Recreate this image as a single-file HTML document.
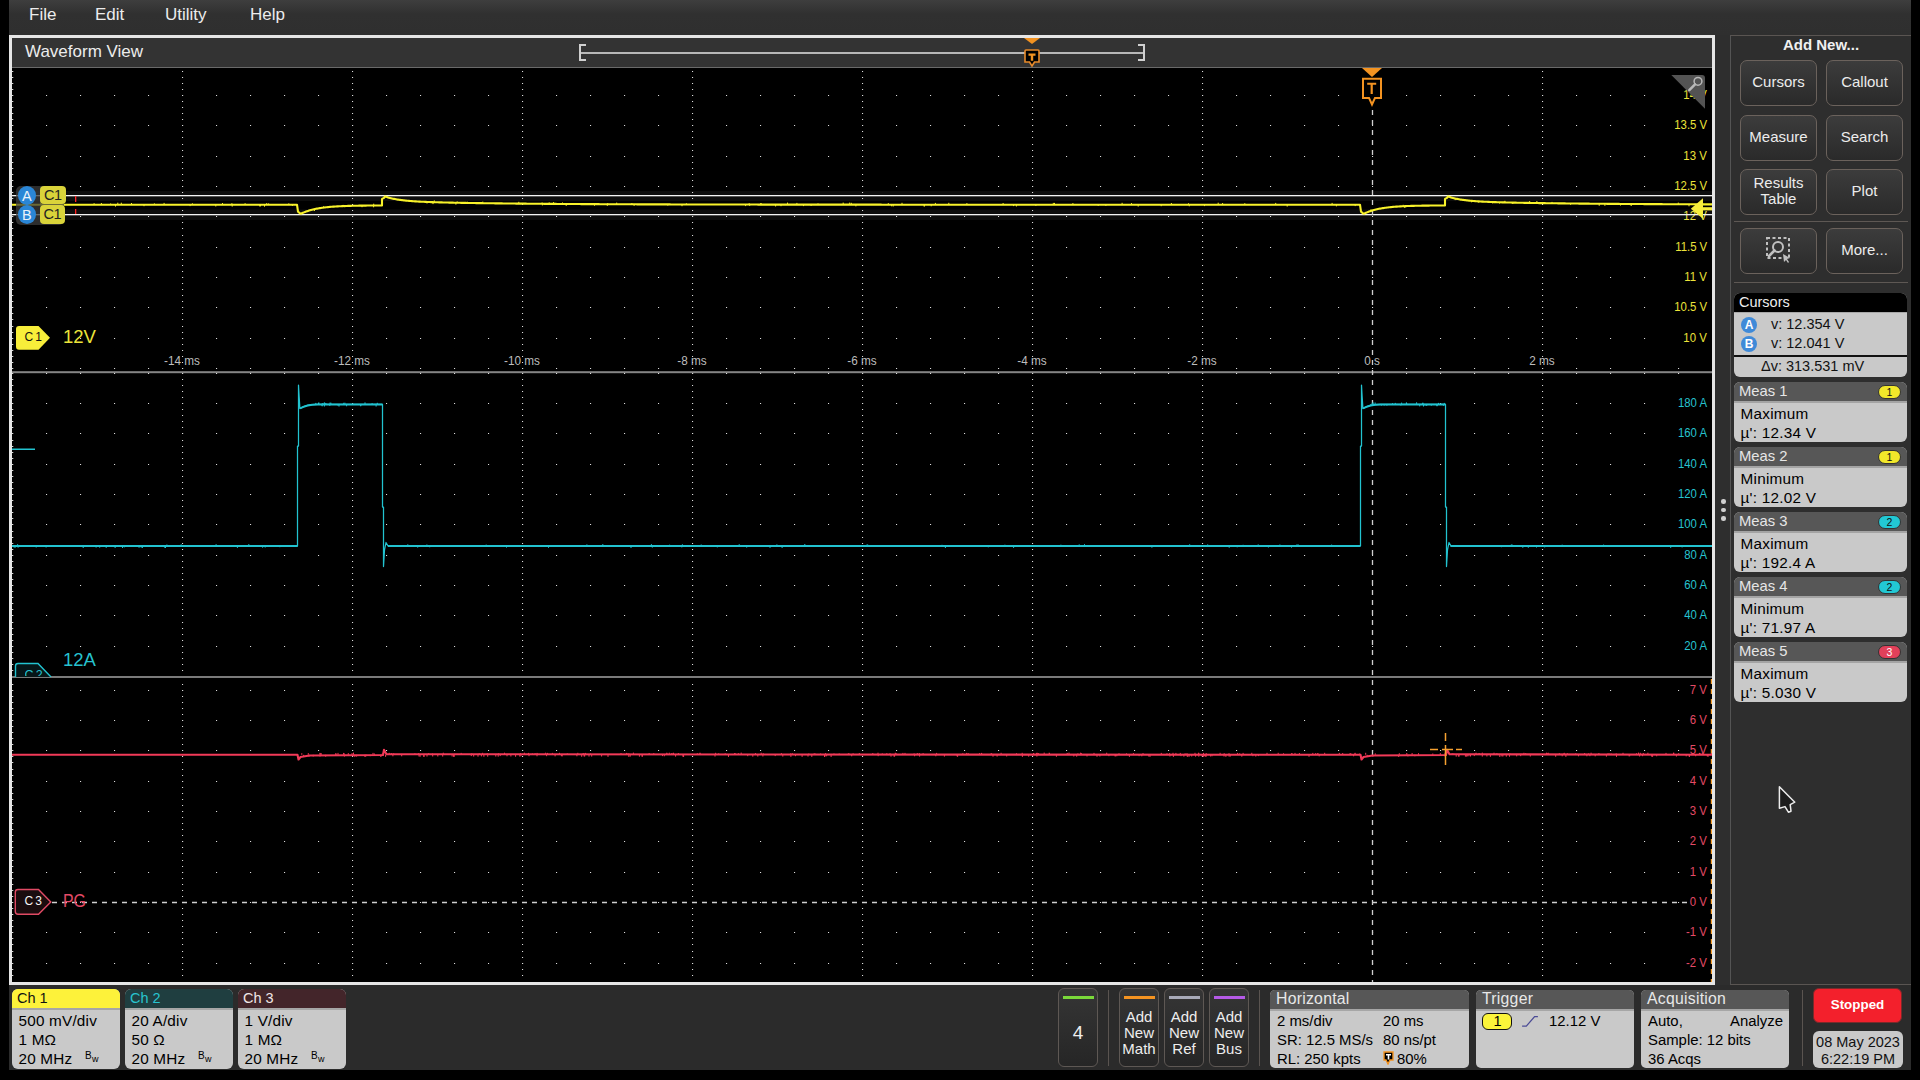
<!DOCTYPE html>
<html><head><meta charset="utf-8"><title>Waveform View</title>
<style>
*{box-sizing:border-box}
html,body{margin:0;padding:0}
body{width:1920px;height:1080px;background:#000;position:relative;overflow:hidden;font-family:"Liberation Sans",sans-serif;color:#e8e8e8}
.a{position:absolute;white-space:nowrap}
.menu{left:9px;top:0;width:1902px;height:35px;background:linear-gradient(#3e3e3e,#303030 14px,#2f2f2f)}
.menu span{position:absolute;top:4.5px;font-size:17px;color:#ececec}
.bg{left:9px;top:35px;width:1902px;height:1035px;background:#2e2e2e}
.frame{left:9px;top:35px;width:1706px;height:950px;border:3px solid #e6e6e6;background:#000}
.hdr{left:12px;top:38px;width:1700px;height:30px;background:#333;border-bottom:1px solid #6a6a6a}
.vl{font-size:12.5px;text-align:right;left:auto;right:213px;background:#000;padding:0 0 0 9px;line-height:15px;transform:scaleX(0.91);transform-origin:100% 50%}
.y{color:#ece43a}.c{color:#26c2cf}.r{color:#e44a66}
.tl{font-size:12.5px;color:#bdbdbd;width:80px;text-align:center;transform:scaleX(0.94)}
.panel{left:1730px;top:35px;width:181px;height:950px;border:1px solid #5a5552;border-left-color:#545454;border-right:none;background:#2e2e2e}
.btn{width:77px;height:46px;border:1px solid #6b625c;border-radius:7px;background:linear-gradient(#3c3c3c,#2a2a2a);color:#ececec;font-size:15px;text-align:center;display:flex;align-items:center;justify-content:center;line-height:16px;white-space:normal;padding-bottom:3px}
.sep{left:1734px;width:174px;height:1px;background:#5e5854}
.box{left:1734px;width:173px;border-radius:6px;overflow:hidden;background:#c9c9c9;color:#111}
.mh{height:21px;background:#575757;color:#e6e6e6;font-size:14.8px;padding-left:5px;line-height:19px;position:relative;border-bottom:2px solid #a4a4a4}
.badge{position:absolute;right:6px;top:3px;width:23px;height:14px;border-radius:7px;font-size:10.5px;line-height:12px;text-align:center;color:#111;border:1px solid #333}
.mb{font-size:15.3px;padding-left:6.5px;line-height:19.2px;padding-top:1px;color:#000;letter-spacing:0.25px}
.chb{top:988.5px;width:108px;height:80.3px;border-radius:6px;overflow:hidden;background:#c9c9c9;color:#111}
.chh{height:21px;font-size:14.5px;padding-left:5px;line-height:19px;border-bottom:2px solid #a6a6a6}
.chl{font-size:15.3px;padding-left:6.5px;line-height:19px;position:relative;top:1.5px;color:#000;letter-spacing:0.2px}
.bw{position:absolute;left:73px;top:0px;font-size:9px}
.bb{top:988px;width:40px;height:79px;border:1px solid #5e5854;border-radius:6px;background:linear-gradient(#353535,#262626);color:#eee;font-size:15px;text-align:center;line-height:16px}
.vsep{top:990px;width:1px;height:76px;background:#5a5450}
.ib{top:989.5px;height:78.5px;border-radius:5px;overflow:hidden;background:#c9c9c9;color:#111}
.ih{height:21px;background:#575757;color:#e8e8e8;font-size:15.8px;letter-spacing:0.25px;padding-left:6px;line-height:18px;border-bottom:2px solid #a6a6a6}
.il{font-size:14.9px;line-height:19px;position:absolute;color:#000}
</style></head><body>
<div class="a bg"></div>
<div class="a menu"><span style="left:20px">File</span><span style="left:86px">Edit</span><span style="left:156px">Utility</span><span style="left:241px">Help</span></div>

<div class="a frame"></div>
<div class="a hdr"></div>
<div class="a" style="left:25px;top:42px;font-size:17px;color:#ececec">Waveform View</div>
<!-- overview bar -->
<div class="a" style="left:580px;top:52px;width:564px;height:2px;background:#b8b8b8"></div>
<div class="a" style="left:579px;top:44px;width:7px;height:17px;border:2px solid #d0d0d0;border-right:none"></div>
<div class="a" style="left:1138px;top:44px;width:7px;height:17px;border:2px solid #d0d0d0;border-left:none"></div>
<svg class="a" style="left:1020px;top:37px" width="26" height="32" viewBox="1020 37 26 32">
<path d="M1024 38 L1040 38 L1032 44 Z" fill="#f39321"/>
<path d="M1026 50 h12 a1 1 0 0 1 1 1 v11 h-4.5 l-2.5 4 l-2.5 -4 h-4.5 v-11 a1 1 0 0 1 1 -1z" fill="#000" stroke="#e88a2a" stroke-width="1.6"/>
<path d="M1028.5 53.5 h7 v2.2 h-2.3 v5 h-2.4 v-5 h-2.3z" fill="#f39321"/>
</svg>

<svg class="a" style="left:12px;top:68px" width="1700" height="914" viewBox="12 68 1700 914">
<rect x="12" y="371.2" width="1700" height="2" fill="#858585"/>
<rect x="12" y="676" width="1700" height="2" fill="#7a7a7a"/>
<path fill="#dcdcdc" d="M46 95h1.1v1.1h-1.1zM80 95h1.1v1.1h-1.1zM114 95h1.1v1.1h-1.1zM148 95h1.1v1.1h-1.1zM182 95h1.1v1.1h-1.1zM216 95h1.1v1.1h-1.1zM250 95h1.1v1.1h-1.1zM284 95h1.1v1.1h-1.1zM318 95h1.1v1.1h-1.1zM352 95h1.1v1.1h-1.1zM386 95h1.1v1.1h-1.1zM420 95h1.1v1.1h-1.1zM454 95h1.1v1.1h-1.1zM488 95h1.1v1.1h-1.1zM522 95h1.1v1.1h-1.1zM556 95h1.1v1.1h-1.1zM590 95h1.1v1.1h-1.1zM624 95h1.1v1.1h-1.1zM658 95h1.1v1.1h-1.1zM692 95h1.1v1.1h-1.1zM726 95h1.1v1.1h-1.1zM760 95h1.1v1.1h-1.1zM794 95h1.1v1.1h-1.1zM828 95h1.1v1.1h-1.1zM862 95h1.1v1.1h-1.1zM896 95h1.1v1.1h-1.1zM930 95h1.1v1.1h-1.1zM964 95h1.1v1.1h-1.1zM998 95h1.1v1.1h-1.1zM1032 95h1.1v1.1h-1.1zM1066 95h1.1v1.1h-1.1zM1100 95h1.1v1.1h-1.1zM1134 95h1.1v1.1h-1.1zM1168 95h1.1v1.1h-1.1zM1202 95h1.1v1.1h-1.1zM1236 95h1.1v1.1h-1.1zM1270 95h1.1v1.1h-1.1zM1304 95h1.1v1.1h-1.1zM1338 95h1.1v1.1h-1.1zM1372 95h1.1v1.1h-1.1zM1406 95h1.1v1.1h-1.1zM1440 95h1.1v1.1h-1.1zM1474 95h1.1v1.1h-1.1zM1508 95h1.1v1.1h-1.1zM1542 95h1.1v1.1h-1.1zM1576 95h1.1v1.1h-1.1zM1610 95h1.1v1.1h-1.1zM1644 95h1.1v1.1h-1.1zM1678 95h1.1v1.1h-1.1zM46 125h1.1v1.1h-1.1zM80 125h1.1v1.1h-1.1zM114 125h1.1v1.1h-1.1zM148 125h1.1v1.1h-1.1zM182 125h1.1v1.1h-1.1zM216 125h1.1v1.1h-1.1zM250 125h1.1v1.1h-1.1zM284 125h1.1v1.1h-1.1zM318 125h1.1v1.1h-1.1zM352 125h1.1v1.1h-1.1zM386 125h1.1v1.1h-1.1zM420 125h1.1v1.1h-1.1zM454 125h1.1v1.1h-1.1zM488 125h1.1v1.1h-1.1zM522 125h1.1v1.1h-1.1zM556 125h1.1v1.1h-1.1zM590 125h1.1v1.1h-1.1zM624 125h1.1v1.1h-1.1zM658 125h1.1v1.1h-1.1zM692 125h1.1v1.1h-1.1zM726 125h1.1v1.1h-1.1zM760 125h1.1v1.1h-1.1zM794 125h1.1v1.1h-1.1zM828 125h1.1v1.1h-1.1zM862 125h1.1v1.1h-1.1zM896 125h1.1v1.1h-1.1zM930 125h1.1v1.1h-1.1zM964 125h1.1v1.1h-1.1zM998 125h1.1v1.1h-1.1zM1032 125h1.1v1.1h-1.1zM1066 125h1.1v1.1h-1.1zM1100 125h1.1v1.1h-1.1zM1134 125h1.1v1.1h-1.1zM1168 125h1.1v1.1h-1.1zM1202 125h1.1v1.1h-1.1zM1236 125h1.1v1.1h-1.1zM1270 125h1.1v1.1h-1.1zM1304 125h1.1v1.1h-1.1zM1338 125h1.1v1.1h-1.1zM1372 125h1.1v1.1h-1.1zM1406 125h1.1v1.1h-1.1zM1440 125h1.1v1.1h-1.1zM1474 125h1.1v1.1h-1.1zM1508 125h1.1v1.1h-1.1zM1542 125h1.1v1.1h-1.1zM1576 125h1.1v1.1h-1.1zM1610 125h1.1v1.1h-1.1zM1644 125h1.1v1.1h-1.1zM1678 125h1.1v1.1h-1.1zM46 156h1.1v1.1h-1.1zM80 156h1.1v1.1h-1.1zM114 156h1.1v1.1h-1.1zM148 156h1.1v1.1h-1.1zM182 156h1.1v1.1h-1.1zM216 156h1.1v1.1h-1.1zM250 156h1.1v1.1h-1.1zM284 156h1.1v1.1h-1.1zM318 156h1.1v1.1h-1.1zM352 156h1.1v1.1h-1.1zM386 156h1.1v1.1h-1.1zM420 156h1.1v1.1h-1.1zM454 156h1.1v1.1h-1.1zM488 156h1.1v1.1h-1.1zM522 156h1.1v1.1h-1.1zM556 156h1.1v1.1h-1.1zM590 156h1.1v1.1h-1.1zM624 156h1.1v1.1h-1.1zM658 156h1.1v1.1h-1.1zM692 156h1.1v1.1h-1.1zM726 156h1.1v1.1h-1.1zM760 156h1.1v1.1h-1.1zM794 156h1.1v1.1h-1.1zM828 156h1.1v1.1h-1.1zM862 156h1.1v1.1h-1.1zM896 156h1.1v1.1h-1.1zM930 156h1.1v1.1h-1.1zM964 156h1.1v1.1h-1.1zM998 156h1.1v1.1h-1.1zM1032 156h1.1v1.1h-1.1zM1066 156h1.1v1.1h-1.1zM1100 156h1.1v1.1h-1.1zM1134 156h1.1v1.1h-1.1zM1168 156h1.1v1.1h-1.1zM1202 156h1.1v1.1h-1.1zM1236 156h1.1v1.1h-1.1zM1270 156h1.1v1.1h-1.1zM1304 156h1.1v1.1h-1.1zM1338 156h1.1v1.1h-1.1zM1372 156h1.1v1.1h-1.1zM1406 156h1.1v1.1h-1.1zM1440 156h1.1v1.1h-1.1zM1474 156h1.1v1.1h-1.1zM1508 156h1.1v1.1h-1.1zM1542 156h1.1v1.1h-1.1zM1576 156h1.1v1.1h-1.1zM1610 156h1.1v1.1h-1.1zM1644 156h1.1v1.1h-1.1zM1678 156h1.1v1.1h-1.1zM46 186h1.1v1.1h-1.1zM80 186h1.1v1.1h-1.1zM114 186h1.1v1.1h-1.1zM148 186h1.1v1.1h-1.1zM182 186h1.1v1.1h-1.1zM216 186h1.1v1.1h-1.1zM250 186h1.1v1.1h-1.1zM284 186h1.1v1.1h-1.1zM318 186h1.1v1.1h-1.1zM352 186h1.1v1.1h-1.1zM386 186h1.1v1.1h-1.1zM420 186h1.1v1.1h-1.1zM454 186h1.1v1.1h-1.1zM488 186h1.1v1.1h-1.1zM522 186h1.1v1.1h-1.1zM556 186h1.1v1.1h-1.1zM590 186h1.1v1.1h-1.1zM624 186h1.1v1.1h-1.1zM658 186h1.1v1.1h-1.1zM692 186h1.1v1.1h-1.1zM726 186h1.1v1.1h-1.1zM760 186h1.1v1.1h-1.1zM794 186h1.1v1.1h-1.1zM828 186h1.1v1.1h-1.1zM862 186h1.1v1.1h-1.1zM896 186h1.1v1.1h-1.1zM930 186h1.1v1.1h-1.1zM964 186h1.1v1.1h-1.1zM998 186h1.1v1.1h-1.1zM1032 186h1.1v1.1h-1.1zM1066 186h1.1v1.1h-1.1zM1100 186h1.1v1.1h-1.1zM1134 186h1.1v1.1h-1.1zM1168 186h1.1v1.1h-1.1zM1202 186h1.1v1.1h-1.1zM1236 186h1.1v1.1h-1.1zM1270 186h1.1v1.1h-1.1zM1304 186h1.1v1.1h-1.1zM1338 186h1.1v1.1h-1.1zM1372 186h1.1v1.1h-1.1zM1406 186h1.1v1.1h-1.1zM1440 186h1.1v1.1h-1.1zM1474 186h1.1v1.1h-1.1zM1508 186h1.1v1.1h-1.1zM1542 186h1.1v1.1h-1.1zM1576 186h1.1v1.1h-1.1zM1610 186h1.1v1.1h-1.1zM1644 186h1.1v1.1h-1.1zM1678 186h1.1v1.1h-1.1zM46 216h1.1v1.1h-1.1zM80 216h1.1v1.1h-1.1zM114 216h1.1v1.1h-1.1zM148 216h1.1v1.1h-1.1zM182 216h1.1v1.1h-1.1zM216 216h1.1v1.1h-1.1zM250 216h1.1v1.1h-1.1zM284 216h1.1v1.1h-1.1zM318 216h1.1v1.1h-1.1zM352 216h1.1v1.1h-1.1zM386 216h1.1v1.1h-1.1zM420 216h1.1v1.1h-1.1zM454 216h1.1v1.1h-1.1zM488 216h1.1v1.1h-1.1zM522 216h1.1v1.1h-1.1zM556 216h1.1v1.1h-1.1zM590 216h1.1v1.1h-1.1zM624 216h1.1v1.1h-1.1zM658 216h1.1v1.1h-1.1zM692 216h1.1v1.1h-1.1zM726 216h1.1v1.1h-1.1zM760 216h1.1v1.1h-1.1zM794 216h1.1v1.1h-1.1zM828 216h1.1v1.1h-1.1zM862 216h1.1v1.1h-1.1zM896 216h1.1v1.1h-1.1zM930 216h1.1v1.1h-1.1zM964 216h1.1v1.1h-1.1zM998 216h1.1v1.1h-1.1zM1032 216h1.1v1.1h-1.1zM1066 216h1.1v1.1h-1.1zM1100 216h1.1v1.1h-1.1zM1134 216h1.1v1.1h-1.1zM1168 216h1.1v1.1h-1.1zM1202 216h1.1v1.1h-1.1zM1236 216h1.1v1.1h-1.1zM1270 216h1.1v1.1h-1.1zM1304 216h1.1v1.1h-1.1zM1338 216h1.1v1.1h-1.1zM1372 216h1.1v1.1h-1.1zM1406 216h1.1v1.1h-1.1zM1440 216h1.1v1.1h-1.1zM1474 216h1.1v1.1h-1.1zM1508 216h1.1v1.1h-1.1zM1542 216h1.1v1.1h-1.1zM1576 216h1.1v1.1h-1.1zM1610 216h1.1v1.1h-1.1zM1644 216h1.1v1.1h-1.1zM1678 216h1.1v1.1h-1.1zM46 247h1.1v1.1h-1.1zM80 247h1.1v1.1h-1.1zM114 247h1.1v1.1h-1.1zM148 247h1.1v1.1h-1.1zM182 247h1.1v1.1h-1.1zM216 247h1.1v1.1h-1.1zM250 247h1.1v1.1h-1.1zM284 247h1.1v1.1h-1.1zM318 247h1.1v1.1h-1.1zM352 247h1.1v1.1h-1.1zM386 247h1.1v1.1h-1.1zM420 247h1.1v1.1h-1.1zM454 247h1.1v1.1h-1.1zM488 247h1.1v1.1h-1.1zM522 247h1.1v1.1h-1.1zM556 247h1.1v1.1h-1.1zM590 247h1.1v1.1h-1.1zM624 247h1.1v1.1h-1.1zM658 247h1.1v1.1h-1.1zM692 247h1.1v1.1h-1.1zM726 247h1.1v1.1h-1.1zM760 247h1.1v1.1h-1.1zM794 247h1.1v1.1h-1.1zM828 247h1.1v1.1h-1.1zM862 247h1.1v1.1h-1.1zM896 247h1.1v1.1h-1.1zM930 247h1.1v1.1h-1.1zM964 247h1.1v1.1h-1.1zM998 247h1.1v1.1h-1.1zM1032 247h1.1v1.1h-1.1zM1066 247h1.1v1.1h-1.1zM1100 247h1.1v1.1h-1.1zM1134 247h1.1v1.1h-1.1zM1168 247h1.1v1.1h-1.1zM1202 247h1.1v1.1h-1.1zM1236 247h1.1v1.1h-1.1zM1270 247h1.1v1.1h-1.1zM1304 247h1.1v1.1h-1.1zM1338 247h1.1v1.1h-1.1zM1372 247h1.1v1.1h-1.1zM1406 247h1.1v1.1h-1.1zM1440 247h1.1v1.1h-1.1zM1474 247h1.1v1.1h-1.1zM1508 247h1.1v1.1h-1.1zM1542 247h1.1v1.1h-1.1zM1576 247h1.1v1.1h-1.1zM1610 247h1.1v1.1h-1.1zM1644 247h1.1v1.1h-1.1zM1678 247h1.1v1.1h-1.1zM46 277h1.1v1.1h-1.1zM80 277h1.1v1.1h-1.1zM114 277h1.1v1.1h-1.1zM148 277h1.1v1.1h-1.1zM182 277h1.1v1.1h-1.1zM216 277h1.1v1.1h-1.1zM250 277h1.1v1.1h-1.1zM284 277h1.1v1.1h-1.1zM318 277h1.1v1.1h-1.1zM352 277h1.1v1.1h-1.1zM386 277h1.1v1.1h-1.1zM420 277h1.1v1.1h-1.1zM454 277h1.1v1.1h-1.1zM488 277h1.1v1.1h-1.1zM522 277h1.1v1.1h-1.1zM556 277h1.1v1.1h-1.1zM590 277h1.1v1.1h-1.1zM624 277h1.1v1.1h-1.1zM658 277h1.1v1.1h-1.1zM692 277h1.1v1.1h-1.1zM726 277h1.1v1.1h-1.1zM760 277h1.1v1.1h-1.1zM794 277h1.1v1.1h-1.1zM828 277h1.1v1.1h-1.1zM862 277h1.1v1.1h-1.1zM896 277h1.1v1.1h-1.1zM930 277h1.1v1.1h-1.1zM964 277h1.1v1.1h-1.1zM998 277h1.1v1.1h-1.1zM1032 277h1.1v1.1h-1.1zM1066 277h1.1v1.1h-1.1zM1100 277h1.1v1.1h-1.1zM1134 277h1.1v1.1h-1.1zM1168 277h1.1v1.1h-1.1zM1202 277h1.1v1.1h-1.1zM1236 277h1.1v1.1h-1.1zM1270 277h1.1v1.1h-1.1zM1304 277h1.1v1.1h-1.1zM1338 277h1.1v1.1h-1.1zM1372 277h1.1v1.1h-1.1zM1406 277h1.1v1.1h-1.1zM1440 277h1.1v1.1h-1.1zM1474 277h1.1v1.1h-1.1zM1508 277h1.1v1.1h-1.1zM1542 277h1.1v1.1h-1.1zM1576 277h1.1v1.1h-1.1zM1610 277h1.1v1.1h-1.1zM1644 277h1.1v1.1h-1.1zM1678 277h1.1v1.1h-1.1zM46 307h1.1v1.1h-1.1zM80 307h1.1v1.1h-1.1zM114 307h1.1v1.1h-1.1zM148 307h1.1v1.1h-1.1zM182 307h1.1v1.1h-1.1zM216 307h1.1v1.1h-1.1zM250 307h1.1v1.1h-1.1zM284 307h1.1v1.1h-1.1zM318 307h1.1v1.1h-1.1zM352 307h1.1v1.1h-1.1zM386 307h1.1v1.1h-1.1zM420 307h1.1v1.1h-1.1zM454 307h1.1v1.1h-1.1zM488 307h1.1v1.1h-1.1zM522 307h1.1v1.1h-1.1zM556 307h1.1v1.1h-1.1zM590 307h1.1v1.1h-1.1zM624 307h1.1v1.1h-1.1zM658 307h1.1v1.1h-1.1zM692 307h1.1v1.1h-1.1zM726 307h1.1v1.1h-1.1zM760 307h1.1v1.1h-1.1zM794 307h1.1v1.1h-1.1zM828 307h1.1v1.1h-1.1zM862 307h1.1v1.1h-1.1zM896 307h1.1v1.1h-1.1zM930 307h1.1v1.1h-1.1zM964 307h1.1v1.1h-1.1zM998 307h1.1v1.1h-1.1zM1032 307h1.1v1.1h-1.1zM1066 307h1.1v1.1h-1.1zM1100 307h1.1v1.1h-1.1zM1134 307h1.1v1.1h-1.1zM1168 307h1.1v1.1h-1.1zM1202 307h1.1v1.1h-1.1zM1236 307h1.1v1.1h-1.1zM1270 307h1.1v1.1h-1.1zM1304 307h1.1v1.1h-1.1zM1338 307h1.1v1.1h-1.1zM1372 307h1.1v1.1h-1.1zM1406 307h1.1v1.1h-1.1zM1440 307h1.1v1.1h-1.1zM1474 307h1.1v1.1h-1.1zM1508 307h1.1v1.1h-1.1zM1542 307h1.1v1.1h-1.1zM1576 307h1.1v1.1h-1.1zM1610 307h1.1v1.1h-1.1zM1644 307h1.1v1.1h-1.1zM1678 307h1.1v1.1h-1.1zM46 338h1.1v1.1h-1.1zM80 338h1.1v1.1h-1.1zM114 338h1.1v1.1h-1.1zM148 338h1.1v1.1h-1.1zM182 338h1.1v1.1h-1.1zM216 338h1.1v1.1h-1.1zM250 338h1.1v1.1h-1.1zM284 338h1.1v1.1h-1.1zM318 338h1.1v1.1h-1.1zM352 338h1.1v1.1h-1.1zM386 338h1.1v1.1h-1.1zM420 338h1.1v1.1h-1.1zM454 338h1.1v1.1h-1.1zM488 338h1.1v1.1h-1.1zM522 338h1.1v1.1h-1.1zM556 338h1.1v1.1h-1.1zM590 338h1.1v1.1h-1.1zM624 338h1.1v1.1h-1.1zM658 338h1.1v1.1h-1.1zM692 338h1.1v1.1h-1.1zM726 338h1.1v1.1h-1.1zM760 338h1.1v1.1h-1.1zM794 338h1.1v1.1h-1.1zM828 338h1.1v1.1h-1.1zM862 338h1.1v1.1h-1.1zM896 338h1.1v1.1h-1.1zM930 338h1.1v1.1h-1.1zM964 338h1.1v1.1h-1.1zM998 338h1.1v1.1h-1.1zM1032 338h1.1v1.1h-1.1zM1066 338h1.1v1.1h-1.1zM1100 338h1.1v1.1h-1.1zM1134 338h1.1v1.1h-1.1zM1168 338h1.1v1.1h-1.1zM1202 338h1.1v1.1h-1.1zM1236 338h1.1v1.1h-1.1zM1270 338h1.1v1.1h-1.1zM1304 338h1.1v1.1h-1.1zM1338 338h1.1v1.1h-1.1zM1372 338h1.1v1.1h-1.1zM1406 338h1.1v1.1h-1.1zM1440 338h1.1v1.1h-1.1zM1474 338h1.1v1.1h-1.1zM1508 338h1.1v1.1h-1.1zM1542 338h1.1v1.1h-1.1zM1576 338h1.1v1.1h-1.1zM1610 338h1.1v1.1h-1.1zM1644 338h1.1v1.1h-1.1zM1678 338h1.1v1.1h-1.1zM46 368h1.1v1.1h-1.1zM80 368h1.1v1.1h-1.1zM114 368h1.1v1.1h-1.1zM148 368h1.1v1.1h-1.1zM182 368h1.1v1.1h-1.1zM216 368h1.1v1.1h-1.1zM250 368h1.1v1.1h-1.1zM284 368h1.1v1.1h-1.1zM318 368h1.1v1.1h-1.1zM352 368h1.1v1.1h-1.1zM386 368h1.1v1.1h-1.1zM420 368h1.1v1.1h-1.1zM454 368h1.1v1.1h-1.1zM488 368h1.1v1.1h-1.1zM522 368h1.1v1.1h-1.1zM556 368h1.1v1.1h-1.1zM590 368h1.1v1.1h-1.1zM624 368h1.1v1.1h-1.1zM658 368h1.1v1.1h-1.1zM692 368h1.1v1.1h-1.1zM726 368h1.1v1.1h-1.1zM760 368h1.1v1.1h-1.1zM794 368h1.1v1.1h-1.1zM828 368h1.1v1.1h-1.1zM862 368h1.1v1.1h-1.1zM896 368h1.1v1.1h-1.1zM930 368h1.1v1.1h-1.1zM964 368h1.1v1.1h-1.1zM998 368h1.1v1.1h-1.1zM1032 368h1.1v1.1h-1.1zM1066 368h1.1v1.1h-1.1zM1100 368h1.1v1.1h-1.1zM1134 368h1.1v1.1h-1.1zM1168 368h1.1v1.1h-1.1zM1202 368h1.1v1.1h-1.1zM1236 368h1.1v1.1h-1.1zM1270 368h1.1v1.1h-1.1zM1304 368h1.1v1.1h-1.1zM1338 368h1.1v1.1h-1.1zM1372 368h1.1v1.1h-1.1zM1406 368h1.1v1.1h-1.1zM1440 368h1.1v1.1h-1.1zM1474 368h1.1v1.1h-1.1zM1508 368h1.1v1.1h-1.1zM1542 368h1.1v1.1h-1.1zM1576 368h1.1v1.1h-1.1zM1610 368h1.1v1.1h-1.1zM1644 368h1.1v1.1h-1.1zM1678 368h1.1v1.1h-1.1zM46 373h1.1v1.1h-1.1zM80 373h1.1v1.1h-1.1zM114 373h1.1v1.1h-1.1zM148 373h1.1v1.1h-1.1zM182 373h1.1v1.1h-1.1zM216 373h1.1v1.1h-1.1zM250 373h1.1v1.1h-1.1zM284 373h1.1v1.1h-1.1zM318 373h1.1v1.1h-1.1zM352 373h1.1v1.1h-1.1zM386 373h1.1v1.1h-1.1zM420 373h1.1v1.1h-1.1zM454 373h1.1v1.1h-1.1zM488 373h1.1v1.1h-1.1zM522 373h1.1v1.1h-1.1zM556 373h1.1v1.1h-1.1zM590 373h1.1v1.1h-1.1zM624 373h1.1v1.1h-1.1zM658 373h1.1v1.1h-1.1zM692 373h1.1v1.1h-1.1zM726 373h1.1v1.1h-1.1zM760 373h1.1v1.1h-1.1zM794 373h1.1v1.1h-1.1zM828 373h1.1v1.1h-1.1zM862 373h1.1v1.1h-1.1zM896 373h1.1v1.1h-1.1zM930 373h1.1v1.1h-1.1zM964 373h1.1v1.1h-1.1zM998 373h1.1v1.1h-1.1zM1032 373h1.1v1.1h-1.1zM1066 373h1.1v1.1h-1.1zM1100 373h1.1v1.1h-1.1zM1134 373h1.1v1.1h-1.1zM1168 373h1.1v1.1h-1.1zM1202 373h1.1v1.1h-1.1zM1236 373h1.1v1.1h-1.1zM1270 373h1.1v1.1h-1.1zM1304 373h1.1v1.1h-1.1zM1338 373h1.1v1.1h-1.1zM1372 373h1.1v1.1h-1.1zM1406 373h1.1v1.1h-1.1zM1440 373h1.1v1.1h-1.1zM1474 373h1.1v1.1h-1.1zM1508 373h1.1v1.1h-1.1zM1542 373h1.1v1.1h-1.1zM1576 373h1.1v1.1h-1.1zM1610 373h1.1v1.1h-1.1zM1644 373h1.1v1.1h-1.1zM1678 373h1.1v1.1h-1.1zM46 403h1.1v1.1h-1.1zM80 403h1.1v1.1h-1.1zM114 403h1.1v1.1h-1.1zM148 403h1.1v1.1h-1.1zM182 403h1.1v1.1h-1.1zM216 403h1.1v1.1h-1.1zM250 403h1.1v1.1h-1.1zM284 403h1.1v1.1h-1.1zM318 403h1.1v1.1h-1.1zM352 403h1.1v1.1h-1.1zM386 403h1.1v1.1h-1.1zM420 403h1.1v1.1h-1.1zM454 403h1.1v1.1h-1.1zM488 403h1.1v1.1h-1.1zM522 403h1.1v1.1h-1.1zM556 403h1.1v1.1h-1.1zM590 403h1.1v1.1h-1.1zM624 403h1.1v1.1h-1.1zM658 403h1.1v1.1h-1.1zM692 403h1.1v1.1h-1.1zM726 403h1.1v1.1h-1.1zM760 403h1.1v1.1h-1.1zM794 403h1.1v1.1h-1.1zM828 403h1.1v1.1h-1.1zM862 403h1.1v1.1h-1.1zM896 403h1.1v1.1h-1.1zM930 403h1.1v1.1h-1.1zM964 403h1.1v1.1h-1.1zM998 403h1.1v1.1h-1.1zM1032 403h1.1v1.1h-1.1zM1066 403h1.1v1.1h-1.1zM1100 403h1.1v1.1h-1.1zM1134 403h1.1v1.1h-1.1zM1168 403h1.1v1.1h-1.1zM1202 403h1.1v1.1h-1.1zM1236 403h1.1v1.1h-1.1zM1270 403h1.1v1.1h-1.1zM1304 403h1.1v1.1h-1.1zM1338 403h1.1v1.1h-1.1zM1372 403h1.1v1.1h-1.1zM1406 403h1.1v1.1h-1.1zM1440 403h1.1v1.1h-1.1zM1474 403h1.1v1.1h-1.1zM1508 403h1.1v1.1h-1.1zM1542 403h1.1v1.1h-1.1zM1576 403h1.1v1.1h-1.1zM1610 403h1.1v1.1h-1.1zM1644 403h1.1v1.1h-1.1zM1678 403h1.1v1.1h-1.1zM46 433h1.1v1.1h-1.1zM80 433h1.1v1.1h-1.1zM114 433h1.1v1.1h-1.1zM148 433h1.1v1.1h-1.1zM182 433h1.1v1.1h-1.1zM216 433h1.1v1.1h-1.1zM250 433h1.1v1.1h-1.1zM284 433h1.1v1.1h-1.1zM318 433h1.1v1.1h-1.1zM352 433h1.1v1.1h-1.1zM386 433h1.1v1.1h-1.1zM420 433h1.1v1.1h-1.1zM454 433h1.1v1.1h-1.1zM488 433h1.1v1.1h-1.1zM522 433h1.1v1.1h-1.1zM556 433h1.1v1.1h-1.1zM590 433h1.1v1.1h-1.1zM624 433h1.1v1.1h-1.1zM658 433h1.1v1.1h-1.1zM692 433h1.1v1.1h-1.1zM726 433h1.1v1.1h-1.1zM760 433h1.1v1.1h-1.1zM794 433h1.1v1.1h-1.1zM828 433h1.1v1.1h-1.1zM862 433h1.1v1.1h-1.1zM896 433h1.1v1.1h-1.1zM930 433h1.1v1.1h-1.1zM964 433h1.1v1.1h-1.1zM998 433h1.1v1.1h-1.1zM1032 433h1.1v1.1h-1.1zM1066 433h1.1v1.1h-1.1zM1100 433h1.1v1.1h-1.1zM1134 433h1.1v1.1h-1.1zM1168 433h1.1v1.1h-1.1zM1202 433h1.1v1.1h-1.1zM1236 433h1.1v1.1h-1.1zM1270 433h1.1v1.1h-1.1zM1304 433h1.1v1.1h-1.1zM1338 433h1.1v1.1h-1.1zM1372 433h1.1v1.1h-1.1zM1406 433h1.1v1.1h-1.1zM1440 433h1.1v1.1h-1.1zM1474 433h1.1v1.1h-1.1zM1508 433h1.1v1.1h-1.1zM1542 433h1.1v1.1h-1.1zM1576 433h1.1v1.1h-1.1zM1610 433h1.1v1.1h-1.1zM1644 433h1.1v1.1h-1.1zM1678 433h1.1v1.1h-1.1zM46 464h1.1v1.1h-1.1zM80 464h1.1v1.1h-1.1zM114 464h1.1v1.1h-1.1zM148 464h1.1v1.1h-1.1zM182 464h1.1v1.1h-1.1zM216 464h1.1v1.1h-1.1zM250 464h1.1v1.1h-1.1zM284 464h1.1v1.1h-1.1zM318 464h1.1v1.1h-1.1zM352 464h1.1v1.1h-1.1zM386 464h1.1v1.1h-1.1zM420 464h1.1v1.1h-1.1zM454 464h1.1v1.1h-1.1zM488 464h1.1v1.1h-1.1zM522 464h1.1v1.1h-1.1zM556 464h1.1v1.1h-1.1zM590 464h1.1v1.1h-1.1zM624 464h1.1v1.1h-1.1zM658 464h1.1v1.1h-1.1zM692 464h1.1v1.1h-1.1zM726 464h1.1v1.1h-1.1zM760 464h1.1v1.1h-1.1zM794 464h1.1v1.1h-1.1zM828 464h1.1v1.1h-1.1zM862 464h1.1v1.1h-1.1zM896 464h1.1v1.1h-1.1zM930 464h1.1v1.1h-1.1zM964 464h1.1v1.1h-1.1zM998 464h1.1v1.1h-1.1zM1032 464h1.1v1.1h-1.1zM1066 464h1.1v1.1h-1.1zM1100 464h1.1v1.1h-1.1zM1134 464h1.1v1.1h-1.1zM1168 464h1.1v1.1h-1.1zM1202 464h1.1v1.1h-1.1zM1236 464h1.1v1.1h-1.1zM1270 464h1.1v1.1h-1.1zM1304 464h1.1v1.1h-1.1zM1338 464h1.1v1.1h-1.1zM1372 464h1.1v1.1h-1.1zM1406 464h1.1v1.1h-1.1zM1440 464h1.1v1.1h-1.1zM1474 464h1.1v1.1h-1.1zM1508 464h1.1v1.1h-1.1zM1542 464h1.1v1.1h-1.1zM1576 464h1.1v1.1h-1.1zM1610 464h1.1v1.1h-1.1zM1644 464h1.1v1.1h-1.1zM1678 464h1.1v1.1h-1.1zM46 494h1.1v1.1h-1.1zM80 494h1.1v1.1h-1.1zM114 494h1.1v1.1h-1.1zM148 494h1.1v1.1h-1.1zM182 494h1.1v1.1h-1.1zM216 494h1.1v1.1h-1.1zM250 494h1.1v1.1h-1.1zM284 494h1.1v1.1h-1.1zM318 494h1.1v1.1h-1.1zM352 494h1.1v1.1h-1.1zM386 494h1.1v1.1h-1.1zM420 494h1.1v1.1h-1.1zM454 494h1.1v1.1h-1.1zM488 494h1.1v1.1h-1.1zM522 494h1.1v1.1h-1.1zM556 494h1.1v1.1h-1.1zM590 494h1.1v1.1h-1.1zM624 494h1.1v1.1h-1.1zM658 494h1.1v1.1h-1.1zM692 494h1.1v1.1h-1.1zM726 494h1.1v1.1h-1.1zM760 494h1.1v1.1h-1.1zM794 494h1.1v1.1h-1.1zM828 494h1.1v1.1h-1.1zM862 494h1.1v1.1h-1.1zM896 494h1.1v1.1h-1.1zM930 494h1.1v1.1h-1.1zM964 494h1.1v1.1h-1.1zM998 494h1.1v1.1h-1.1zM1032 494h1.1v1.1h-1.1zM1066 494h1.1v1.1h-1.1zM1100 494h1.1v1.1h-1.1zM1134 494h1.1v1.1h-1.1zM1168 494h1.1v1.1h-1.1zM1202 494h1.1v1.1h-1.1zM1236 494h1.1v1.1h-1.1zM1270 494h1.1v1.1h-1.1zM1304 494h1.1v1.1h-1.1zM1338 494h1.1v1.1h-1.1zM1372 494h1.1v1.1h-1.1zM1406 494h1.1v1.1h-1.1zM1440 494h1.1v1.1h-1.1zM1474 494h1.1v1.1h-1.1zM1508 494h1.1v1.1h-1.1zM1542 494h1.1v1.1h-1.1zM1576 494h1.1v1.1h-1.1zM1610 494h1.1v1.1h-1.1zM1644 494h1.1v1.1h-1.1zM1678 494h1.1v1.1h-1.1zM46 524h1.1v1.1h-1.1zM80 524h1.1v1.1h-1.1zM114 524h1.1v1.1h-1.1zM148 524h1.1v1.1h-1.1zM182 524h1.1v1.1h-1.1zM216 524h1.1v1.1h-1.1zM250 524h1.1v1.1h-1.1zM284 524h1.1v1.1h-1.1zM318 524h1.1v1.1h-1.1zM352 524h1.1v1.1h-1.1zM386 524h1.1v1.1h-1.1zM420 524h1.1v1.1h-1.1zM454 524h1.1v1.1h-1.1zM488 524h1.1v1.1h-1.1zM522 524h1.1v1.1h-1.1zM556 524h1.1v1.1h-1.1zM590 524h1.1v1.1h-1.1zM624 524h1.1v1.1h-1.1zM658 524h1.1v1.1h-1.1zM692 524h1.1v1.1h-1.1zM726 524h1.1v1.1h-1.1zM760 524h1.1v1.1h-1.1zM794 524h1.1v1.1h-1.1zM828 524h1.1v1.1h-1.1zM862 524h1.1v1.1h-1.1zM896 524h1.1v1.1h-1.1zM930 524h1.1v1.1h-1.1zM964 524h1.1v1.1h-1.1zM998 524h1.1v1.1h-1.1zM1032 524h1.1v1.1h-1.1zM1066 524h1.1v1.1h-1.1zM1100 524h1.1v1.1h-1.1zM1134 524h1.1v1.1h-1.1zM1168 524h1.1v1.1h-1.1zM1202 524h1.1v1.1h-1.1zM1236 524h1.1v1.1h-1.1zM1270 524h1.1v1.1h-1.1zM1304 524h1.1v1.1h-1.1zM1338 524h1.1v1.1h-1.1zM1372 524h1.1v1.1h-1.1zM1406 524h1.1v1.1h-1.1zM1440 524h1.1v1.1h-1.1zM1474 524h1.1v1.1h-1.1zM1508 524h1.1v1.1h-1.1zM1542 524h1.1v1.1h-1.1zM1576 524h1.1v1.1h-1.1zM1610 524h1.1v1.1h-1.1zM1644 524h1.1v1.1h-1.1zM1678 524h1.1v1.1h-1.1zM46 555h1.1v1.1h-1.1zM80 555h1.1v1.1h-1.1zM114 555h1.1v1.1h-1.1zM148 555h1.1v1.1h-1.1zM182 555h1.1v1.1h-1.1zM216 555h1.1v1.1h-1.1zM250 555h1.1v1.1h-1.1zM284 555h1.1v1.1h-1.1zM318 555h1.1v1.1h-1.1zM352 555h1.1v1.1h-1.1zM386 555h1.1v1.1h-1.1zM420 555h1.1v1.1h-1.1zM454 555h1.1v1.1h-1.1zM488 555h1.1v1.1h-1.1zM522 555h1.1v1.1h-1.1zM556 555h1.1v1.1h-1.1zM590 555h1.1v1.1h-1.1zM624 555h1.1v1.1h-1.1zM658 555h1.1v1.1h-1.1zM692 555h1.1v1.1h-1.1zM726 555h1.1v1.1h-1.1zM760 555h1.1v1.1h-1.1zM794 555h1.1v1.1h-1.1zM828 555h1.1v1.1h-1.1zM862 555h1.1v1.1h-1.1zM896 555h1.1v1.1h-1.1zM930 555h1.1v1.1h-1.1zM964 555h1.1v1.1h-1.1zM998 555h1.1v1.1h-1.1zM1032 555h1.1v1.1h-1.1zM1066 555h1.1v1.1h-1.1zM1100 555h1.1v1.1h-1.1zM1134 555h1.1v1.1h-1.1zM1168 555h1.1v1.1h-1.1zM1202 555h1.1v1.1h-1.1zM1236 555h1.1v1.1h-1.1zM1270 555h1.1v1.1h-1.1zM1304 555h1.1v1.1h-1.1zM1338 555h1.1v1.1h-1.1zM1372 555h1.1v1.1h-1.1zM1406 555h1.1v1.1h-1.1zM1440 555h1.1v1.1h-1.1zM1474 555h1.1v1.1h-1.1zM1508 555h1.1v1.1h-1.1zM1542 555h1.1v1.1h-1.1zM1576 555h1.1v1.1h-1.1zM1610 555h1.1v1.1h-1.1zM1644 555h1.1v1.1h-1.1zM1678 555h1.1v1.1h-1.1zM46 585h1.1v1.1h-1.1zM80 585h1.1v1.1h-1.1zM114 585h1.1v1.1h-1.1zM148 585h1.1v1.1h-1.1zM182 585h1.1v1.1h-1.1zM216 585h1.1v1.1h-1.1zM250 585h1.1v1.1h-1.1zM284 585h1.1v1.1h-1.1zM318 585h1.1v1.1h-1.1zM352 585h1.1v1.1h-1.1zM386 585h1.1v1.1h-1.1zM420 585h1.1v1.1h-1.1zM454 585h1.1v1.1h-1.1zM488 585h1.1v1.1h-1.1zM522 585h1.1v1.1h-1.1zM556 585h1.1v1.1h-1.1zM590 585h1.1v1.1h-1.1zM624 585h1.1v1.1h-1.1zM658 585h1.1v1.1h-1.1zM692 585h1.1v1.1h-1.1zM726 585h1.1v1.1h-1.1zM760 585h1.1v1.1h-1.1zM794 585h1.1v1.1h-1.1zM828 585h1.1v1.1h-1.1zM862 585h1.1v1.1h-1.1zM896 585h1.1v1.1h-1.1zM930 585h1.1v1.1h-1.1zM964 585h1.1v1.1h-1.1zM998 585h1.1v1.1h-1.1zM1032 585h1.1v1.1h-1.1zM1066 585h1.1v1.1h-1.1zM1100 585h1.1v1.1h-1.1zM1134 585h1.1v1.1h-1.1zM1168 585h1.1v1.1h-1.1zM1202 585h1.1v1.1h-1.1zM1236 585h1.1v1.1h-1.1zM1270 585h1.1v1.1h-1.1zM1304 585h1.1v1.1h-1.1zM1338 585h1.1v1.1h-1.1zM1372 585h1.1v1.1h-1.1zM1406 585h1.1v1.1h-1.1zM1440 585h1.1v1.1h-1.1zM1474 585h1.1v1.1h-1.1zM1508 585h1.1v1.1h-1.1zM1542 585h1.1v1.1h-1.1zM1576 585h1.1v1.1h-1.1zM1610 585h1.1v1.1h-1.1zM1644 585h1.1v1.1h-1.1zM1678 585h1.1v1.1h-1.1zM46 615h1.1v1.1h-1.1zM80 615h1.1v1.1h-1.1zM114 615h1.1v1.1h-1.1zM148 615h1.1v1.1h-1.1zM182 615h1.1v1.1h-1.1zM216 615h1.1v1.1h-1.1zM250 615h1.1v1.1h-1.1zM284 615h1.1v1.1h-1.1zM318 615h1.1v1.1h-1.1zM352 615h1.1v1.1h-1.1zM386 615h1.1v1.1h-1.1zM420 615h1.1v1.1h-1.1zM454 615h1.1v1.1h-1.1zM488 615h1.1v1.1h-1.1zM522 615h1.1v1.1h-1.1zM556 615h1.1v1.1h-1.1zM590 615h1.1v1.1h-1.1zM624 615h1.1v1.1h-1.1zM658 615h1.1v1.1h-1.1zM692 615h1.1v1.1h-1.1zM726 615h1.1v1.1h-1.1zM760 615h1.1v1.1h-1.1zM794 615h1.1v1.1h-1.1zM828 615h1.1v1.1h-1.1zM862 615h1.1v1.1h-1.1zM896 615h1.1v1.1h-1.1zM930 615h1.1v1.1h-1.1zM964 615h1.1v1.1h-1.1zM998 615h1.1v1.1h-1.1zM1032 615h1.1v1.1h-1.1zM1066 615h1.1v1.1h-1.1zM1100 615h1.1v1.1h-1.1zM1134 615h1.1v1.1h-1.1zM1168 615h1.1v1.1h-1.1zM1202 615h1.1v1.1h-1.1zM1236 615h1.1v1.1h-1.1zM1270 615h1.1v1.1h-1.1zM1304 615h1.1v1.1h-1.1zM1338 615h1.1v1.1h-1.1zM1372 615h1.1v1.1h-1.1zM1406 615h1.1v1.1h-1.1zM1440 615h1.1v1.1h-1.1zM1474 615h1.1v1.1h-1.1zM1508 615h1.1v1.1h-1.1zM1542 615h1.1v1.1h-1.1zM1576 615h1.1v1.1h-1.1zM1610 615h1.1v1.1h-1.1zM1644 615h1.1v1.1h-1.1zM1678 615h1.1v1.1h-1.1zM46 646h1.1v1.1h-1.1zM80 646h1.1v1.1h-1.1zM114 646h1.1v1.1h-1.1zM148 646h1.1v1.1h-1.1zM182 646h1.1v1.1h-1.1zM216 646h1.1v1.1h-1.1zM250 646h1.1v1.1h-1.1zM284 646h1.1v1.1h-1.1zM318 646h1.1v1.1h-1.1zM352 646h1.1v1.1h-1.1zM386 646h1.1v1.1h-1.1zM420 646h1.1v1.1h-1.1zM454 646h1.1v1.1h-1.1zM488 646h1.1v1.1h-1.1zM522 646h1.1v1.1h-1.1zM556 646h1.1v1.1h-1.1zM590 646h1.1v1.1h-1.1zM624 646h1.1v1.1h-1.1zM658 646h1.1v1.1h-1.1zM692 646h1.1v1.1h-1.1zM726 646h1.1v1.1h-1.1zM760 646h1.1v1.1h-1.1zM794 646h1.1v1.1h-1.1zM828 646h1.1v1.1h-1.1zM862 646h1.1v1.1h-1.1zM896 646h1.1v1.1h-1.1zM930 646h1.1v1.1h-1.1zM964 646h1.1v1.1h-1.1zM998 646h1.1v1.1h-1.1zM1032 646h1.1v1.1h-1.1zM1066 646h1.1v1.1h-1.1zM1100 646h1.1v1.1h-1.1zM1134 646h1.1v1.1h-1.1zM1168 646h1.1v1.1h-1.1zM1202 646h1.1v1.1h-1.1zM1236 646h1.1v1.1h-1.1zM1270 646h1.1v1.1h-1.1zM1304 646h1.1v1.1h-1.1zM1338 646h1.1v1.1h-1.1zM1372 646h1.1v1.1h-1.1zM1406 646h1.1v1.1h-1.1zM1440 646h1.1v1.1h-1.1zM1474 646h1.1v1.1h-1.1zM1508 646h1.1v1.1h-1.1zM1542 646h1.1v1.1h-1.1zM1576 646h1.1v1.1h-1.1zM1610 646h1.1v1.1h-1.1zM1644 646h1.1v1.1h-1.1zM1678 646h1.1v1.1h-1.1zM46 690h1.1v1.1h-1.1zM80 690h1.1v1.1h-1.1zM114 690h1.1v1.1h-1.1zM148 690h1.1v1.1h-1.1zM182 690h1.1v1.1h-1.1zM216 690h1.1v1.1h-1.1zM250 690h1.1v1.1h-1.1zM284 690h1.1v1.1h-1.1zM318 690h1.1v1.1h-1.1zM352 690h1.1v1.1h-1.1zM386 690h1.1v1.1h-1.1zM420 690h1.1v1.1h-1.1zM454 690h1.1v1.1h-1.1zM488 690h1.1v1.1h-1.1zM522 690h1.1v1.1h-1.1zM556 690h1.1v1.1h-1.1zM590 690h1.1v1.1h-1.1zM624 690h1.1v1.1h-1.1zM658 690h1.1v1.1h-1.1zM692 690h1.1v1.1h-1.1zM726 690h1.1v1.1h-1.1zM760 690h1.1v1.1h-1.1zM794 690h1.1v1.1h-1.1zM828 690h1.1v1.1h-1.1zM862 690h1.1v1.1h-1.1zM896 690h1.1v1.1h-1.1zM930 690h1.1v1.1h-1.1zM964 690h1.1v1.1h-1.1zM998 690h1.1v1.1h-1.1zM1032 690h1.1v1.1h-1.1zM1066 690h1.1v1.1h-1.1zM1100 690h1.1v1.1h-1.1zM1134 690h1.1v1.1h-1.1zM1168 690h1.1v1.1h-1.1zM1202 690h1.1v1.1h-1.1zM1236 690h1.1v1.1h-1.1zM1270 690h1.1v1.1h-1.1zM1304 690h1.1v1.1h-1.1zM1338 690h1.1v1.1h-1.1zM1372 690h1.1v1.1h-1.1zM1406 690h1.1v1.1h-1.1zM1440 690h1.1v1.1h-1.1zM1474 690h1.1v1.1h-1.1zM1508 690h1.1v1.1h-1.1zM1542 690h1.1v1.1h-1.1zM1576 690h1.1v1.1h-1.1zM1610 690h1.1v1.1h-1.1zM1644 690h1.1v1.1h-1.1zM1678 690h1.1v1.1h-1.1zM46 720h1.1v1.1h-1.1zM80 720h1.1v1.1h-1.1zM114 720h1.1v1.1h-1.1zM148 720h1.1v1.1h-1.1zM182 720h1.1v1.1h-1.1zM216 720h1.1v1.1h-1.1zM250 720h1.1v1.1h-1.1zM284 720h1.1v1.1h-1.1zM318 720h1.1v1.1h-1.1zM352 720h1.1v1.1h-1.1zM386 720h1.1v1.1h-1.1zM420 720h1.1v1.1h-1.1zM454 720h1.1v1.1h-1.1zM488 720h1.1v1.1h-1.1zM522 720h1.1v1.1h-1.1zM556 720h1.1v1.1h-1.1zM590 720h1.1v1.1h-1.1zM624 720h1.1v1.1h-1.1zM658 720h1.1v1.1h-1.1zM692 720h1.1v1.1h-1.1zM726 720h1.1v1.1h-1.1zM760 720h1.1v1.1h-1.1zM794 720h1.1v1.1h-1.1zM828 720h1.1v1.1h-1.1zM862 720h1.1v1.1h-1.1zM896 720h1.1v1.1h-1.1zM930 720h1.1v1.1h-1.1zM964 720h1.1v1.1h-1.1zM998 720h1.1v1.1h-1.1zM1032 720h1.1v1.1h-1.1zM1066 720h1.1v1.1h-1.1zM1100 720h1.1v1.1h-1.1zM1134 720h1.1v1.1h-1.1zM1168 720h1.1v1.1h-1.1zM1202 720h1.1v1.1h-1.1zM1236 720h1.1v1.1h-1.1zM1270 720h1.1v1.1h-1.1zM1304 720h1.1v1.1h-1.1zM1338 720h1.1v1.1h-1.1zM1372 720h1.1v1.1h-1.1zM1406 720h1.1v1.1h-1.1zM1440 720h1.1v1.1h-1.1zM1474 720h1.1v1.1h-1.1zM1508 720h1.1v1.1h-1.1zM1542 720h1.1v1.1h-1.1zM1576 720h1.1v1.1h-1.1zM1610 720h1.1v1.1h-1.1zM1644 720h1.1v1.1h-1.1zM1678 720h1.1v1.1h-1.1zM46 750h1.1v1.1h-1.1zM80 750h1.1v1.1h-1.1zM114 750h1.1v1.1h-1.1zM148 750h1.1v1.1h-1.1zM182 750h1.1v1.1h-1.1zM216 750h1.1v1.1h-1.1zM250 750h1.1v1.1h-1.1zM284 750h1.1v1.1h-1.1zM318 750h1.1v1.1h-1.1zM352 750h1.1v1.1h-1.1zM386 750h1.1v1.1h-1.1zM420 750h1.1v1.1h-1.1zM454 750h1.1v1.1h-1.1zM488 750h1.1v1.1h-1.1zM522 750h1.1v1.1h-1.1zM556 750h1.1v1.1h-1.1zM590 750h1.1v1.1h-1.1zM624 750h1.1v1.1h-1.1zM658 750h1.1v1.1h-1.1zM692 750h1.1v1.1h-1.1zM726 750h1.1v1.1h-1.1zM760 750h1.1v1.1h-1.1zM794 750h1.1v1.1h-1.1zM828 750h1.1v1.1h-1.1zM862 750h1.1v1.1h-1.1zM896 750h1.1v1.1h-1.1zM930 750h1.1v1.1h-1.1zM964 750h1.1v1.1h-1.1zM998 750h1.1v1.1h-1.1zM1032 750h1.1v1.1h-1.1zM1066 750h1.1v1.1h-1.1zM1100 750h1.1v1.1h-1.1zM1134 750h1.1v1.1h-1.1zM1168 750h1.1v1.1h-1.1zM1202 750h1.1v1.1h-1.1zM1236 750h1.1v1.1h-1.1zM1270 750h1.1v1.1h-1.1zM1304 750h1.1v1.1h-1.1zM1338 750h1.1v1.1h-1.1zM1372 750h1.1v1.1h-1.1zM1406 750h1.1v1.1h-1.1zM1440 750h1.1v1.1h-1.1zM1474 750h1.1v1.1h-1.1zM1508 750h1.1v1.1h-1.1zM1542 750h1.1v1.1h-1.1zM1576 750h1.1v1.1h-1.1zM1610 750h1.1v1.1h-1.1zM1644 750h1.1v1.1h-1.1zM1678 750h1.1v1.1h-1.1zM46 781h1.1v1.1h-1.1zM80 781h1.1v1.1h-1.1zM114 781h1.1v1.1h-1.1zM148 781h1.1v1.1h-1.1zM182 781h1.1v1.1h-1.1zM216 781h1.1v1.1h-1.1zM250 781h1.1v1.1h-1.1zM284 781h1.1v1.1h-1.1zM318 781h1.1v1.1h-1.1zM352 781h1.1v1.1h-1.1zM386 781h1.1v1.1h-1.1zM420 781h1.1v1.1h-1.1zM454 781h1.1v1.1h-1.1zM488 781h1.1v1.1h-1.1zM522 781h1.1v1.1h-1.1zM556 781h1.1v1.1h-1.1zM590 781h1.1v1.1h-1.1zM624 781h1.1v1.1h-1.1zM658 781h1.1v1.1h-1.1zM692 781h1.1v1.1h-1.1zM726 781h1.1v1.1h-1.1zM760 781h1.1v1.1h-1.1zM794 781h1.1v1.1h-1.1zM828 781h1.1v1.1h-1.1zM862 781h1.1v1.1h-1.1zM896 781h1.1v1.1h-1.1zM930 781h1.1v1.1h-1.1zM964 781h1.1v1.1h-1.1zM998 781h1.1v1.1h-1.1zM1032 781h1.1v1.1h-1.1zM1066 781h1.1v1.1h-1.1zM1100 781h1.1v1.1h-1.1zM1134 781h1.1v1.1h-1.1zM1168 781h1.1v1.1h-1.1zM1202 781h1.1v1.1h-1.1zM1236 781h1.1v1.1h-1.1zM1270 781h1.1v1.1h-1.1zM1304 781h1.1v1.1h-1.1zM1338 781h1.1v1.1h-1.1zM1372 781h1.1v1.1h-1.1zM1406 781h1.1v1.1h-1.1zM1440 781h1.1v1.1h-1.1zM1474 781h1.1v1.1h-1.1zM1508 781h1.1v1.1h-1.1zM1542 781h1.1v1.1h-1.1zM1576 781h1.1v1.1h-1.1zM1610 781h1.1v1.1h-1.1zM1644 781h1.1v1.1h-1.1zM1678 781h1.1v1.1h-1.1zM46 811h1.1v1.1h-1.1zM80 811h1.1v1.1h-1.1zM114 811h1.1v1.1h-1.1zM148 811h1.1v1.1h-1.1zM182 811h1.1v1.1h-1.1zM216 811h1.1v1.1h-1.1zM250 811h1.1v1.1h-1.1zM284 811h1.1v1.1h-1.1zM318 811h1.1v1.1h-1.1zM352 811h1.1v1.1h-1.1zM386 811h1.1v1.1h-1.1zM420 811h1.1v1.1h-1.1zM454 811h1.1v1.1h-1.1zM488 811h1.1v1.1h-1.1zM522 811h1.1v1.1h-1.1zM556 811h1.1v1.1h-1.1zM590 811h1.1v1.1h-1.1zM624 811h1.1v1.1h-1.1zM658 811h1.1v1.1h-1.1zM692 811h1.1v1.1h-1.1zM726 811h1.1v1.1h-1.1zM760 811h1.1v1.1h-1.1zM794 811h1.1v1.1h-1.1zM828 811h1.1v1.1h-1.1zM862 811h1.1v1.1h-1.1zM896 811h1.1v1.1h-1.1zM930 811h1.1v1.1h-1.1zM964 811h1.1v1.1h-1.1zM998 811h1.1v1.1h-1.1zM1032 811h1.1v1.1h-1.1zM1066 811h1.1v1.1h-1.1zM1100 811h1.1v1.1h-1.1zM1134 811h1.1v1.1h-1.1zM1168 811h1.1v1.1h-1.1zM1202 811h1.1v1.1h-1.1zM1236 811h1.1v1.1h-1.1zM1270 811h1.1v1.1h-1.1zM1304 811h1.1v1.1h-1.1zM1338 811h1.1v1.1h-1.1zM1372 811h1.1v1.1h-1.1zM1406 811h1.1v1.1h-1.1zM1440 811h1.1v1.1h-1.1zM1474 811h1.1v1.1h-1.1zM1508 811h1.1v1.1h-1.1zM1542 811h1.1v1.1h-1.1zM1576 811h1.1v1.1h-1.1zM1610 811h1.1v1.1h-1.1zM1644 811h1.1v1.1h-1.1zM1678 811h1.1v1.1h-1.1zM46 841h1.1v1.1h-1.1zM80 841h1.1v1.1h-1.1zM114 841h1.1v1.1h-1.1zM148 841h1.1v1.1h-1.1zM182 841h1.1v1.1h-1.1zM216 841h1.1v1.1h-1.1zM250 841h1.1v1.1h-1.1zM284 841h1.1v1.1h-1.1zM318 841h1.1v1.1h-1.1zM352 841h1.1v1.1h-1.1zM386 841h1.1v1.1h-1.1zM420 841h1.1v1.1h-1.1zM454 841h1.1v1.1h-1.1zM488 841h1.1v1.1h-1.1zM522 841h1.1v1.1h-1.1zM556 841h1.1v1.1h-1.1zM590 841h1.1v1.1h-1.1zM624 841h1.1v1.1h-1.1zM658 841h1.1v1.1h-1.1zM692 841h1.1v1.1h-1.1zM726 841h1.1v1.1h-1.1zM760 841h1.1v1.1h-1.1zM794 841h1.1v1.1h-1.1zM828 841h1.1v1.1h-1.1zM862 841h1.1v1.1h-1.1zM896 841h1.1v1.1h-1.1zM930 841h1.1v1.1h-1.1zM964 841h1.1v1.1h-1.1zM998 841h1.1v1.1h-1.1zM1032 841h1.1v1.1h-1.1zM1066 841h1.1v1.1h-1.1zM1100 841h1.1v1.1h-1.1zM1134 841h1.1v1.1h-1.1zM1168 841h1.1v1.1h-1.1zM1202 841h1.1v1.1h-1.1zM1236 841h1.1v1.1h-1.1zM1270 841h1.1v1.1h-1.1zM1304 841h1.1v1.1h-1.1zM1338 841h1.1v1.1h-1.1zM1372 841h1.1v1.1h-1.1zM1406 841h1.1v1.1h-1.1zM1440 841h1.1v1.1h-1.1zM1474 841h1.1v1.1h-1.1zM1508 841h1.1v1.1h-1.1zM1542 841h1.1v1.1h-1.1zM1576 841h1.1v1.1h-1.1zM1610 841h1.1v1.1h-1.1zM1644 841h1.1v1.1h-1.1zM1678 841h1.1v1.1h-1.1zM46 872h1.1v1.1h-1.1zM80 872h1.1v1.1h-1.1zM114 872h1.1v1.1h-1.1zM148 872h1.1v1.1h-1.1zM182 872h1.1v1.1h-1.1zM216 872h1.1v1.1h-1.1zM250 872h1.1v1.1h-1.1zM284 872h1.1v1.1h-1.1zM318 872h1.1v1.1h-1.1zM352 872h1.1v1.1h-1.1zM386 872h1.1v1.1h-1.1zM420 872h1.1v1.1h-1.1zM454 872h1.1v1.1h-1.1zM488 872h1.1v1.1h-1.1zM522 872h1.1v1.1h-1.1zM556 872h1.1v1.1h-1.1zM590 872h1.1v1.1h-1.1zM624 872h1.1v1.1h-1.1zM658 872h1.1v1.1h-1.1zM692 872h1.1v1.1h-1.1zM726 872h1.1v1.1h-1.1zM760 872h1.1v1.1h-1.1zM794 872h1.1v1.1h-1.1zM828 872h1.1v1.1h-1.1zM862 872h1.1v1.1h-1.1zM896 872h1.1v1.1h-1.1zM930 872h1.1v1.1h-1.1zM964 872h1.1v1.1h-1.1zM998 872h1.1v1.1h-1.1zM1032 872h1.1v1.1h-1.1zM1066 872h1.1v1.1h-1.1zM1100 872h1.1v1.1h-1.1zM1134 872h1.1v1.1h-1.1zM1168 872h1.1v1.1h-1.1zM1202 872h1.1v1.1h-1.1zM1236 872h1.1v1.1h-1.1zM1270 872h1.1v1.1h-1.1zM1304 872h1.1v1.1h-1.1zM1338 872h1.1v1.1h-1.1zM1372 872h1.1v1.1h-1.1zM1406 872h1.1v1.1h-1.1zM1440 872h1.1v1.1h-1.1zM1474 872h1.1v1.1h-1.1zM1508 872h1.1v1.1h-1.1zM1542 872h1.1v1.1h-1.1zM1576 872h1.1v1.1h-1.1zM1610 872h1.1v1.1h-1.1zM1644 872h1.1v1.1h-1.1zM1678 872h1.1v1.1h-1.1zM46 902h1.1v1.1h-1.1zM80 902h1.1v1.1h-1.1zM114 902h1.1v1.1h-1.1zM148 902h1.1v1.1h-1.1zM182 902h1.1v1.1h-1.1zM216 902h1.1v1.1h-1.1zM250 902h1.1v1.1h-1.1zM284 902h1.1v1.1h-1.1zM318 902h1.1v1.1h-1.1zM352 902h1.1v1.1h-1.1zM386 902h1.1v1.1h-1.1zM420 902h1.1v1.1h-1.1zM454 902h1.1v1.1h-1.1zM488 902h1.1v1.1h-1.1zM522 902h1.1v1.1h-1.1zM556 902h1.1v1.1h-1.1zM590 902h1.1v1.1h-1.1zM624 902h1.1v1.1h-1.1zM658 902h1.1v1.1h-1.1zM692 902h1.1v1.1h-1.1zM726 902h1.1v1.1h-1.1zM760 902h1.1v1.1h-1.1zM794 902h1.1v1.1h-1.1zM828 902h1.1v1.1h-1.1zM862 902h1.1v1.1h-1.1zM896 902h1.1v1.1h-1.1zM930 902h1.1v1.1h-1.1zM964 902h1.1v1.1h-1.1zM998 902h1.1v1.1h-1.1zM1032 902h1.1v1.1h-1.1zM1066 902h1.1v1.1h-1.1zM1100 902h1.1v1.1h-1.1zM1134 902h1.1v1.1h-1.1zM1168 902h1.1v1.1h-1.1zM1202 902h1.1v1.1h-1.1zM1236 902h1.1v1.1h-1.1zM1270 902h1.1v1.1h-1.1zM1304 902h1.1v1.1h-1.1zM1338 902h1.1v1.1h-1.1zM1372 902h1.1v1.1h-1.1zM1406 902h1.1v1.1h-1.1zM1440 902h1.1v1.1h-1.1zM1474 902h1.1v1.1h-1.1zM1508 902h1.1v1.1h-1.1zM1542 902h1.1v1.1h-1.1zM1576 902h1.1v1.1h-1.1zM1610 902h1.1v1.1h-1.1zM1644 902h1.1v1.1h-1.1zM1678 902h1.1v1.1h-1.1zM46 932h1.1v1.1h-1.1zM80 932h1.1v1.1h-1.1zM114 932h1.1v1.1h-1.1zM148 932h1.1v1.1h-1.1zM182 932h1.1v1.1h-1.1zM216 932h1.1v1.1h-1.1zM250 932h1.1v1.1h-1.1zM284 932h1.1v1.1h-1.1zM318 932h1.1v1.1h-1.1zM352 932h1.1v1.1h-1.1zM386 932h1.1v1.1h-1.1zM420 932h1.1v1.1h-1.1zM454 932h1.1v1.1h-1.1zM488 932h1.1v1.1h-1.1zM522 932h1.1v1.1h-1.1zM556 932h1.1v1.1h-1.1zM590 932h1.1v1.1h-1.1zM624 932h1.1v1.1h-1.1zM658 932h1.1v1.1h-1.1zM692 932h1.1v1.1h-1.1zM726 932h1.1v1.1h-1.1zM760 932h1.1v1.1h-1.1zM794 932h1.1v1.1h-1.1zM828 932h1.1v1.1h-1.1zM862 932h1.1v1.1h-1.1zM896 932h1.1v1.1h-1.1zM930 932h1.1v1.1h-1.1zM964 932h1.1v1.1h-1.1zM998 932h1.1v1.1h-1.1zM1032 932h1.1v1.1h-1.1zM1066 932h1.1v1.1h-1.1zM1100 932h1.1v1.1h-1.1zM1134 932h1.1v1.1h-1.1zM1168 932h1.1v1.1h-1.1zM1202 932h1.1v1.1h-1.1zM1236 932h1.1v1.1h-1.1zM1270 932h1.1v1.1h-1.1zM1304 932h1.1v1.1h-1.1zM1338 932h1.1v1.1h-1.1zM1372 932h1.1v1.1h-1.1zM1406 932h1.1v1.1h-1.1zM1440 932h1.1v1.1h-1.1zM1474 932h1.1v1.1h-1.1zM1508 932h1.1v1.1h-1.1zM1542 932h1.1v1.1h-1.1zM1576 932h1.1v1.1h-1.1zM1610 932h1.1v1.1h-1.1zM1644 932h1.1v1.1h-1.1zM1678 932h1.1v1.1h-1.1zM46 963h1.1v1.1h-1.1zM80 963h1.1v1.1h-1.1zM114 963h1.1v1.1h-1.1zM148 963h1.1v1.1h-1.1zM182 963h1.1v1.1h-1.1zM216 963h1.1v1.1h-1.1zM250 963h1.1v1.1h-1.1zM284 963h1.1v1.1h-1.1zM318 963h1.1v1.1h-1.1zM352 963h1.1v1.1h-1.1zM386 963h1.1v1.1h-1.1zM420 963h1.1v1.1h-1.1zM454 963h1.1v1.1h-1.1zM488 963h1.1v1.1h-1.1zM522 963h1.1v1.1h-1.1zM556 963h1.1v1.1h-1.1zM590 963h1.1v1.1h-1.1zM624 963h1.1v1.1h-1.1zM658 963h1.1v1.1h-1.1zM692 963h1.1v1.1h-1.1zM726 963h1.1v1.1h-1.1zM760 963h1.1v1.1h-1.1zM794 963h1.1v1.1h-1.1zM828 963h1.1v1.1h-1.1zM862 963h1.1v1.1h-1.1zM896 963h1.1v1.1h-1.1zM930 963h1.1v1.1h-1.1zM964 963h1.1v1.1h-1.1zM998 963h1.1v1.1h-1.1zM1032 963h1.1v1.1h-1.1zM1066 963h1.1v1.1h-1.1zM1100 963h1.1v1.1h-1.1zM1134 963h1.1v1.1h-1.1zM1168 963h1.1v1.1h-1.1zM1202 963h1.1v1.1h-1.1zM1236 963h1.1v1.1h-1.1zM1270 963h1.1v1.1h-1.1zM1304 963h1.1v1.1h-1.1zM1338 963h1.1v1.1h-1.1zM1372 963h1.1v1.1h-1.1zM1406 963h1.1v1.1h-1.1zM1440 963h1.1v1.1h-1.1zM1474 963h1.1v1.1h-1.1zM1508 963h1.1v1.1h-1.1zM1542 963h1.1v1.1h-1.1zM1576 963h1.1v1.1h-1.1zM1610 963h1.1v1.1h-1.1zM1644 963h1.1v1.1h-1.1zM1678 963h1.1v1.1h-1.1z"/>
<path fill="#dcdcdc" d="M182 71h1.1v1.1h-1.1zM182 77h1.1v1.1h-1.1zM182 83h1.1v1.1h-1.1zM182 89h1.1v1.1h-1.1zM182 95h1.1v1.1h-1.1zM182 101h1.1v1.1h-1.1zM182 107h1.1v1.1h-1.1zM182 113h1.1v1.1h-1.1zM182 119h1.1v1.1h-1.1zM182 125h1.1v1.1h-1.1zM182 131h1.1v1.1h-1.1zM182 137h1.1v1.1h-1.1zM182 144h1.1v1.1h-1.1zM182 150h1.1v1.1h-1.1zM182 156h1.1v1.1h-1.1zM182 162h1.1v1.1h-1.1zM182 168h1.1v1.1h-1.1zM182 174h1.1v1.1h-1.1zM182 180h1.1v1.1h-1.1zM182 186h1.1v1.1h-1.1zM182 192h1.1v1.1h-1.1zM182 198h1.1v1.1h-1.1zM182 204h1.1v1.1h-1.1zM182 210h1.1v1.1h-1.1zM182 216h1.1v1.1h-1.1zM182 222h1.1v1.1h-1.1zM182 228h1.1v1.1h-1.1zM182 235h1.1v1.1h-1.1zM182 241h1.1v1.1h-1.1zM182 247h1.1v1.1h-1.1zM182 253h1.1v1.1h-1.1zM182 259h1.1v1.1h-1.1zM182 265h1.1v1.1h-1.1zM182 271h1.1v1.1h-1.1zM182 277h1.1v1.1h-1.1zM182 283h1.1v1.1h-1.1zM182 289h1.1v1.1h-1.1zM182 295h1.1v1.1h-1.1zM182 301h1.1v1.1h-1.1zM182 307h1.1v1.1h-1.1zM182 313h1.1v1.1h-1.1zM182 319h1.1v1.1h-1.1zM182 326h1.1v1.1h-1.1zM182 332h1.1v1.1h-1.1zM182 338h1.1v1.1h-1.1zM182 344h1.1v1.1h-1.1zM182 350h1.1v1.1h-1.1zM182 356h1.1v1.1h-1.1zM182 362h1.1v1.1h-1.1zM182 368h1.1v1.1h-1.1zM182 373h1.1v1.1h-1.1zM182 379h1.1v1.1h-1.1zM182 385h1.1v1.1h-1.1zM182 391h1.1v1.1h-1.1zM182 397h1.1v1.1h-1.1zM182 403h1.1v1.1h-1.1zM182 409h1.1v1.1h-1.1zM182 415h1.1v1.1h-1.1zM182 421h1.1v1.1h-1.1zM182 427h1.1v1.1h-1.1zM182 433h1.1v1.1h-1.1zM182 440h1.1v1.1h-1.1zM182 446h1.1v1.1h-1.1zM182 452h1.1v1.1h-1.1zM182 458h1.1v1.1h-1.1zM182 464h1.1v1.1h-1.1zM182 470h1.1v1.1h-1.1zM182 476h1.1v1.1h-1.1zM182 482h1.1v1.1h-1.1zM182 488h1.1v1.1h-1.1zM182 494h1.1v1.1h-1.1zM182 500h1.1v1.1h-1.1zM182 506h1.1v1.1h-1.1zM182 512h1.1v1.1h-1.1zM182 518h1.1v1.1h-1.1zM182 524h1.1v1.1h-1.1zM182 531h1.1v1.1h-1.1zM182 537h1.1v1.1h-1.1zM182 543h1.1v1.1h-1.1zM182 549h1.1v1.1h-1.1zM182 555h1.1v1.1h-1.1zM182 561h1.1v1.1h-1.1zM182 567h1.1v1.1h-1.1zM182 573h1.1v1.1h-1.1zM182 579h1.1v1.1h-1.1zM182 585h1.1v1.1h-1.1zM182 591h1.1v1.1h-1.1zM182 597h1.1v1.1h-1.1zM182 603h1.1v1.1h-1.1zM182 609h1.1v1.1h-1.1zM182 615h1.1v1.1h-1.1zM182 622h1.1v1.1h-1.1zM182 628h1.1v1.1h-1.1zM182 634h1.1v1.1h-1.1zM182 640h1.1v1.1h-1.1zM182 646h1.1v1.1h-1.1zM182 652h1.1v1.1h-1.1zM182 658h1.1v1.1h-1.1zM182 664h1.1v1.1h-1.1zM182 670h1.1v1.1h-1.1zM182 684h1.1v1.1h-1.1zM182 690h1.1v1.1h-1.1zM182 696h1.1v1.1h-1.1zM182 702h1.1v1.1h-1.1zM182 708h1.1v1.1h-1.1zM182 714h1.1v1.1h-1.1zM182 720h1.1v1.1h-1.1zM182 726h1.1v1.1h-1.1zM182 732h1.1v1.1h-1.1zM182 738h1.1v1.1h-1.1zM182 744h1.1v1.1h-1.1zM182 750h1.1v1.1h-1.1zM182 756h1.1v1.1h-1.1zM182 762h1.1v1.1h-1.1zM182 769h1.1v1.1h-1.1zM182 775h1.1v1.1h-1.1zM182 781h1.1v1.1h-1.1zM182 787h1.1v1.1h-1.1zM182 793h1.1v1.1h-1.1zM182 799h1.1v1.1h-1.1zM182 805h1.1v1.1h-1.1zM182 811h1.1v1.1h-1.1zM182 817h1.1v1.1h-1.1zM182 823h1.1v1.1h-1.1zM182 829h1.1v1.1h-1.1zM182 835h1.1v1.1h-1.1zM182 841h1.1v1.1h-1.1zM182 847h1.1v1.1h-1.1zM182 853h1.1v1.1h-1.1zM182 860h1.1v1.1h-1.1zM182 866h1.1v1.1h-1.1zM182 872h1.1v1.1h-1.1zM182 878h1.1v1.1h-1.1zM182 884h1.1v1.1h-1.1zM182 890h1.1v1.1h-1.1zM182 896h1.1v1.1h-1.1zM182 902h1.1v1.1h-1.1zM182 908h1.1v1.1h-1.1zM182 914h1.1v1.1h-1.1zM182 920h1.1v1.1h-1.1zM182 926h1.1v1.1h-1.1zM182 932h1.1v1.1h-1.1zM182 938h1.1v1.1h-1.1zM182 944h1.1v1.1h-1.1zM182 951h1.1v1.1h-1.1zM182 957h1.1v1.1h-1.1zM182 963h1.1v1.1h-1.1zM182 969h1.1v1.1h-1.1zM182 975h1.1v1.1h-1.1zM352 71h1.1v1.1h-1.1zM352 77h1.1v1.1h-1.1zM352 83h1.1v1.1h-1.1zM352 89h1.1v1.1h-1.1zM352 95h1.1v1.1h-1.1zM352 101h1.1v1.1h-1.1zM352 107h1.1v1.1h-1.1zM352 113h1.1v1.1h-1.1zM352 119h1.1v1.1h-1.1zM352 125h1.1v1.1h-1.1zM352 131h1.1v1.1h-1.1zM352 137h1.1v1.1h-1.1zM352 144h1.1v1.1h-1.1zM352 150h1.1v1.1h-1.1zM352 156h1.1v1.1h-1.1zM352 162h1.1v1.1h-1.1zM352 168h1.1v1.1h-1.1zM352 174h1.1v1.1h-1.1zM352 180h1.1v1.1h-1.1zM352 186h1.1v1.1h-1.1zM352 192h1.1v1.1h-1.1zM352 198h1.1v1.1h-1.1zM352 204h1.1v1.1h-1.1zM352 210h1.1v1.1h-1.1zM352 216h1.1v1.1h-1.1zM352 222h1.1v1.1h-1.1zM352 228h1.1v1.1h-1.1zM352 235h1.1v1.1h-1.1zM352 241h1.1v1.1h-1.1zM352 247h1.1v1.1h-1.1zM352 253h1.1v1.1h-1.1zM352 259h1.1v1.1h-1.1zM352 265h1.1v1.1h-1.1zM352 271h1.1v1.1h-1.1zM352 277h1.1v1.1h-1.1zM352 283h1.1v1.1h-1.1zM352 289h1.1v1.1h-1.1zM352 295h1.1v1.1h-1.1zM352 301h1.1v1.1h-1.1zM352 307h1.1v1.1h-1.1zM352 313h1.1v1.1h-1.1zM352 319h1.1v1.1h-1.1zM352 326h1.1v1.1h-1.1zM352 332h1.1v1.1h-1.1zM352 338h1.1v1.1h-1.1zM352 344h1.1v1.1h-1.1zM352 350h1.1v1.1h-1.1zM352 356h1.1v1.1h-1.1zM352 362h1.1v1.1h-1.1zM352 368h1.1v1.1h-1.1zM352 373h1.1v1.1h-1.1zM352 379h1.1v1.1h-1.1zM352 385h1.1v1.1h-1.1zM352 391h1.1v1.1h-1.1zM352 397h1.1v1.1h-1.1zM352 403h1.1v1.1h-1.1zM352 409h1.1v1.1h-1.1zM352 415h1.1v1.1h-1.1zM352 421h1.1v1.1h-1.1zM352 427h1.1v1.1h-1.1zM352 433h1.1v1.1h-1.1zM352 440h1.1v1.1h-1.1zM352 446h1.1v1.1h-1.1zM352 452h1.1v1.1h-1.1zM352 458h1.1v1.1h-1.1zM352 464h1.1v1.1h-1.1zM352 470h1.1v1.1h-1.1zM352 476h1.1v1.1h-1.1zM352 482h1.1v1.1h-1.1zM352 488h1.1v1.1h-1.1zM352 494h1.1v1.1h-1.1zM352 500h1.1v1.1h-1.1zM352 506h1.1v1.1h-1.1zM352 512h1.1v1.1h-1.1zM352 518h1.1v1.1h-1.1zM352 524h1.1v1.1h-1.1zM352 531h1.1v1.1h-1.1zM352 537h1.1v1.1h-1.1zM352 543h1.1v1.1h-1.1zM352 549h1.1v1.1h-1.1zM352 555h1.1v1.1h-1.1zM352 561h1.1v1.1h-1.1zM352 567h1.1v1.1h-1.1zM352 573h1.1v1.1h-1.1zM352 579h1.1v1.1h-1.1zM352 585h1.1v1.1h-1.1zM352 591h1.1v1.1h-1.1zM352 597h1.1v1.1h-1.1zM352 603h1.1v1.1h-1.1zM352 609h1.1v1.1h-1.1zM352 615h1.1v1.1h-1.1zM352 622h1.1v1.1h-1.1zM352 628h1.1v1.1h-1.1zM352 634h1.1v1.1h-1.1zM352 640h1.1v1.1h-1.1zM352 646h1.1v1.1h-1.1zM352 652h1.1v1.1h-1.1zM352 658h1.1v1.1h-1.1zM352 664h1.1v1.1h-1.1zM352 670h1.1v1.1h-1.1zM352 684h1.1v1.1h-1.1zM352 690h1.1v1.1h-1.1zM352 696h1.1v1.1h-1.1zM352 702h1.1v1.1h-1.1zM352 708h1.1v1.1h-1.1zM352 714h1.1v1.1h-1.1zM352 720h1.1v1.1h-1.1zM352 726h1.1v1.1h-1.1zM352 732h1.1v1.1h-1.1zM352 738h1.1v1.1h-1.1zM352 744h1.1v1.1h-1.1zM352 750h1.1v1.1h-1.1zM352 756h1.1v1.1h-1.1zM352 762h1.1v1.1h-1.1zM352 769h1.1v1.1h-1.1zM352 775h1.1v1.1h-1.1zM352 781h1.1v1.1h-1.1zM352 787h1.1v1.1h-1.1zM352 793h1.1v1.1h-1.1zM352 799h1.1v1.1h-1.1zM352 805h1.1v1.1h-1.1zM352 811h1.1v1.1h-1.1zM352 817h1.1v1.1h-1.1zM352 823h1.1v1.1h-1.1zM352 829h1.1v1.1h-1.1zM352 835h1.1v1.1h-1.1zM352 841h1.1v1.1h-1.1zM352 847h1.1v1.1h-1.1zM352 853h1.1v1.1h-1.1zM352 860h1.1v1.1h-1.1zM352 866h1.1v1.1h-1.1zM352 872h1.1v1.1h-1.1zM352 878h1.1v1.1h-1.1zM352 884h1.1v1.1h-1.1zM352 890h1.1v1.1h-1.1zM352 896h1.1v1.1h-1.1zM352 902h1.1v1.1h-1.1zM352 908h1.1v1.1h-1.1zM352 914h1.1v1.1h-1.1zM352 920h1.1v1.1h-1.1zM352 926h1.1v1.1h-1.1zM352 932h1.1v1.1h-1.1zM352 938h1.1v1.1h-1.1zM352 944h1.1v1.1h-1.1zM352 951h1.1v1.1h-1.1zM352 957h1.1v1.1h-1.1zM352 963h1.1v1.1h-1.1zM352 969h1.1v1.1h-1.1zM352 975h1.1v1.1h-1.1zM522 71h1.1v1.1h-1.1zM522 77h1.1v1.1h-1.1zM522 83h1.1v1.1h-1.1zM522 89h1.1v1.1h-1.1zM522 95h1.1v1.1h-1.1zM522 101h1.1v1.1h-1.1zM522 107h1.1v1.1h-1.1zM522 113h1.1v1.1h-1.1zM522 119h1.1v1.1h-1.1zM522 125h1.1v1.1h-1.1zM522 131h1.1v1.1h-1.1zM522 137h1.1v1.1h-1.1zM522 144h1.1v1.1h-1.1zM522 150h1.1v1.1h-1.1zM522 156h1.1v1.1h-1.1zM522 162h1.1v1.1h-1.1zM522 168h1.1v1.1h-1.1zM522 174h1.1v1.1h-1.1zM522 180h1.1v1.1h-1.1zM522 186h1.1v1.1h-1.1zM522 192h1.1v1.1h-1.1zM522 198h1.1v1.1h-1.1zM522 204h1.1v1.1h-1.1zM522 210h1.1v1.1h-1.1zM522 216h1.1v1.1h-1.1zM522 222h1.1v1.1h-1.1zM522 228h1.1v1.1h-1.1zM522 235h1.1v1.1h-1.1zM522 241h1.1v1.1h-1.1zM522 247h1.1v1.1h-1.1zM522 253h1.1v1.1h-1.1zM522 259h1.1v1.1h-1.1zM522 265h1.1v1.1h-1.1zM522 271h1.1v1.1h-1.1zM522 277h1.1v1.1h-1.1zM522 283h1.1v1.1h-1.1zM522 289h1.1v1.1h-1.1zM522 295h1.1v1.1h-1.1zM522 301h1.1v1.1h-1.1zM522 307h1.1v1.1h-1.1zM522 313h1.1v1.1h-1.1zM522 319h1.1v1.1h-1.1zM522 326h1.1v1.1h-1.1zM522 332h1.1v1.1h-1.1zM522 338h1.1v1.1h-1.1zM522 344h1.1v1.1h-1.1zM522 350h1.1v1.1h-1.1zM522 356h1.1v1.1h-1.1zM522 362h1.1v1.1h-1.1zM522 368h1.1v1.1h-1.1zM522 373h1.1v1.1h-1.1zM522 379h1.1v1.1h-1.1zM522 385h1.1v1.1h-1.1zM522 391h1.1v1.1h-1.1zM522 397h1.1v1.1h-1.1zM522 403h1.1v1.1h-1.1zM522 409h1.1v1.1h-1.1zM522 415h1.1v1.1h-1.1zM522 421h1.1v1.1h-1.1zM522 427h1.1v1.1h-1.1zM522 433h1.1v1.1h-1.1zM522 440h1.1v1.1h-1.1zM522 446h1.1v1.1h-1.1zM522 452h1.1v1.1h-1.1zM522 458h1.1v1.1h-1.1zM522 464h1.1v1.1h-1.1zM522 470h1.1v1.1h-1.1zM522 476h1.1v1.1h-1.1zM522 482h1.1v1.1h-1.1zM522 488h1.1v1.1h-1.1zM522 494h1.1v1.1h-1.1zM522 500h1.1v1.1h-1.1zM522 506h1.1v1.1h-1.1zM522 512h1.1v1.1h-1.1zM522 518h1.1v1.1h-1.1zM522 524h1.1v1.1h-1.1zM522 531h1.1v1.1h-1.1zM522 537h1.1v1.1h-1.1zM522 543h1.1v1.1h-1.1zM522 549h1.1v1.1h-1.1zM522 555h1.1v1.1h-1.1zM522 561h1.1v1.1h-1.1zM522 567h1.1v1.1h-1.1zM522 573h1.1v1.1h-1.1zM522 579h1.1v1.1h-1.1zM522 585h1.1v1.1h-1.1zM522 591h1.1v1.1h-1.1zM522 597h1.1v1.1h-1.1zM522 603h1.1v1.1h-1.1zM522 609h1.1v1.1h-1.1zM522 615h1.1v1.1h-1.1zM522 622h1.1v1.1h-1.1zM522 628h1.1v1.1h-1.1zM522 634h1.1v1.1h-1.1zM522 640h1.1v1.1h-1.1zM522 646h1.1v1.1h-1.1zM522 652h1.1v1.1h-1.1zM522 658h1.1v1.1h-1.1zM522 664h1.1v1.1h-1.1zM522 670h1.1v1.1h-1.1zM522 684h1.1v1.1h-1.1zM522 690h1.1v1.1h-1.1zM522 696h1.1v1.1h-1.1zM522 702h1.1v1.1h-1.1zM522 708h1.1v1.1h-1.1zM522 714h1.1v1.1h-1.1zM522 720h1.1v1.1h-1.1zM522 726h1.1v1.1h-1.1zM522 732h1.1v1.1h-1.1zM522 738h1.1v1.1h-1.1zM522 744h1.1v1.1h-1.1zM522 750h1.1v1.1h-1.1zM522 756h1.1v1.1h-1.1zM522 762h1.1v1.1h-1.1zM522 769h1.1v1.1h-1.1zM522 775h1.1v1.1h-1.1zM522 781h1.1v1.1h-1.1zM522 787h1.1v1.1h-1.1zM522 793h1.1v1.1h-1.1zM522 799h1.1v1.1h-1.1zM522 805h1.1v1.1h-1.1zM522 811h1.1v1.1h-1.1zM522 817h1.1v1.1h-1.1zM522 823h1.1v1.1h-1.1zM522 829h1.1v1.1h-1.1zM522 835h1.1v1.1h-1.1zM522 841h1.1v1.1h-1.1zM522 847h1.1v1.1h-1.1zM522 853h1.1v1.1h-1.1zM522 860h1.1v1.1h-1.1zM522 866h1.1v1.1h-1.1zM522 872h1.1v1.1h-1.1zM522 878h1.1v1.1h-1.1zM522 884h1.1v1.1h-1.1zM522 890h1.1v1.1h-1.1zM522 896h1.1v1.1h-1.1zM522 902h1.1v1.1h-1.1zM522 908h1.1v1.1h-1.1zM522 914h1.1v1.1h-1.1zM522 920h1.1v1.1h-1.1zM522 926h1.1v1.1h-1.1zM522 932h1.1v1.1h-1.1zM522 938h1.1v1.1h-1.1zM522 944h1.1v1.1h-1.1zM522 951h1.1v1.1h-1.1zM522 957h1.1v1.1h-1.1zM522 963h1.1v1.1h-1.1zM522 969h1.1v1.1h-1.1zM522 975h1.1v1.1h-1.1zM692 71h1.1v1.1h-1.1zM692 77h1.1v1.1h-1.1zM692 83h1.1v1.1h-1.1zM692 89h1.1v1.1h-1.1zM692 95h1.1v1.1h-1.1zM692 101h1.1v1.1h-1.1zM692 107h1.1v1.1h-1.1zM692 113h1.1v1.1h-1.1zM692 119h1.1v1.1h-1.1zM692 125h1.1v1.1h-1.1zM692 131h1.1v1.1h-1.1zM692 137h1.1v1.1h-1.1zM692 144h1.1v1.1h-1.1zM692 150h1.1v1.1h-1.1zM692 156h1.1v1.1h-1.1zM692 162h1.1v1.1h-1.1zM692 168h1.1v1.1h-1.1zM692 174h1.1v1.1h-1.1zM692 180h1.1v1.1h-1.1zM692 186h1.1v1.1h-1.1zM692 192h1.1v1.1h-1.1zM692 198h1.1v1.1h-1.1zM692 204h1.1v1.1h-1.1zM692 210h1.1v1.1h-1.1zM692 216h1.1v1.1h-1.1zM692 222h1.1v1.1h-1.1zM692 228h1.1v1.1h-1.1zM692 235h1.1v1.1h-1.1zM692 241h1.1v1.1h-1.1zM692 247h1.1v1.1h-1.1zM692 253h1.1v1.1h-1.1zM692 259h1.1v1.1h-1.1zM692 265h1.1v1.1h-1.1zM692 271h1.1v1.1h-1.1zM692 277h1.1v1.1h-1.1zM692 283h1.1v1.1h-1.1zM692 289h1.1v1.1h-1.1zM692 295h1.1v1.1h-1.1zM692 301h1.1v1.1h-1.1zM692 307h1.1v1.1h-1.1zM692 313h1.1v1.1h-1.1zM692 319h1.1v1.1h-1.1zM692 326h1.1v1.1h-1.1zM692 332h1.1v1.1h-1.1zM692 338h1.1v1.1h-1.1zM692 344h1.1v1.1h-1.1zM692 350h1.1v1.1h-1.1zM692 356h1.1v1.1h-1.1zM692 362h1.1v1.1h-1.1zM692 368h1.1v1.1h-1.1zM692 373h1.1v1.1h-1.1zM692 379h1.1v1.1h-1.1zM692 385h1.1v1.1h-1.1zM692 391h1.1v1.1h-1.1zM692 397h1.1v1.1h-1.1zM692 403h1.1v1.1h-1.1zM692 409h1.1v1.1h-1.1zM692 415h1.1v1.1h-1.1zM692 421h1.1v1.1h-1.1zM692 427h1.1v1.1h-1.1zM692 433h1.1v1.1h-1.1zM692 440h1.1v1.1h-1.1zM692 446h1.1v1.1h-1.1zM692 452h1.1v1.1h-1.1zM692 458h1.1v1.1h-1.1zM692 464h1.1v1.1h-1.1zM692 470h1.1v1.1h-1.1zM692 476h1.1v1.1h-1.1zM692 482h1.1v1.1h-1.1zM692 488h1.1v1.1h-1.1zM692 494h1.1v1.1h-1.1zM692 500h1.1v1.1h-1.1zM692 506h1.1v1.1h-1.1zM692 512h1.1v1.1h-1.1zM692 518h1.1v1.1h-1.1zM692 524h1.1v1.1h-1.1zM692 531h1.1v1.1h-1.1zM692 537h1.1v1.1h-1.1zM692 543h1.1v1.1h-1.1zM692 549h1.1v1.1h-1.1zM692 555h1.1v1.1h-1.1zM692 561h1.1v1.1h-1.1zM692 567h1.1v1.1h-1.1zM692 573h1.1v1.1h-1.1zM692 579h1.1v1.1h-1.1zM692 585h1.1v1.1h-1.1zM692 591h1.1v1.1h-1.1zM692 597h1.1v1.1h-1.1zM692 603h1.1v1.1h-1.1zM692 609h1.1v1.1h-1.1zM692 615h1.1v1.1h-1.1zM692 622h1.1v1.1h-1.1zM692 628h1.1v1.1h-1.1zM692 634h1.1v1.1h-1.1zM692 640h1.1v1.1h-1.1zM692 646h1.1v1.1h-1.1zM692 652h1.1v1.1h-1.1zM692 658h1.1v1.1h-1.1zM692 664h1.1v1.1h-1.1zM692 670h1.1v1.1h-1.1zM692 684h1.1v1.1h-1.1zM692 690h1.1v1.1h-1.1zM692 696h1.1v1.1h-1.1zM692 702h1.1v1.1h-1.1zM692 708h1.1v1.1h-1.1zM692 714h1.1v1.1h-1.1zM692 720h1.1v1.1h-1.1zM692 726h1.1v1.1h-1.1zM692 732h1.1v1.1h-1.1zM692 738h1.1v1.1h-1.1zM692 744h1.1v1.1h-1.1zM692 750h1.1v1.1h-1.1zM692 756h1.1v1.1h-1.1zM692 762h1.1v1.1h-1.1zM692 769h1.1v1.1h-1.1zM692 775h1.1v1.1h-1.1zM692 781h1.1v1.1h-1.1zM692 787h1.1v1.1h-1.1zM692 793h1.1v1.1h-1.1zM692 799h1.1v1.1h-1.1zM692 805h1.1v1.1h-1.1zM692 811h1.1v1.1h-1.1zM692 817h1.1v1.1h-1.1zM692 823h1.1v1.1h-1.1zM692 829h1.1v1.1h-1.1zM692 835h1.1v1.1h-1.1zM692 841h1.1v1.1h-1.1zM692 847h1.1v1.1h-1.1zM692 853h1.1v1.1h-1.1zM692 860h1.1v1.1h-1.1zM692 866h1.1v1.1h-1.1zM692 872h1.1v1.1h-1.1zM692 878h1.1v1.1h-1.1zM692 884h1.1v1.1h-1.1zM692 890h1.1v1.1h-1.1zM692 896h1.1v1.1h-1.1zM692 902h1.1v1.1h-1.1zM692 908h1.1v1.1h-1.1zM692 914h1.1v1.1h-1.1zM692 920h1.1v1.1h-1.1zM692 926h1.1v1.1h-1.1zM692 932h1.1v1.1h-1.1zM692 938h1.1v1.1h-1.1zM692 944h1.1v1.1h-1.1zM692 951h1.1v1.1h-1.1zM692 957h1.1v1.1h-1.1zM692 963h1.1v1.1h-1.1zM692 969h1.1v1.1h-1.1zM692 975h1.1v1.1h-1.1zM862 71h1.1v1.1h-1.1zM862 77h1.1v1.1h-1.1zM862 83h1.1v1.1h-1.1zM862 89h1.1v1.1h-1.1zM862 95h1.1v1.1h-1.1zM862 101h1.1v1.1h-1.1zM862 107h1.1v1.1h-1.1zM862 113h1.1v1.1h-1.1zM862 119h1.1v1.1h-1.1zM862 125h1.1v1.1h-1.1zM862 131h1.1v1.1h-1.1zM862 137h1.1v1.1h-1.1zM862 144h1.1v1.1h-1.1zM862 150h1.1v1.1h-1.1zM862 156h1.1v1.1h-1.1zM862 162h1.1v1.1h-1.1zM862 168h1.1v1.1h-1.1zM862 174h1.1v1.1h-1.1zM862 180h1.1v1.1h-1.1zM862 186h1.1v1.1h-1.1zM862 192h1.1v1.1h-1.1zM862 198h1.1v1.1h-1.1zM862 204h1.1v1.1h-1.1zM862 210h1.1v1.1h-1.1zM862 216h1.1v1.1h-1.1zM862 222h1.1v1.1h-1.1zM862 228h1.1v1.1h-1.1zM862 235h1.1v1.1h-1.1zM862 241h1.1v1.1h-1.1zM862 247h1.1v1.1h-1.1zM862 253h1.1v1.1h-1.1zM862 259h1.1v1.1h-1.1zM862 265h1.1v1.1h-1.1zM862 271h1.1v1.1h-1.1zM862 277h1.1v1.1h-1.1zM862 283h1.1v1.1h-1.1zM862 289h1.1v1.1h-1.1zM862 295h1.1v1.1h-1.1zM862 301h1.1v1.1h-1.1zM862 307h1.1v1.1h-1.1zM862 313h1.1v1.1h-1.1zM862 319h1.1v1.1h-1.1zM862 326h1.1v1.1h-1.1zM862 332h1.1v1.1h-1.1zM862 338h1.1v1.1h-1.1zM862 344h1.1v1.1h-1.1zM862 350h1.1v1.1h-1.1zM862 356h1.1v1.1h-1.1zM862 362h1.1v1.1h-1.1zM862 368h1.1v1.1h-1.1zM862 373h1.1v1.1h-1.1zM862 379h1.1v1.1h-1.1zM862 385h1.1v1.1h-1.1zM862 391h1.1v1.1h-1.1zM862 397h1.1v1.1h-1.1zM862 403h1.1v1.1h-1.1zM862 409h1.1v1.1h-1.1zM862 415h1.1v1.1h-1.1zM862 421h1.1v1.1h-1.1zM862 427h1.1v1.1h-1.1zM862 433h1.1v1.1h-1.1zM862 440h1.1v1.1h-1.1zM862 446h1.1v1.1h-1.1zM862 452h1.1v1.1h-1.1zM862 458h1.1v1.1h-1.1zM862 464h1.1v1.1h-1.1zM862 470h1.1v1.1h-1.1zM862 476h1.1v1.1h-1.1zM862 482h1.1v1.1h-1.1zM862 488h1.1v1.1h-1.1zM862 494h1.1v1.1h-1.1zM862 500h1.1v1.1h-1.1zM862 506h1.1v1.1h-1.1zM862 512h1.1v1.1h-1.1zM862 518h1.1v1.1h-1.1zM862 524h1.1v1.1h-1.1zM862 531h1.1v1.1h-1.1zM862 537h1.1v1.1h-1.1zM862 543h1.1v1.1h-1.1zM862 549h1.1v1.1h-1.1zM862 555h1.1v1.1h-1.1zM862 561h1.1v1.1h-1.1zM862 567h1.1v1.1h-1.1zM862 573h1.1v1.1h-1.1zM862 579h1.1v1.1h-1.1zM862 585h1.1v1.1h-1.1zM862 591h1.1v1.1h-1.1zM862 597h1.1v1.1h-1.1zM862 603h1.1v1.1h-1.1zM862 609h1.1v1.1h-1.1zM862 615h1.1v1.1h-1.1zM862 622h1.1v1.1h-1.1zM862 628h1.1v1.1h-1.1zM862 634h1.1v1.1h-1.1zM862 640h1.1v1.1h-1.1zM862 646h1.1v1.1h-1.1zM862 652h1.1v1.1h-1.1zM862 658h1.1v1.1h-1.1zM862 664h1.1v1.1h-1.1zM862 670h1.1v1.1h-1.1zM862 684h1.1v1.1h-1.1zM862 690h1.1v1.1h-1.1zM862 696h1.1v1.1h-1.1zM862 702h1.1v1.1h-1.1zM862 708h1.1v1.1h-1.1zM862 714h1.1v1.1h-1.1zM862 720h1.1v1.1h-1.1zM862 726h1.1v1.1h-1.1zM862 732h1.1v1.1h-1.1zM862 738h1.1v1.1h-1.1zM862 744h1.1v1.1h-1.1zM862 750h1.1v1.1h-1.1zM862 756h1.1v1.1h-1.1zM862 762h1.1v1.1h-1.1zM862 769h1.1v1.1h-1.1zM862 775h1.1v1.1h-1.1zM862 781h1.1v1.1h-1.1zM862 787h1.1v1.1h-1.1zM862 793h1.1v1.1h-1.1zM862 799h1.1v1.1h-1.1zM862 805h1.1v1.1h-1.1zM862 811h1.1v1.1h-1.1zM862 817h1.1v1.1h-1.1zM862 823h1.1v1.1h-1.1zM862 829h1.1v1.1h-1.1zM862 835h1.1v1.1h-1.1zM862 841h1.1v1.1h-1.1zM862 847h1.1v1.1h-1.1zM862 853h1.1v1.1h-1.1zM862 860h1.1v1.1h-1.1zM862 866h1.1v1.1h-1.1zM862 872h1.1v1.1h-1.1zM862 878h1.1v1.1h-1.1zM862 884h1.1v1.1h-1.1zM862 890h1.1v1.1h-1.1zM862 896h1.1v1.1h-1.1zM862 902h1.1v1.1h-1.1zM862 908h1.1v1.1h-1.1zM862 914h1.1v1.1h-1.1zM862 920h1.1v1.1h-1.1zM862 926h1.1v1.1h-1.1zM862 932h1.1v1.1h-1.1zM862 938h1.1v1.1h-1.1zM862 944h1.1v1.1h-1.1zM862 951h1.1v1.1h-1.1zM862 957h1.1v1.1h-1.1zM862 963h1.1v1.1h-1.1zM862 969h1.1v1.1h-1.1zM862 975h1.1v1.1h-1.1zM1032 71h1.1v1.1h-1.1zM1032 77h1.1v1.1h-1.1zM1032 83h1.1v1.1h-1.1zM1032 89h1.1v1.1h-1.1zM1032 95h1.1v1.1h-1.1zM1032 101h1.1v1.1h-1.1zM1032 107h1.1v1.1h-1.1zM1032 113h1.1v1.1h-1.1zM1032 119h1.1v1.1h-1.1zM1032 125h1.1v1.1h-1.1zM1032 131h1.1v1.1h-1.1zM1032 137h1.1v1.1h-1.1zM1032 144h1.1v1.1h-1.1zM1032 150h1.1v1.1h-1.1zM1032 156h1.1v1.1h-1.1zM1032 162h1.1v1.1h-1.1zM1032 168h1.1v1.1h-1.1zM1032 174h1.1v1.1h-1.1zM1032 180h1.1v1.1h-1.1zM1032 186h1.1v1.1h-1.1zM1032 192h1.1v1.1h-1.1zM1032 198h1.1v1.1h-1.1zM1032 204h1.1v1.1h-1.1zM1032 210h1.1v1.1h-1.1zM1032 216h1.1v1.1h-1.1zM1032 222h1.1v1.1h-1.1zM1032 228h1.1v1.1h-1.1zM1032 235h1.1v1.1h-1.1zM1032 241h1.1v1.1h-1.1zM1032 247h1.1v1.1h-1.1zM1032 253h1.1v1.1h-1.1zM1032 259h1.1v1.1h-1.1zM1032 265h1.1v1.1h-1.1zM1032 271h1.1v1.1h-1.1zM1032 277h1.1v1.1h-1.1zM1032 283h1.1v1.1h-1.1zM1032 289h1.1v1.1h-1.1zM1032 295h1.1v1.1h-1.1zM1032 301h1.1v1.1h-1.1zM1032 307h1.1v1.1h-1.1zM1032 313h1.1v1.1h-1.1zM1032 319h1.1v1.1h-1.1zM1032 326h1.1v1.1h-1.1zM1032 332h1.1v1.1h-1.1zM1032 338h1.1v1.1h-1.1zM1032 344h1.1v1.1h-1.1zM1032 350h1.1v1.1h-1.1zM1032 356h1.1v1.1h-1.1zM1032 362h1.1v1.1h-1.1zM1032 368h1.1v1.1h-1.1zM1032 373h1.1v1.1h-1.1zM1032 379h1.1v1.1h-1.1zM1032 385h1.1v1.1h-1.1zM1032 391h1.1v1.1h-1.1zM1032 397h1.1v1.1h-1.1zM1032 403h1.1v1.1h-1.1zM1032 409h1.1v1.1h-1.1zM1032 415h1.1v1.1h-1.1zM1032 421h1.1v1.1h-1.1zM1032 427h1.1v1.1h-1.1zM1032 433h1.1v1.1h-1.1zM1032 440h1.1v1.1h-1.1zM1032 446h1.1v1.1h-1.1zM1032 452h1.1v1.1h-1.1zM1032 458h1.1v1.1h-1.1zM1032 464h1.1v1.1h-1.1zM1032 470h1.1v1.1h-1.1zM1032 476h1.1v1.1h-1.1zM1032 482h1.1v1.1h-1.1zM1032 488h1.1v1.1h-1.1zM1032 494h1.1v1.1h-1.1zM1032 500h1.1v1.1h-1.1zM1032 506h1.1v1.1h-1.1zM1032 512h1.1v1.1h-1.1zM1032 518h1.1v1.1h-1.1zM1032 524h1.1v1.1h-1.1zM1032 531h1.1v1.1h-1.1zM1032 537h1.1v1.1h-1.1zM1032 543h1.1v1.1h-1.1zM1032 549h1.1v1.1h-1.1zM1032 555h1.1v1.1h-1.1zM1032 561h1.1v1.1h-1.1zM1032 567h1.1v1.1h-1.1zM1032 573h1.1v1.1h-1.1zM1032 579h1.1v1.1h-1.1zM1032 585h1.1v1.1h-1.1zM1032 591h1.1v1.1h-1.1zM1032 597h1.1v1.1h-1.1zM1032 603h1.1v1.1h-1.1zM1032 609h1.1v1.1h-1.1zM1032 615h1.1v1.1h-1.1zM1032 622h1.1v1.1h-1.1zM1032 628h1.1v1.1h-1.1zM1032 634h1.1v1.1h-1.1zM1032 640h1.1v1.1h-1.1zM1032 646h1.1v1.1h-1.1zM1032 652h1.1v1.1h-1.1zM1032 658h1.1v1.1h-1.1zM1032 664h1.1v1.1h-1.1zM1032 670h1.1v1.1h-1.1zM1032 684h1.1v1.1h-1.1zM1032 690h1.1v1.1h-1.1zM1032 696h1.1v1.1h-1.1zM1032 702h1.1v1.1h-1.1zM1032 708h1.1v1.1h-1.1zM1032 714h1.1v1.1h-1.1zM1032 720h1.1v1.1h-1.1zM1032 726h1.1v1.1h-1.1zM1032 732h1.1v1.1h-1.1zM1032 738h1.1v1.1h-1.1zM1032 744h1.1v1.1h-1.1zM1032 750h1.1v1.1h-1.1zM1032 756h1.1v1.1h-1.1zM1032 762h1.1v1.1h-1.1zM1032 769h1.1v1.1h-1.1zM1032 775h1.1v1.1h-1.1zM1032 781h1.1v1.1h-1.1zM1032 787h1.1v1.1h-1.1zM1032 793h1.1v1.1h-1.1zM1032 799h1.1v1.1h-1.1zM1032 805h1.1v1.1h-1.1zM1032 811h1.1v1.1h-1.1zM1032 817h1.1v1.1h-1.1zM1032 823h1.1v1.1h-1.1zM1032 829h1.1v1.1h-1.1zM1032 835h1.1v1.1h-1.1zM1032 841h1.1v1.1h-1.1zM1032 847h1.1v1.1h-1.1zM1032 853h1.1v1.1h-1.1zM1032 860h1.1v1.1h-1.1zM1032 866h1.1v1.1h-1.1zM1032 872h1.1v1.1h-1.1zM1032 878h1.1v1.1h-1.1zM1032 884h1.1v1.1h-1.1zM1032 890h1.1v1.1h-1.1zM1032 896h1.1v1.1h-1.1zM1032 902h1.1v1.1h-1.1zM1032 908h1.1v1.1h-1.1zM1032 914h1.1v1.1h-1.1zM1032 920h1.1v1.1h-1.1zM1032 926h1.1v1.1h-1.1zM1032 932h1.1v1.1h-1.1zM1032 938h1.1v1.1h-1.1zM1032 944h1.1v1.1h-1.1zM1032 951h1.1v1.1h-1.1zM1032 957h1.1v1.1h-1.1zM1032 963h1.1v1.1h-1.1zM1032 969h1.1v1.1h-1.1zM1032 975h1.1v1.1h-1.1zM1202 71h1.1v1.1h-1.1zM1202 77h1.1v1.1h-1.1zM1202 83h1.1v1.1h-1.1zM1202 89h1.1v1.1h-1.1zM1202 95h1.1v1.1h-1.1zM1202 101h1.1v1.1h-1.1zM1202 107h1.1v1.1h-1.1zM1202 113h1.1v1.1h-1.1zM1202 119h1.1v1.1h-1.1zM1202 125h1.1v1.1h-1.1zM1202 131h1.1v1.1h-1.1zM1202 137h1.1v1.1h-1.1zM1202 144h1.1v1.1h-1.1zM1202 150h1.1v1.1h-1.1zM1202 156h1.1v1.1h-1.1zM1202 162h1.1v1.1h-1.1zM1202 168h1.1v1.1h-1.1zM1202 174h1.1v1.1h-1.1zM1202 180h1.1v1.1h-1.1zM1202 186h1.1v1.1h-1.1zM1202 192h1.1v1.1h-1.1zM1202 198h1.1v1.1h-1.1zM1202 204h1.1v1.1h-1.1zM1202 210h1.1v1.1h-1.1zM1202 216h1.1v1.1h-1.1zM1202 222h1.1v1.1h-1.1zM1202 228h1.1v1.1h-1.1zM1202 235h1.1v1.1h-1.1zM1202 241h1.1v1.1h-1.1zM1202 247h1.1v1.1h-1.1zM1202 253h1.1v1.1h-1.1zM1202 259h1.1v1.1h-1.1zM1202 265h1.1v1.1h-1.1zM1202 271h1.1v1.1h-1.1zM1202 277h1.1v1.1h-1.1zM1202 283h1.1v1.1h-1.1zM1202 289h1.1v1.1h-1.1zM1202 295h1.1v1.1h-1.1zM1202 301h1.1v1.1h-1.1zM1202 307h1.1v1.1h-1.1zM1202 313h1.1v1.1h-1.1zM1202 319h1.1v1.1h-1.1zM1202 326h1.1v1.1h-1.1zM1202 332h1.1v1.1h-1.1zM1202 338h1.1v1.1h-1.1zM1202 344h1.1v1.1h-1.1zM1202 350h1.1v1.1h-1.1zM1202 356h1.1v1.1h-1.1zM1202 362h1.1v1.1h-1.1zM1202 368h1.1v1.1h-1.1zM1202 373h1.1v1.1h-1.1zM1202 379h1.1v1.1h-1.1zM1202 385h1.1v1.1h-1.1zM1202 391h1.1v1.1h-1.1zM1202 397h1.1v1.1h-1.1zM1202 403h1.1v1.1h-1.1zM1202 409h1.1v1.1h-1.1zM1202 415h1.1v1.1h-1.1zM1202 421h1.1v1.1h-1.1zM1202 427h1.1v1.1h-1.1zM1202 433h1.1v1.1h-1.1zM1202 440h1.1v1.1h-1.1zM1202 446h1.1v1.1h-1.1zM1202 452h1.1v1.1h-1.1zM1202 458h1.1v1.1h-1.1zM1202 464h1.1v1.1h-1.1zM1202 470h1.1v1.1h-1.1zM1202 476h1.1v1.1h-1.1zM1202 482h1.1v1.1h-1.1zM1202 488h1.1v1.1h-1.1zM1202 494h1.1v1.1h-1.1zM1202 500h1.1v1.1h-1.1zM1202 506h1.1v1.1h-1.1zM1202 512h1.1v1.1h-1.1zM1202 518h1.1v1.1h-1.1zM1202 524h1.1v1.1h-1.1zM1202 531h1.1v1.1h-1.1zM1202 537h1.1v1.1h-1.1zM1202 543h1.1v1.1h-1.1zM1202 549h1.1v1.1h-1.1zM1202 555h1.1v1.1h-1.1zM1202 561h1.1v1.1h-1.1zM1202 567h1.1v1.1h-1.1zM1202 573h1.1v1.1h-1.1zM1202 579h1.1v1.1h-1.1zM1202 585h1.1v1.1h-1.1zM1202 591h1.1v1.1h-1.1zM1202 597h1.1v1.1h-1.1zM1202 603h1.1v1.1h-1.1zM1202 609h1.1v1.1h-1.1zM1202 615h1.1v1.1h-1.1zM1202 622h1.1v1.1h-1.1zM1202 628h1.1v1.1h-1.1zM1202 634h1.1v1.1h-1.1zM1202 640h1.1v1.1h-1.1zM1202 646h1.1v1.1h-1.1zM1202 652h1.1v1.1h-1.1zM1202 658h1.1v1.1h-1.1zM1202 664h1.1v1.1h-1.1zM1202 670h1.1v1.1h-1.1zM1202 684h1.1v1.1h-1.1zM1202 690h1.1v1.1h-1.1zM1202 696h1.1v1.1h-1.1zM1202 702h1.1v1.1h-1.1zM1202 708h1.1v1.1h-1.1zM1202 714h1.1v1.1h-1.1zM1202 720h1.1v1.1h-1.1zM1202 726h1.1v1.1h-1.1zM1202 732h1.1v1.1h-1.1zM1202 738h1.1v1.1h-1.1zM1202 744h1.1v1.1h-1.1zM1202 750h1.1v1.1h-1.1zM1202 756h1.1v1.1h-1.1zM1202 762h1.1v1.1h-1.1zM1202 769h1.1v1.1h-1.1zM1202 775h1.1v1.1h-1.1zM1202 781h1.1v1.1h-1.1zM1202 787h1.1v1.1h-1.1zM1202 793h1.1v1.1h-1.1zM1202 799h1.1v1.1h-1.1zM1202 805h1.1v1.1h-1.1zM1202 811h1.1v1.1h-1.1zM1202 817h1.1v1.1h-1.1zM1202 823h1.1v1.1h-1.1zM1202 829h1.1v1.1h-1.1zM1202 835h1.1v1.1h-1.1zM1202 841h1.1v1.1h-1.1zM1202 847h1.1v1.1h-1.1zM1202 853h1.1v1.1h-1.1zM1202 860h1.1v1.1h-1.1zM1202 866h1.1v1.1h-1.1zM1202 872h1.1v1.1h-1.1zM1202 878h1.1v1.1h-1.1zM1202 884h1.1v1.1h-1.1zM1202 890h1.1v1.1h-1.1zM1202 896h1.1v1.1h-1.1zM1202 902h1.1v1.1h-1.1zM1202 908h1.1v1.1h-1.1zM1202 914h1.1v1.1h-1.1zM1202 920h1.1v1.1h-1.1zM1202 926h1.1v1.1h-1.1zM1202 932h1.1v1.1h-1.1zM1202 938h1.1v1.1h-1.1zM1202 944h1.1v1.1h-1.1zM1202 951h1.1v1.1h-1.1zM1202 957h1.1v1.1h-1.1zM1202 963h1.1v1.1h-1.1zM1202 969h1.1v1.1h-1.1zM1202 975h1.1v1.1h-1.1zM1542 71h1.1v1.1h-1.1zM1542 77h1.1v1.1h-1.1zM1542 83h1.1v1.1h-1.1zM1542 89h1.1v1.1h-1.1zM1542 95h1.1v1.1h-1.1zM1542 101h1.1v1.1h-1.1zM1542 107h1.1v1.1h-1.1zM1542 113h1.1v1.1h-1.1zM1542 119h1.1v1.1h-1.1zM1542 125h1.1v1.1h-1.1zM1542 131h1.1v1.1h-1.1zM1542 137h1.1v1.1h-1.1zM1542 144h1.1v1.1h-1.1zM1542 150h1.1v1.1h-1.1zM1542 156h1.1v1.1h-1.1zM1542 162h1.1v1.1h-1.1zM1542 168h1.1v1.1h-1.1zM1542 174h1.1v1.1h-1.1zM1542 180h1.1v1.1h-1.1zM1542 186h1.1v1.1h-1.1zM1542 192h1.1v1.1h-1.1zM1542 198h1.1v1.1h-1.1zM1542 204h1.1v1.1h-1.1zM1542 210h1.1v1.1h-1.1zM1542 216h1.1v1.1h-1.1zM1542 222h1.1v1.1h-1.1zM1542 228h1.1v1.1h-1.1zM1542 235h1.1v1.1h-1.1zM1542 241h1.1v1.1h-1.1zM1542 247h1.1v1.1h-1.1zM1542 253h1.1v1.1h-1.1zM1542 259h1.1v1.1h-1.1zM1542 265h1.1v1.1h-1.1zM1542 271h1.1v1.1h-1.1zM1542 277h1.1v1.1h-1.1zM1542 283h1.1v1.1h-1.1zM1542 289h1.1v1.1h-1.1zM1542 295h1.1v1.1h-1.1zM1542 301h1.1v1.1h-1.1zM1542 307h1.1v1.1h-1.1zM1542 313h1.1v1.1h-1.1zM1542 319h1.1v1.1h-1.1zM1542 326h1.1v1.1h-1.1zM1542 332h1.1v1.1h-1.1zM1542 338h1.1v1.1h-1.1zM1542 344h1.1v1.1h-1.1zM1542 350h1.1v1.1h-1.1zM1542 356h1.1v1.1h-1.1zM1542 362h1.1v1.1h-1.1zM1542 368h1.1v1.1h-1.1zM1542 373h1.1v1.1h-1.1zM1542 379h1.1v1.1h-1.1zM1542 385h1.1v1.1h-1.1zM1542 391h1.1v1.1h-1.1zM1542 397h1.1v1.1h-1.1zM1542 403h1.1v1.1h-1.1zM1542 409h1.1v1.1h-1.1zM1542 415h1.1v1.1h-1.1zM1542 421h1.1v1.1h-1.1zM1542 427h1.1v1.1h-1.1zM1542 433h1.1v1.1h-1.1zM1542 440h1.1v1.1h-1.1zM1542 446h1.1v1.1h-1.1zM1542 452h1.1v1.1h-1.1zM1542 458h1.1v1.1h-1.1zM1542 464h1.1v1.1h-1.1zM1542 470h1.1v1.1h-1.1zM1542 476h1.1v1.1h-1.1zM1542 482h1.1v1.1h-1.1zM1542 488h1.1v1.1h-1.1zM1542 494h1.1v1.1h-1.1zM1542 500h1.1v1.1h-1.1zM1542 506h1.1v1.1h-1.1zM1542 512h1.1v1.1h-1.1zM1542 518h1.1v1.1h-1.1zM1542 524h1.1v1.1h-1.1zM1542 531h1.1v1.1h-1.1zM1542 537h1.1v1.1h-1.1zM1542 543h1.1v1.1h-1.1zM1542 549h1.1v1.1h-1.1zM1542 555h1.1v1.1h-1.1zM1542 561h1.1v1.1h-1.1zM1542 567h1.1v1.1h-1.1zM1542 573h1.1v1.1h-1.1zM1542 579h1.1v1.1h-1.1zM1542 585h1.1v1.1h-1.1zM1542 591h1.1v1.1h-1.1zM1542 597h1.1v1.1h-1.1zM1542 603h1.1v1.1h-1.1zM1542 609h1.1v1.1h-1.1zM1542 615h1.1v1.1h-1.1zM1542 622h1.1v1.1h-1.1zM1542 628h1.1v1.1h-1.1zM1542 634h1.1v1.1h-1.1zM1542 640h1.1v1.1h-1.1zM1542 646h1.1v1.1h-1.1zM1542 652h1.1v1.1h-1.1zM1542 658h1.1v1.1h-1.1zM1542 664h1.1v1.1h-1.1zM1542 670h1.1v1.1h-1.1zM1542 684h1.1v1.1h-1.1zM1542 690h1.1v1.1h-1.1zM1542 696h1.1v1.1h-1.1zM1542 702h1.1v1.1h-1.1zM1542 708h1.1v1.1h-1.1zM1542 714h1.1v1.1h-1.1zM1542 720h1.1v1.1h-1.1zM1542 726h1.1v1.1h-1.1zM1542 732h1.1v1.1h-1.1zM1542 738h1.1v1.1h-1.1zM1542 744h1.1v1.1h-1.1zM1542 750h1.1v1.1h-1.1zM1542 756h1.1v1.1h-1.1zM1542 762h1.1v1.1h-1.1zM1542 769h1.1v1.1h-1.1zM1542 775h1.1v1.1h-1.1zM1542 781h1.1v1.1h-1.1zM1542 787h1.1v1.1h-1.1zM1542 793h1.1v1.1h-1.1zM1542 799h1.1v1.1h-1.1zM1542 805h1.1v1.1h-1.1zM1542 811h1.1v1.1h-1.1zM1542 817h1.1v1.1h-1.1zM1542 823h1.1v1.1h-1.1zM1542 829h1.1v1.1h-1.1zM1542 835h1.1v1.1h-1.1zM1542 841h1.1v1.1h-1.1zM1542 847h1.1v1.1h-1.1zM1542 853h1.1v1.1h-1.1zM1542 860h1.1v1.1h-1.1zM1542 866h1.1v1.1h-1.1zM1542 872h1.1v1.1h-1.1zM1542 878h1.1v1.1h-1.1zM1542 884h1.1v1.1h-1.1zM1542 890h1.1v1.1h-1.1zM1542 896h1.1v1.1h-1.1zM1542 902h1.1v1.1h-1.1zM1542 908h1.1v1.1h-1.1zM1542 914h1.1v1.1h-1.1zM1542 920h1.1v1.1h-1.1zM1542 926h1.1v1.1h-1.1zM1542 932h1.1v1.1h-1.1zM1542 938h1.1v1.1h-1.1zM1542 944h1.1v1.1h-1.1zM1542 951h1.1v1.1h-1.1zM1542 957h1.1v1.1h-1.1zM1542 963h1.1v1.1h-1.1zM1542 969h1.1v1.1h-1.1zM1542 975h1.1v1.1h-1.1zM12 71h1.3v1h-1.3zM12 77h1.3v1h-1.3zM12 83h1.3v1h-1.3zM12 89h1.3v1h-1.3zM12 95h1.3v1h-1.3zM12 101h1.3v1h-1.3zM12 107h1.3v1h-1.3zM12 113h1.3v1h-1.3zM12 119h1.3v1h-1.3zM12 125h1.3v1h-1.3zM12 131h1.3v1h-1.3zM12 137h1.3v1h-1.3zM12 144h1.3v1h-1.3zM12 150h1.3v1h-1.3zM12 156h1.3v1h-1.3zM12 162h1.3v1h-1.3zM12 168h1.3v1h-1.3zM12 174h1.3v1h-1.3zM12 180h1.3v1h-1.3zM12 186h1.3v1h-1.3zM12 192h1.3v1h-1.3zM12 198h1.3v1h-1.3zM12 204h1.3v1h-1.3zM12 210h1.3v1h-1.3zM12 216h1.3v1h-1.3zM12 222h1.3v1h-1.3zM12 228h1.3v1h-1.3zM12 235h1.3v1h-1.3zM12 241h1.3v1h-1.3zM12 247h1.3v1h-1.3zM12 253h1.3v1h-1.3zM12 259h1.3v1h-1.3zM12 265h1.3v1h-1.3zM12 271h1.3v1h-1.3zM12 277h1.3v1h-1.3zM12 283h1.3v1h-1.3zM12 289h1.3v1h-1.3zM12 295h1.3v1h-1.3zM12 301h1.3v1h-1.3zM12 307h1.3v1h-1.3zM12 313h1.3v1h-1.3zM12 319h1.3v1h-1.3zM12 326h1.3v1h-1.3zM12 332h1.3v1h-1.3zM12 338h1.3v1h-1.3zM12 344h1.3v1h-1.3zM12 350h1.3v1h-1.3zM12 356h1.3v1h-1.3zM12 362h1.3v1h-1.3zM12 368h1.3v1h-1.3zM12 373h1.3v1h-1.3zM12 379h1.3v1h-1.3zM12 385h1.3v1h-1.3zM12 391h1.3v1h-1.3zM12 397h1.3v1h-1.3zM12 403h1.3v1h-1.3zM12 409h1.3v1h-1.3zM12 415h1.3v1h-1.3zM12 421h1.3v1h-1.3zM12 427h1.3v1h-1.3zM12 433h1.3v1h-1.3zM12 440h1.3v1h-1.3zM12 446h1.3v1h-1.3zM12 452h1.3v1h-1.3zM12 458h1.3v1h-1.3zM12 464h1.3v1h-1.3zM12 470h1.3v1h-1.3zM12 476h1.3v1h-1.3zM12 482h1.3v1h-1.3zM12 488h1.3v1h-1.3zM12 494h1.3v1h-1.3zM12 500h1.3v1h-1.3zM12 506h1.3v1h-1.3zM12 512h1.3v1h-1.3zM12 518h1.3v1h-1.3zM12 524h1.3v1h-1.3zM12 531h1.3v1h-1.3zM12 537h1.3v1h-1.3zM12 543h1.3v1h-1.3zM12 549h1.3v1h-1.3zM12 555h1.3v1h-1.3zM12 561h1.3v1h-1.3zM12 567h1.3v1h-1.3zM12 573h1.3v1h-1.3zM12 579h1.3v1h-1.3zM12 585h1.3v1h-1.3zM12 591h1.3v1h-1.3zM12 597h1.3v1h-1.3zM12 603h1.3v1h-1.3zM12 609h1.3v1h-1.3zM12 615h1.3v1h-1.3zM12 622h1.3v1h-1.3zM12 628h1.3v1h-1.3zM12 634h1.3v1h-1.3zM12 640h1.3v1h-1.3zM12 646h1.3v1h-1.3zM12 652h1.3v1h-1.3zM12 658h1.3v1h-1.3zM12 664h1.3v1h-1.3zM12 670h1.3v1h-1.3zM12 684h1.3v1h-1.3zM12 690h1.3v1h-1.3zM12 696h1.3v1h-1.3zM12 702h1.3v1h-1.3zM12 708h1.3v1h-1.3zM12 714h1.3v1h-1.3zM12 720h1.3v1h-1.3zM12 726h1.3v1h-1.3zM12 732h1.3v1h-1.3zM12 738h1.3v1h-1.3zM12 744h1.3v1h-1.3zM12 750h1.3v1h-1.3zM12 756h1.3v1h-1.3zM12 762h1.3v1h-1.3zM12 769h1.3v1h-1.3zM12 775h1.3v1h-1.3zM12 781h1.3v1h-1.3zM12 787h1.3v1h-1.3zM12 793h1.3v1h-1.3zM12 799h1.3v1h-1.3zM12 805h1.3v1h-1.3zM12 811h1.3v1h-1.3zM12 817h1.3v1h-1.3zM12 823h1.3v1h-1.3zM12 829h1.3v1h-1.3zM12 835h1.3v1h-1.3zM12 841h1.3v1h-1.3zM12 847h1.3v1h-1.3zM12 853h1.3v1h-1.3zM12 860h1.3v1h-1.3zM12 866h1.3v1h-1.3zM12 872h1.3v1h-1.3zM12 878h1.3v1h-1.3zM12 884h1.3v1h-1.3zM12 890h1.3v1h-1.3zM12 896h1.3v1h-1.3zM12 902h1.3v1h-1.3zM12 908h1.3v1h-1.3zM12 914h1.3v1h-1.3zM12 920h1.3v1h-1.3zM12 926h1.3v1h-1.3zM12 932h1.3v1h-1.3zM12 938h1.3v1h-1.3zM12 944h1.3v1h-1.3zM12 951h1.3v1h-1.3zM12 957h1.3v1h-1.3zM12 963h1.3v1h-1.3zM12 969h1.3v1h-1.3zM12 975h1.3v1h-1.3z"/>

</svg>
<div class="a vl y" style="top:88px">14 V</div>
<div class="a vl y" style="top:118px">13.5 V</div>
<div class="a vl y" style="top:149px">13 V</div>
<div class="a vl y" style="top:179px">12.5 V</div>
<div class="a vl y" style="top:209px">12 V</div>
<div class="a vl y" style="top:240px">11.5 V</div>
<div class="a vl y" style="top:270px">11 V</div>
<div class="a vl y" style="top:300px">10.5 V</div>
<div class="a vl y" style="top:331px">10 V</div>
<div class="a vl c" style="top:396px">180 A</div>
<div class="a vl c" style="top:426px">160 A</div>
<div class="a vl c" style="top:457px">140 A</div>
<div class="a vl c" style="top:487px">120 A</div>
<div class="a vl c" style="top:517px">100 A</div>
<div class="a vl c" style="top:548px">80 A</div>
<div class="a vl c" style="top:578px">60 A</div>
<div class="a vl c" style="top:608px">40 A</div>
<div class="a vl c" style="top:639px">20 A</div>
<div class="a vl r" style="top:683px">7 V</div>
<div class="a vl r" style="top:713px">6 V</div>
<div class="a vl r" style="top:743px">5 V</div>
<div class="a vl r" style="top:774px">4 V</div>
<div class="a vl r" style="top:804px">3 V</div>
<div class="a vl r" style="top:834px">2 V</div>
<div class="a vl r" style="top:865px">1 V</div>
<div class="a vl r" style="top:895px">0 V</div>
<div class="a vl r" style="top:925px">-1 V</div>
<div class="a vl r" style="top:956px">-2 V</div>
<div class="a tl" style="left:142px;top:354px">-14 ms</div>
<div class="a tl" style="left:312px;top:354px">-12 ms</div>
<div class="a tl" style="left:482px;top:354px">-10 ms</div>
<div class="a tl" style="left:652px;top:354px">-8 ms</div>
<div class="a tl" style="left:822px;top:354px">-6 ms</div>
<div class="a tl" style="left:992px;top:354px">-4 ms</div>
<div class="a tl" style="left:1162px;top:354px">-2 ms</div>
<div class="a tl" style="left:1332px;top:354px">0 s</div>
<div class="a tl" style="left:1502px;top:354px">2 ms</div>
<svg class="a" style="left:12px;top:68px" width="1700" height="914" viewBox="12 68 1700 914">

<rect x="12" y="191" width="1700" height="10" fill="#fff" fill-opacity="0.05"/>
<rect x="12" y="209.5" width="1700" height="10.5" fill="#fff" fill-opacity="0.05"/>
<rect x="12" y="195" width="1700" height="1.3" fill="#f4f4f4"/>
<rect x="12" y="214" width="1700" height="1.3" fill="#f4f4f4"/>
<rect x="75" y="196" width="1.3" height="6" fill="#ff2020"/>
<rect x="75" y="209" width="1.3" height="5" fill="#ff2020"/>
<line x1="1372.5" y1="106" x2="1372.5" y2="982" stroke="#d0d0d0" stroke-width="1.3" stroke-dasharray="5 5" stroke-dashoffset="6"/>
<line x1="52" y1="902.5" x2="1690" y2="902.5" stroke="#d0d0d0" stroke-width="1.4" stroke-dasharray="5 5"/>
<line x1="1711.4" y1="679" x2="1711.4" y2="982" stroke="#f8a030" stroke-width="1.2" stroke-dasharray="5 5"/>
<path d="M12.0 204.70 13.0 204.70 14.0 204.70 15.0 204.70 16.0 204.70 17.0 204.70 18.0 204.70 19.0 204.70 20.0 204.70 21.0 204.70 22.0 204.70 23.0 204.70 24.0 204.70 25.0 204.70 26.0 204.70 27.0 204.70 28.0 204.70 29.0 204.70 30.0 204.70 31.0 204.70 32.0 204.70 33.0 204.70 34.0 204.70 35.0 204.70 36.0 204.70 37.0 204.70 38.0 204.70 39.0 204.70 40.0 204.70 41.0 204.70 42.0 204.70 43.0 204.70 44.0 204.70 45.0 204.70 46.0 204.70 47.0 204.70 48.0 204.70 49.0 204.70 50.0 204.70 51.0 204.70 52.0 204.70 53.0 204.70 54.0 204.70 55.0 204.70 56.0 204.70 57.0 204.70 58.0 204.70 59.0 204.70 60.0 204.70 61.0 204.70 62.0 204.70 63.0 204.70 64.0 204.70 65.0 204.70 66.0 204.70 67.0 204.70 68.0 204.70 69.0 204.70 70.0 204.70 71.0 204.70 72.0 204.70 73.0 204.70 74.0 204.70 75.0 204.70 76.0 204.70 77.0 204.70 78.0 204.70 79.0 204.70 80.0 204.70 81.0 204.70 82.0 204.70 83.0 204.70 84.0 204.70 85.0 204.70 86.0 204.70 87.0 204.70 88.0 204.70 89.0 204.70 90.0 204.70 91.0 204.70 92.0 204.70 93.0 204.70 94.0 204.70 95.0 204.70 96.0 204.70 97.0 204.70 98.0 204.70 99.0 204.70 100.0 204.70 101.0 204.70 102.0 204.70 103.0 204.70 104.0 204.70 105.0 204.70 106.0 204.70 107.0 204.70 108.0 204.70 109.0 204.70 110.0 204.70 111.0 204.70 112.0 204.70 113.0 204.70 114.0 204.70 115.0 204.70 116.0 204.70 117.0 204.70 118.0 204.70 119.0 204.70 120.0 204.70 121.0 204.70 122.0 204.70 123.0 204.70 124.0 204.70 125.0 204.70 126.0 204.70 127.0 204.70 128.0 204.70 129.0 204.70 130.0 204.70 131.0 204.70 132.0 204.70 133.0 204.70 134.0 204.70 135.0 204.70 136.0 204.70 137.0 204.70 138.0 204.70 139.0 204.70 140.0 204.70 141.0 204.70 142.0 204.70 143.0 204.70 144.0 204.70 145.0 204.70 146.0 204.70 147.0 204.70 148.0 204.70 149.0 204.70 150.0 204.70 151.0 204.70 152.0 204.70 153.0 204.70 154.0 204.70 155.0 204.70 156.0 204.70 157.0 204.70 158.0 204.70 159.0 204.70 160.0 204.70 161.0 204.70 162.0 204.70 163.0 204.70 164.0 204.70 165.0 204.70 166.0 204.70 167.0 204.70 168.0 204.70 169.0 204.70 170.0 204.70 171.0 204.70 172.0 204.70 173.0 204.70 174.0 204.70 175.0 204.70 176.0 204.70 177.0 204.70 178.0 204.70 179.0 204.70 180.0 204.70 181.0 204.70 182.0 204.70 183.0 204.70 184.0 204.70 185.0 204.70 186.0 204.70 187.0 204.70 188.0 204.70 189.0 204.70 190.0 204.70 191.0 204.70 192.0 204.70 193.0 204.70 194.0 204.70 195.0 204.70 196.0 204.70 197.0 204.70 198.0 204.70 199.0 204.70 200.0 204.70 201.0 204.70 202.0 204.70 203.0 204.70 204.0 204.70 205.0 204.70 206.0 204.70 207.0 204.70 208.0 204.70 209.0 204.70 210.0 204.70 211.0 204.70 212.0 204.70 213.0 204.70 214.0 204.70 215.0 204.70 216.0 204.70 217.0 204.70 218.0 204.70 219.0 204.70 220.0 204.70 221.0 204.70 222.0 204.70 223.0 204.70 224.0 204.70 225.0 204.70 226.0 204.70 227.0 204.70 228.0 204.70 229.0 204.70 230.0 204.70 231.0 204.70 232.0 204.70 233.0 204.70 234.0 204.70 235.0 204.70 236.0 204.70 237.0 204.70 238.0 204.70 239.0 204.70 240.0 204.70 241.0 204.70 242.0 204.70 243.0 204.70 244.0 204.70 245.0 204.70 246.0 204.70 247.0 204.70 248.0 204.70 249.0 204.70 250.0 204.70 251.0 204.70 252.0 204.70 253.0 204.70 254.0 204.70 255.0 204.70 256.0 204.70 257.0 204.70 258.0 204.70 259.0 204.70 260.0 204.70 261.0 204.70 262.0 204.70 263.0 204.70 264.0 204.70 265.0 204.70 266.0 204.70 267.0 204.70 268.0 204.70 269.0 204.70 270.0 204.70 271.0 204.70 272.0 204.70 273.0 204.70 274.0 204.70 275.0 204.70 276.0 204.70 277.0 204.70 278.0 204.70 279.0 204.70 280.0 204.70 281.0 204.70 282.0 204.70 283.0 204.70 284.0 204.70 285.0 204.70 286.0 204.70 287.0 204.70 288.0 204.70 289.0 204.70 290.0 204.70 291.0 204.70 292.0 204.70 293.0 204.70 294.0 204.70 295.0 204.70 296.0 204.70 297.0 204.70 298.0 211.64 299.0 212.52 300.0 213.40 301.0 213.70 302.0 213.23 303.0 212.78 304.0 212.36 305.0 211.96 306.0 211.59 307.0 211.23 308.0 210.90 309.0 210.59 310.0 210.29 311.0 210.01 312.0 209.75 313.0 209.50 314.0 209.26 315.0 209.04 316.0 208.84 317.0 208.64 318.0 208.45 319.0 208.28 320.0 208.12 321.0 207.96 322.0 207.81 323.0 207.68 324.0 207.55 325.0 207.42 326.0 207.31 327.0 207.20 328.0 207.10 329.0 207.00 330.0 206.91 331.0 206.82 332.0 206.74 333.0 206.66 334.0 206.59 335.0 206.52 336.0 206.46 337.0 206.40 338.0 206.34 339.0 206.29 340.0 206.24 341.0 206.19 342.0 206.14 343.0 206.10 344.0 206.06 345.0 206.02 346.0 205.99 347.0 205.95 348.0 205.92 349.0 205.89 350.0 205.86 351.0 205.84 352.0 205.81 353.0 205.79 354.0 205.77 355.0 205.75 356.0 205.73 357.0 205.71 358.0 205.69 359.0 205.67 360.0 205.66 361.0 205.64 362.0 205.63 363.0 205.62 364.0 205.60 365.0 205.59 366.0 205.58 367.0 205.57 368.0 205.56 369.0 205.55 370.0 205.54 371.0 205.54 372.0 205.53 373.0 205.52 374.0 205.51 375.0 205.51 376.0 205.50 377.0 205.49 378.0 205.49 379.0 205.48 380.0 205.48 381.0 205.48 382.0 205.47 382.0 198.90 383.0 198.40 384.0 197.90 385.0 196.40 386.0 196.75 387.0 197.08 388.0 197.39 389.0 197.68 390.0 197.95 391.0 198.20 392.0 198.44 393.0 198.66 394.0 198.87 395.0 199.07 396.0 199.26 397.0 199.43 398.0 199.59 399.0 199.75 400.0 199.90 401.0 200.03 402.0 200.16 403.0 200.29 404.0 200.40 405.0 200.51 406.0 200.62 407.0 200.72 408.0 200.81 409.0 200.90 410.0 200.98 411.0 201.06 412.0 201.14 413.0 201.21 414.0 201.28 415.0 201.34 416.0 201.41 417.0 201.47 418.0 201.52 419.0 201.58 420.0 201.63 421.0 201.68 422.0 201.73 423.0 201.78 424.0 201.82 425.0 201.86 426.0 201.91 427.0 201.95 428.0 201.98 429.0 202.02 430.0 202.06 431.0 202.09 432.0 202.13 433.0 202.16 434.0 202.19 435.0 202.22 436.0 202.25 437.0 202.28 438.0 202.31 439.0 202.34 440.0 202.37 441.0 202.39 442.0 202.42 443.0 202.44 444.0 202.47 445.0 202.49 446.0 202.52 447.0 202.54 448.0 202.56 449.0 202.58 450.0 202.61 451.0 202.63 452.0 202.65 453.0 202.67 454.0 202.69 455.0 202.71 456.0 202.73 457.0 202.75 458.0 202.77 459.0 202.79 460.0 202.81 461.0 202.83 462.0 202.84 463.0 202.86 464.0 202.88 465.0 202.90 466.0 202.91 467.0 202.93 468.0 202.95 469.0 202.96 470.0 202.98 471.0 203.00 472.0 203.01 473.0 203.03 474.0 203.04 475.0 203.06 476.0 203.08 477.0 203.09 478.0 203.11 479.0 203.12 480.0 203.13 481.0 203.15 482.0 203.16 483.0 203.18 484.0 203.19 485.0 203.21 486.0 203.22 487.0 203.23 488.0 203.25 489.0 203.26 490.0 203.27 491.0 203.29 492.0 203.30 493.0 203.31 494.0 203.32 495.0 203.34 496.0 203.35 497.0 203.36 498.0 203.37 499.0 203.39 500.0 203.40 501.0 203.41 502.0 203.42 503.0 203.43 504.0 203.44 505.0 203.46 506.0 203.47 507.0 203.48 508.0 203.49 509.0 203.50 510.0 203.51 511.0 203.52 512.0 203.53 513.0 203.54 514.0 203.55 515.0 203.56 516.0 203.58 517.0 203.59 518.0 203.60 519.0 203.61 520.0 203.62 521.0 203.63 522.0 203.63 523.0 203.64 524.0 203.65 525.0 203.66 526.0 203.67 527.0 203.68 528.0 203.69 529.0 203.70 530.0 203.71 531.0 203.72 532.0 203.73 533.0 203.74 534.0 203.75 535.0 203.75 536.0 203.76 537.0 203.77 538.0 203.78 539.0 203.79 540.0 203.80 541.0 203.80 542.0 203.81 543.0 203.82 544.0 203.83 545.0 203.84 546.0 203.84 547.0 203.85 548.0 203.86 549.0 203.87 550.0 203.87 551.0 203.88 552.0 203.89 553.0 203.90 554.0 203.90 555.0 203.91 556.0 203.92 557.0 203.93 558.0 203.93 559.0 203.94 560.0 203.95 561.0 203.95 562.0 203.96 563.0 203.97 564.0 203.97 565.0 203.98 566.0 203.99 567.0 203.99 568.0 204.00 569.0 204.01 570.0 204.01 571.0 204.02 572.0 204.02 573.0 204.03 574.0 204.04 575.0 204.04 576.0 204.05 577.0 204.05 578.0 204.06 579.0 204.07 580.0 204.07 581.0 204.08 582.0 204.08 583.0 204.09 584.0 204.09 585.0 204.10 586.0 204.10 587.0 204.11 588.0 204.12 589.0 204.12 590.0 204.13 591.0 204.13 592.0 204.14 593.0 204.14 594.0 204.15 595.0 204.15 596.0 204.16 597.0 204.16 598.0 204.17 599.0 204.17 600.0 204.18 601.0 204.18 602.0 204.19 603.0 204.19 604.0 204.19 605.0 204.20 606.0 204.20 607.0 204.21 608.0 204.21 609.0 204.22 610.0 204.22 611.0 204.23 612.0 204.23 613.0 204.23 614.0 204.24 615.0 204.24 616.0 204.25 617.0 204.25 618.0 204.26 619.0 204.26 620.0 204.26 621.0 204.27 622.0 204.27 623.0 204.27 624.0 204.28 625.0 204.28 626.0 204.29 627.0 204.29 628.0 204.29 629.0 204.30 630.0 204.30 631.0 204.30 632.0 204.31 633.0 204.31 634.0 204.32 635.0 204.32 636.0 204.32 637.0 204.33 638.0 204.33 639.0 204.33 640.0 204.34 641.0 204.34 642.0 204.34 643.0 204.35 644.0 204.35 645.0 204.35 646.0 204.36 647.0 204.36 648.0 204.36 649.0 204.36 650.0 204.37 651.0 204.37 652.0 204.37 653.0 204.38 654.0 204.38 655.0 204.38 656.0 204.39 657.0 204.39 658.0 204.39 659.0 204.39 660.0 204.40 661.0 204.40 662.0 204.40 663.0 204.40 664.0 204.41 665.0 204.41 666.0 204.41 667.0 204.42 668.0 204.42 669.0 204.42 670.0 204.42 671.0 204.43 672.0 204.43 673.0 204.43 674.0 204.43 675.0 204.44 676.0 204.44 677.0 204.44 678.0 204.44 679.0 204.44 680.0 204.45 681.0 204.45 682.0 204.45 683.0 204.45 684.0 204.46 685.0 204.46 686.0 204.46 687.0 204.46 688.0 204.46 689.0 204.47 690.0 204.47 691.0 204.47 692.0 204.47 693.0 204.48 694.0 204.48 695.0 204.48 696.0 204.48 697.0 204.48 698.0 204.49 699.0 204.49 700.0 204.49 701.0 204.49 702.0 204.49 703.0 204.49 704.0 204.50 705.0 204.50 706.0 204.50 707.0 204.50 708.0 204.50 709.0 204.51 710.0 204.51 711.0 204.51 712.0 204.51 713.0 204.51 714.0 204.51 715.0 204.52 716.0 204.52 717.0 204.52 718.0 204.52 719.0 204.52 720.0 204.52 721.0 204.53 722.0 204.53 723.0 204.53 724.0 204.53 725.0 204.53 726.0 204.53 727.0 204.53 728.0 204.54 729.0 204.54 730.0 204.54 731.0 204.54 732.0 204.54 733.0 204.54 734.0 204.55 735.0 204.55 736.0 204.55 737.0 204.55 738.0 204.55 739.0 204.55 740.0 204.55 741.0 204.55 742.0 204.56 743.0 204.56 744.0 204.56 745.0 204.56 746.0 204.56 747.0 204.56 748.0 204.56 749.0 204.56 750.0 204.57 751.0 204.57 752.0 204.57 753.0 204.57 754.0 204.57 755.0 204.57 756.0 204.57 757.0 204.57 758.0 204.58 759.0 204.58 760.0 204.58 761.0 204.58 762.0 204.58 763.0 204.58 764.0 204.58 765.0 204.58 766.0 204.58 767.0 204.59 768.0 204.59 769.0 204.59 770.0 204.59 771.0 204.59 772.0 204.59 773.0 204.59 774.0 204.59 775.0 204.59 776.0 204.59 777.0 204.60 778.0 204.60 779.0 204.60 780.0 204.60 781.0 204.60 782.0 204.60 783.0 204.60 784.0 204.60 785.0 204.60 786.0 204.60 787.0 204.60 788.0 204.61 789.0 204.61 790.0 204.61 791.0 204.61 792.0 204.61 793.0 204.61 794.0 204.61 795.0 204.61 796.0 204.61 797.0 204.61 798.0 204.61 799.0 204.61 800.0 204.61 801.0 204.62 802.0 204.62 803.0 204.62 804.0 204.62 805.0 204.62 806.0 204.62 807.0 204.62 808.0 204.62 809.0 204.62 810.0 204.62 811.0 204.62 812.0 204.62 813.0 204.62 814.0 204.63 815.0 204.63 816.0 204.63 817.0 204.63 818.0 204.63 819.0 204.63 820.0 204.63 821.0 204.63 822.0 204.63 823.0 204.63 824.0 204.63 825.0 204.63 826.0 204.63 827.0 204.63 828.0 204.63 829.0 204.63 830.0 204.64 831.0 204.64 832.0 204.64 833.0 204.64 834.0 204.64 835.0 204.64 836.0 204.64 837.0 204.64 838.0 204.64 839.0 204.64 840.0 204.64 841.0 204.64 842.0 204.64 843.0 204.64 844.0 204.64 845.0 204.64 846.0 204.64 847.0 204.64 848.0 204.65 849.0 204.65 850.0 204.65 851.0 204.65 852.0 204.65 853.0 204.65 854.0 204.65 855.0 204.65 856.0 204.65 857.0 204.65 858.0 204.65 859.0 204.65 860.0 204.65 861.0 204.65 862.0 204.65 863.0 204.65 864.0 204.65 865.0 204.65 866.0 204.65 867.0 204.65 868.0 204.65 869.0 204.65 870.0 204.65 871.0 204.66 872.0 204.66 873.0 204.66 874.0 204.66 875.0 204.66 876.0 204.66 877.0 204.66 878.0 204.66 879.0 204.66 880.0 204.66 881.0 204.66 882.0 204.70 883.0 204.70 884.0 204.70 885.0 204.70 886.0 204.70 887.0 204.70 888.0 204.70 889.0 204.70 890.0 204.70 891.0 204.70 892.0 204.70 893.0 204.70 894.0 204.70 895.0 204.70 896.0 204.70 897.0 204.70 898.0 204.70 899.0 204.70 900.0 204.70 901.0 204.70 902.0 204.70 903.0 204.70 904.0 204.70 905.0 204.70 906.0 204.70 907.0 204.70 908.0 204.70 909.0 204.70 910.0 204.70 911.0 204.70 912.0 204.70 913.0 204.70 914.0 204.70 915.0 204.70 916.0 204.70 917.0 204.70 918.0 204.70 919.0 204.70 920.0 204.70 921.0 204.70 922.0 204.70 923.0 204.70 924.0 204.70 925.0 204.70 926.0 204.70 927.0 204.70 928.0 204.70 929.0 204.70 930.0 204.70 931.0 204.70 932.0 204.70 933.0 204.70 934.0 204.70 935.0 204.70 936.0 204.70 937.0 204.70 938.0 204.70 939.0 204.70 940.0 204.70 941.0 204.70 942.0 204.70 943.0 204.70 944.0 204.70 945.0 204.70 946.0 204.70 947.0 204.70 948.0 204.70 949.0 204.70 950.0 204.70 951.0 204.70 952.0 204.70 953.0 204.70 954.0 204.70 955.0 204.70 956.0 204.70 957.0 204.70 958.0 204.70 959.0 204.70 960.0 204.70 961.0 204.70 962.0 204.70 963.0 204.70 964.0 204.70 965.0 204.70 966.0 204.70 967.0 204.70 968.0 204.70 969.0 204.70 970.0 204.70 971.0 204.70 972.0 204.70 973.0 204.70 974.0 204.70 975.0 204.70 976.0 204.70 977.0 204.70 978.0 204.70 979.0 204.70 980.0 204.70 981.0 204.70 982.0 204.70 983.0 204.70 984.0 204.70 985.0 204.70 986.0 204.70 987.0 204.70 988.0 204.70 989.0 204.70 990.0 204.70 991.0 204.70 992.0 204.70 993.0 204.70 994.0 204.70 995.0 204.70 996.0 204.70 997.0 204.70 998.0 204.70 999.0 204.70 1000.0 204.70 1001.0 204.70 1002.0 204.70 1003.0 204.70 1004.0 204.70 1005.0 204.70 1006.0 204.70 1007.0 204.70 1008.0 204.70 1009.0 204.70 1010.0 204.70 1011.0 204.70 1012.0 204.70 1013.0 204.70 1014.0 204.70 1015.0 204.70 1016.0 204.70 1017.0 204.70 1018.0 204.70 1019.0 204.70 1020.0 204.70 1021.0 204.70 1022.0 204.70 1023.0 204.70 1024.0 204.70 1025.0 204.70 1026.0 204.70 1027.0 204.70 1028.0 204.70 1029.0 204.70 1030.0 204.70 1031.0 204.70 1032.0 204.70 1033.0 204.70 1034.0 204.70 1035.0 204.70 1036.0 204.70 1037.0 204.70 1038.0 204.70 1039.0 204.70 1040.0 204.70 1041.0 204.70 1042.0 204.70 1043.0 204.70 1044.0 204.70 1045.0 204.70 1046.0 204.70 1047.0 204.70 1048.0 204.70 1049.0 204.70 1050.0 204.70 1051.0 204.70 1052.0 204.70 1053.0 204.70 1054.0 204.70 1055.0 204.70 1056.0 204.70 1057.0 204.70 1058.0 204.70 1059.0 204.70 1060.0 204.70 1061.0 204.70 1062.0 204.70 1063.0 204.70 1064.0 204.70 1065.0 204.70 1066.0 204.70 1067.0 204.70 1068.0 204.70 1069.0 204.70 1070.0 204.70 1071.0 204.70 1072.0 204.70 1073.0 204.70 1074.0 204.70 1075.0 204.70 1076.0 204.70 1077.0 204.70 1078.0 204.70 1079.0 204.70 1080.0 204.70 1081.0 204.70 1082.0 204.70 1083.0 204.70 1084.0 204.70 1085.0 204.70 1086.0 204.70 1087.0 204.70 1088.0 204.70 1089.0 204.70 1090.0 204.70 1091.0 204.70 1092.0 204.70 1093.0 204.70 1094.0 204.70 1095.0 204.70 1096.0 204.70 1097.0 204.70 1098.0 204.70 1099.0 204.70 1100.0 204.70 1101.0 204.70 1102.0 204.70 1103.0 204.70 1104.0 204.70 1105.0 204.70 1106.0 204.70 1107.0 204.70 1108.0 204.70 1109.0 204.70 1110.0 204.70 1111.0 204.70 1112.0 204.70 1113.0 204.70 1114.0 204.70 1115.0 204.70 1116.0 204.70 1117.0 204.70 1118.0 204.70 1119.0 204.70 1120.0 204.70 1121.0 204.70 1122.0 204.70 1123.0 204.70 1124.0 204.70 1125.0 204.70 1126.0 204.70 1127.0 204.70 1128.0 204.70 1129.0 204.70 1130.0 204.70 1131.0 204.70 1132.0 204.70 1133.0 204.70 1134.0 204.70 1135.0 204.70 1136.0 204.70 1137.0 204.70 1138.0 204.70 1139.0 204.70 1140.0 204.70 1141.0 204.70 1142.0 204.70 1143.0 204.70 1144.0 204.70 1145.0 204.70 1146.0 204.70 1147.0 204.70 1148.0 204.70 1149.0 204.70 1150.0 204.70 1151.0 204.70 1152.0 204.70 1153.0 204.70 1154.0 204.70 1155.0 204.70 1156.0 204.70 1157.0 204.70 1158.0 204.70 1159.0 204.70 1160.0 204.70 1161.0 204.70 1162.0 204.70 1163.0 204.70 1164.0 204.70 1165.0 204.70 1166.0 204.70 1167.0 204.70 1168.0 204.70 1169.0 204.70 1170.0 204.70 1171.0 204.70 1172.0 204.70 1173.0 204.70 1174.0 204.70 1175.0 204.70 1176.0 204.70 1177.0 204.70 1178.0 204.70 1179.0 204.70 1180.0 204.70 1181.0 204.70 1182.0 204.70 1183.0 204.70 1184.0 204.70 1185.0 204.70 1186.0 204.70 1187.0 204.70 1188.0 204.70 1189.0 204.70 1190.0 204.70 1191.0 204.70 1192.0 204.70 1193.0 204.70 1194.0 204.70 1195.0 204.70 1196.0 204.70 1197.0 204.70 1198.0 204.70 1199.0 204.70 1200.0 204.70 1201.0 204.70 1202.0 204.70 1203.0 204.70 1204.0 204.70 1205.0 204.70 1206.0 204.70 1207.0 204.70 1208.0 204.70 1209.0 204.70 1210.0 204.70 1211.0 204.70 1212.0 204.70 1213.0 204.70 1214.0 204.70 1215.0 204.70 1216.0 204.70 1217.0 204.70 1218.0 204.70 1219.0 204.70 1220.0 204.70 1221.0 204.70 1222.0 204.70 1223.0 204.70 1224.0 204.70 1225.0 204.70 1226.0 204.70 1227.0 204.70 1228.0 204.70 1229.0 204.70 1230.0 204.70 1231.0 204.70 1232.0 204.70 1233.0 204.70 1234.0 204.70 1235.0 204.70 1236.0 204.70 1237.0 204.70 1238.0 204.70 1239.0 204.70 1240.0 204.70 1241.0 204.70 1242.0 204.70 1243.0 204.70 1244.0 204.70 1245.0 204.70 1246.0 204.70 1247.0 204.70 1248.0 204.70 1249.0 204.70 1250.0 204.70 1251.0 204.70 1252.0 204.70 1253.0 204.70 1254.0 204.70 1255.0 204.70 1256.0 204.70 1257.0 204.70 1258.0 204.70 1259.0 204.70 1260.0 204.70 1261.0 204.70 1262.0 204.70 1263.0 204.70 1264.0 204.70 1265.0 204.70 1266.0 204.70 1267.0 204.70 1268.0 204.70 1269.0 204.70 1270.0 204.70 1271.0 204.70 1272.0 204.70 1273.0 204.70 1274.0 204.70 1275.0 204.70 1276.0 204.70 1277.0 204.70 1278.0 204.70 1279.0 204.70 1280.0 204.70 1281.0 204.70 1282.0 204.70 1283.0 204.70 1284.0 204.70 1285.0 204.70 1286.0 204.70 1287.0 204.70 1288.0 204.70 1289.0 204.70 1290.0 204.70 1291.0 204.70 1292.0 204.70 1293.0 204.70 1294.0 204.70 1295.0 204.70 1296.0 204.70 1297.0 204.70 1298.0 204.70 1299.0 204.70 1300.0 204.70 1301.0 204.70 1302.0 204.70 1303.0 204.70 1304.0 204.70 1305.0 204.70 1306.0 204.70 1307.0 204.70 1308.0 204.70 1309.0 204.70 1310.0 204.70 1311.0 204.70 1312.0 204.70 1313.0 204.70 1314.0 204.70 1315.0 204.70 1316.0 204.70 1317.0 204.70 1318.0 204.70 1319.0 204.70 1320.0 204.70 1321.0 204.70 1322.0 204.70 1323.0 204.70 1324.0 204.70 1325.0 204.70 1326.0 204.70 1327.0 204.70 1328.0 204.70 1329.0 204.70 1330.0 204.70 1331.0 204.70 1332.0 204.70 1333.0 204.70 1334.0 204.70 1335.0 204.70 1336.0 204.70 1337.0 204.70 1338.0 204.70 1339.0 204.70 1340.0 204.70 1341.0 204.70 1342.0 204.70 1343.0 204.70 1344.0 204.70 1345.0 204.70 1346.0 204.70 1347.0 204.70 1348.0 204.70 1349.0 204.70 1350.0 204.70 1351.0 204.70 1352.0 204.70 1353.0 204.70 1354.0 204.70 1355.0 204.70 1356.0 204.70 1357.0 204.70 1358.0 204.70 1359.0 204.70 1360.0 204.70 1361.0 211.64 1362.0 212.52 1363.0 213.40 1364.0 213.70 1365.0 213.23 1366.0 212.78 1367.0 212.36 1368.0 211.96 1369.0 211.59 1370.0 211.23 1371.0 210.90 1372.0 210.59 1373.0 210.29 1374.0 210.01 1375.0 209.75 1376.0 209.50 1377.0 209.26 1378.0 209.04 1379.0 208.84 1380.0 208.64 1381.0 208.45 1382.0 208.28 1383.0 208.12 1384.0 207.96 1385.0 207.81 1386.0 207.68 1387.0 207.55 1388.0 207.42 1389.0 207.31 1390.0 207.20 1391.0 207.10 1392.0 207.00 1393.0 206.91 1394.0 206.82 1395.0 206.74 1396.0 206.66 1397.0 206.59 1398.0 206.52 1399.0 206.46 1400.0 206.40 1401.0 206.34 1402.0 206.29 1403.0 206.24 1404.0 206.19 1405.0 206.14 1406.0 206.10 1407.0 206.06 1408.0 206.02 1409.0 205.99 1410.0 205.95 1411.0 205.92 1412.0 205.89 1413.0 205.86 1414.0 205.84 1415.0 205.81 1416.0 205.79 1417.0 205.77 1418.0 205.75 1419.0 205.73 1420.0 205.71 1421.0 205.69 1422.0 205.67 1423.0 205.66 1424.0 205.64 1425.0 205.63 1426.0 205.62 1427.0 205.60 1428.0 205.59 1429.0 205.58 1430.0 205.57 1431.0 205.56 1432.0 205.55 1433.0 205.54 1434.0 205.54 1435.0 205.53 1436.0 205.52 1437.0 205.51 1438.0 205.51 1439.0 205.50 1440.0 205.49 1441.0 205.49 1442.0 205.48 1443.0 205.48 1444.0 205.48 1445.0 205.47 1445.0 198.90 1446.0 198.40 1447.0 197.90 1448.0 196.40 1449.0 196.75 1450.0 197.08 1451.0 197.39 1452.0 197.68 1453.0 197.95 1454.0 198.20 1455.0 198.44 1456.0 198.66 1457.0 198.87 1458.0 199.07 1459.0 199.26 1460.0 199.43 1461.0 199.59 1462.0 199.75 1463.0 199.90 1464.0 200.03 1465.0 200.16 1466.0 200.29 1467.0 200.40 1468.0 200.51 1469.0 200.62 1470.0 200.72 1471.0 200.81 1472.0 200.90 1473.0 200.98 1474.0 201.06 1475.0 201.14 1476.0 201.21 1477.0 201.28 1478.0 201.34 1479.0 201.41 1480.0 201.47 1481.0 201.52 1482.0 201.58 1483.0 201.63 1484.0 201.68 1485.0 201.73 1486.0 201.78 1487.0 201.82 1488.0 201.86 1489.0 201.91 1490.0 201.95 1491.0 201.98 1492.0 202.02 1493.0 202.06 1494.0 202.09 1495.0 202.13 1496.0 202.16 1497.0 202.19 1498.0 202.22 1499.0 202.25 1500.0 202.28 1501.0 202.31 1502.0 202.34 1503.0 202.37 1504.0 202.39 1505.0 202.42 1506.0 202.44 1507.0 202.47 1508.0 202.49 1509.0 202.52 1510.0 202.54 1511.0 202.56 1512.0 202.58 1513.0 202.61 1514.0 202.63 1515.0 202.65 1516.0 202.67 1517.0 202.69 1518.0 202.71 1519.0 202.73 1520.0 202.75 1521.0 202.77 1522.0 202.79 1523.0 202.81 1524.0 202.83 1525.0 202.84 1526.0 202.86 1527.0 202.88 1528.0 202.90 1529.0 202.91 1530.0 202.93 1531.0 202.95 1532.0 202.96 1533.0 202.98 1534.0 203.00 1535.0 203.01 1536.0 203.03 1537.0 203.04 1538.0 203.06 1539.0 203.08 1540.0 203.09 1541.0 203.11 1542.0 203.12 1543.0 203.13 1544.0 203.15 1545.0 203.16 1546.0 203.18 1547.0 203.19 1548.0 203.21 1549.0 203.22 1550.0 203.23 1551.0 203.25 1552.0 203.26 1553.0 203.27 1554.0 203.29 1555.0 203.30 1556.0 203.31 1557.0 203.32 1558.0 203.34 1559.0 203.35 1560.0 203.36 1561.0 203.37 1562.0 203.39 1563.0 203.40 1564.0 203.41 1565.0 203.42 1566.0 203.43 1567.0 203.44 1568.0 203.46 1569.0 203.47 1570.0 203.48 1571.0 203.49 1572.0 203.50 1573.0 203.51 1574.0 203.52 1575.0 203.53 1576.0 203.54 1577.0 203.55 1578.0 203.56 1579.0 203.58 1580.0 203.59 1581.0 203.60 1582.0 203.61 1583.0 203.62 1584.0 203.63 1585.0 203.63 1586.0 203.64 1587.0 203.65 1588.0 203.66 1589.0 203.67 1590.0 203.68 1591.0 203.69 1592.0 203.70 1593.0 203.71 1594.0 203.72 1595.0 203.73 1596.0 203.74 1597.0 203.75 1598.0 203.75 1599.0 203.76 1600.0 203.77 1601.0 203.78 1602.0 203.79 1603.0 203.80 1604.0 203.80 1605.0 203.81 1606.0 203.82 1607.0 203.83 1608.0 203.84 1609.0 203.84 1610.0 203.85 1611.0 203.86 1612.0 203.87 1613.0 203.87 1614.0 203.88 1615.0 203.89 1616.0 203.90 1617.0 203.90 1618.0 203.91 1619.0 203.92 1620.0 203.93 1621.0 203.93 1622.0 203.94 1623.0 203.95 1624.0 203.95 1625.0 203.96 1626.0 203.97 1627.0 203.97 1628.0 203.98 1629.0 203.99 1630.0 203.99 1631.0 204.00 1632.0 204.01 1633.0 204.01 1634.0 204.02 1635.0 204.02 1636.0 204.03 1637.0 204.04 1638.0 204.04 1639.0 204.05 1640.0 204.05 1641.0 204.06 1642.0 204.07 1643.0 204.07 1644.0 204.08 1645.0 204.08 1646.0 204.09 1647.0 204.09 1648.0 204.10 1649.0 204.10 1650.0 204.11 1651.0 204.12 1652.0 204.12 1653.0 204.13 1654.0 204.13 1655.0 204.14 1656.0 204.14 1657.0 204.15 1658.0 204.15 1659.0 204.16 1660.0 204.16 1661.0 204.17 1662.0 204.17 1663.0 204.18 1664.0 204.18 1665.0 204.19 1666.0 204.19 1667.0 204.19 1668.0 204.20 1669.0 204.20 1670.0 204.21 1671.0 204.21 1672.0 204.22 1673.0 204.22 1674.0 204.23 1675.0 204.23 1676.0 204.23 1677.0 204.24 1678.0 204.24 1679.0 204.25 1680.0 204.25 1681.0 204.26 1682.0 204.26 1683.0 204.26 1684.0 204.27 1685.0 204.27 1686.0 204.27 1687.0 204.28 1688.0 204.28 1689.0 204.29 1690.0 204.29 1691.0 204.29 1692.0 204.30 1693.0 204.30 1694.0 204.30 1695.0 204.31 1696.0 204.31 1697.0 204.32 1698.0 204.32 1699.0 204.32 1700.0 204.33 1701.0 204.33 1702.0 204.33 1703.0 204.34 1704.0 204.34 1705.0 204.34 1706.0 204.35 1707.0 204.35 1708.0 204.35 1709.0 204.36 1710.0 204.36 1711.0 204.36 1712.0 204.36" fill="none" stroke="#f8f22a" stroke-width="2.1" stroke-linejoin="round"/>
<path d="M562.5 204.0v-1.5M94.1 204.7v-1.5M110.6 204.7v-1.2M749.2 204.6v-1.4M948.8 204.7v-1.9M222.5 204.7v-1.7M1003.1 204.7v-1.7M686.4 204.5v-1.2M1471.4 200.8v1.5M931.2 204.7v1.6M1171.4 204.7v-1.7M1098.2 204.7v1.3M1222.6 204.7v-1.7M855.9 204.6v1.8M803.5 204.6v1.5M434.3 202.2v-1.8M427.0 201.9v1.6M1499.7 202.3v1.4M1678.3 204.2v-1.6M292.4 204.7v1.3M843.2 204.6v-2.0M144.0 204.7v1.5M607.3 204.2v1.7M787.5 204.6v-2.0M818.0 204.6v-1.2M1204.5 204.7v1.4M667.8 204.4v1.2M796.9 204.6v-1.7M851.3 204.6v-1.8M231.9 204.7v-1.5M1570.6 203.5v1.3M775.6 204.6v1.9M1404.8 206.2v1.8M1689.0 204.3v2.0M268.6 204.7v-1.3M1131.5 204.7v-1.6M1013.5 204.7v1.4M259.6 204.7v1.7M553.6 203.9v-1.8M888.3 204.7v-1.6M1492.7 202.0v1.5M682.0 204.5v1.7M117.8 204.7v-2.0M761.1 204.6v-1.5M101.4 204.7v-1.7M924.3 204.7v1.7M131.5 204.7v-1.7M264.5 204.7v2.0M1035.9 204.7v1.3M1455.2 198.5v1.6M542.1 203.8v-1.3M594.5 204.1v1.6M1188.5 204.7v-1.4M1630.4 204.0v1.3M935.4 204.7v-1.8M518.8 203.6v-1.8M455.9 202.7v1.9M616.7 204.2v-1.6M1336.4 204.7v1.7M1054.5 204.7v-1.8M1403.2 206.2v-1.4M849.7 204.6v-2.0M1355.2 204.7v1.4M1189.3 204.7v1.6M1604.9 203.8v2.0M631.9 204.3v-1.3M811.1 204.6v1.4M1072.9 204.7v-1.6M1122.1 204.7v-1.9M215.8 204.7v1.8M1287.2 204.7v1.9M749.7 204.6v1.3M1620.5 203.9v1.6M1275.7 204.7v-1.8M301.0 213.7v-1.2M1016.4 204.7v1.8M260.5 204.7v1.7M607.7 204.2v-1.2M1370.9 210.9v-1.6M1599.2 203.8v2.0M343.2 206.1v-1.2M373.7 205.5v-1.8M566.2 204.0v1.9M115.5 204.7v1.9M1138.2 204.7v1.9M1504.9 202.4v-1.6M902.0 204.7v-1.9M1332.1 204.7v-1.8M266.7 204.7v-1.6M1244.8 204.7v-1.5M893.2 204.7v1.8M192.4 204.7v-1.4M482.8 203.2v-1.6M966.9 204.7v-1.6M1053.3 204.7v-1.8M781.0 204.6v1.6M433.0 202.2v1.9M1529.7 202.9v-1.9M245.1 204.7v-1.5M549.2 203.9v-1.5M373.6 205.5v1.8M1536.9 203.0v-2.0M1105.9 204.7v1.3M1512.8 202.6v1.4M1631.3 204.0v1.9M288.8 204.7v-1.3M745.6 204.6v1.5M344.8 206.0v1.3M634.1 204.3v1.6M760.8 204.6v-1.5M891.6 204.7v1.6M121.3 204.7v-2.0M190.1 204.7v1.4M1552.0 203.3v-1.4M232.2 204.7v1.9M1161.2 204.7v1.5M924.2 204.7v1.8M164.1 204.7v-1.8M323.7 207.6v-1.4M40.6 204.7v-1.8M154.4 204.7v-1.3M1478.7 201.4v1.2M1702.3 204.3v1.9M467.4 202.9v-1.2M1218.2 204.7v-2.0M457.2 202.8v-1.4M542.4 203.8v1.6M362.0 205.6v1.6M314.4 209.2v1.8M1702.6 204.3v-1.2" stroke="#f8f22a" stroke-width="1" fill="none"/>
<path d="M12 546 L297.5 546 L297.5 446 L298.5 446 L298.5 385 L299.1 396 L299.9 408.5 C305.5 405 309.5 404.4 317.5 404.4 L382.5 404.4 L382.5 507 L383.5 507 L383.5 566.5 L384.5 550 L386.0 542.5 L388.0 546 L1360.5 546 L1360.5 446 L1361.5 446 L1361.5 385 L1362.1 396 L1362.9 408.5 C1368.5 405 1372.5 404.4 1380.5 404.4 L1445.5 404.4 L1445.5 507 L1446.5 507 L1446.5 566.5 L1447.5 550 L1449.0 542.5 L1451.0 546 L1712 546" fill="none" stroke="#22c3d0" stroke-width="1.25" stroke-linejoin="round"/>
<path d="M317.5 404.4 L382.5 404.4 M299.9 408.5 C305.5 405 309.5 404.4 317.5 404.4 M1380.5 404.4 L1445.5 404.4 M1362.9 408.5 C1368.5 405 1372.5 404.4 1380.5 404.4 M12 546 L297.5 546 M388 546 L1360 546 M1450.5 546 L1712 546" fill="none" stroke="#22c3d0" stroke-width="2"/>
<rect x="12" y="448.5" width="23" height="1.5" fill="#22c3d0"/>
<path d="M1258.2 546v-1.6M429.7 546v1.3M746.7 546v1.6M1522.8 546v1.8M1682.1 546v1.4M1511.3 546v-1.5M602.8 546v-1.9M36.2 546v1.5M106.2 546v1.9M1151.9 546v1.7M1189.6 546v-1.6M279.8 546v1.2M631.0 546v2.0M942.0 546v-1.2M1512.1 546v-1.5M13.8 546v1.3M486.2 546v-1.4M1331.6 546v-1.4M164.6 546v1.7M681.8 546v1.4M407.8 546v-1.7M1229.2 546v1.8M1237.2 546v1.3M1243.1 546v-1.2M1528.3 546v1.8M248.8 546v-1.9M1004.9 546v-1.3M83.2 546v2.0M652.3 546v1.6M1079.2 546v-1.6M17.6 546v-1.8M867.1 546v-1.7M124.3 546v1.4M138.6 546v1.4M1298.0 546v-1.8M1670.7 546v1.9M142.5 546v1.8M1060.9 546v-1.3M262.6 546v1.7M1189.9 546v-1.2M115.1 546v2.0M181.2 546v-1.7M506.5 546v1.6M804.8 546v-2.0M945.4 546v2.0M1603.6 546v-1.4M142.0 546v2.0M669.6 546v-1.3M165.5 546v2.0M237.4 546v1.9M1207.7 546v-1.6M1501.4 546v1.2M18.1 546v1.7M701.2 546v-1.5M651.4 546v-1.9M15.0 546v1.9M216.1 546v-1.8M1544.7 546v1.4M122.5 546v2.0M1013.6 546v1.9M1296.6 546v-1.4M99.7 546v1.7M265.2 546v1.5M548.5 546v1.8M739.2 546v-1.8M1084.5 546v-1.8M96.1 546v1.6M1291.5 546v1.6M1562.2 546v-1.3M717.3 546v1.4M1268.4 546v1.5M417.7 546v1.6M682.4 546v-1.7M139.8 546v1.6M782.1 546v2.0M776.9 546v-1.6M426.9 546v-1.5M166.9 546v-1.5M46.1 546v1.5M1279.9 546v-1.5M586.9 546v-1.6M988.3 546v1.3M867.8 546v-1.3M1536.5 546v1.5M770.0 546v1.9M372.1 404.4v-1.3M339.0 404.4v2.2M343.7 404.4v-1.6M376.1 404.4v2.2M325.9 404.4v-1.4M318.8 404.4v-2.1M360.9 404.4v1.3M365.0 404.4v-2.0M324.7 404.4v-1.8M330.0 404.4v-1.8M346.6 404.4v1.9M315.8 404.4v-1.5M377.3 404.4v-1.6M324.0 404.4v-1.2M329.8 404.4v1.5M330.9 404.4v-1.7M324.9 404.4v-1.2M338.0 404.4v1.3M321.9 404.4v1.3M324.4 404.4v2.1M324.3 404.4v-1.9M360.7 404.4v1.9M322.2 404.4v1.9M344.9 404.4v-1.7M322.3 404.4v-1.4M1386.9 404.4v1.3M1416.6 404.4v-2.1M1406.4 404.4v-2.1M1381.3 404.4v1.3M1372.2 404.4v-1.6M1423.0 404.4v-1.6M1437.0 404.4v1.9M1444.3 404.4v-1.5M1384.2 404.4v1.2M1419.7 404.4v2.0M1443.4 404.4v1.4M1370.7 404.4v1.3M1401.6 404.4v-1.8M1426.7 404.4v1.6M1431.3 404.4v1.3M1422.7 404.4v-1.6M1438.5 404.4v-1.5M1425.1 404.4v1.2M1400.9 404.4v1.2M1373.1 404.4v-2.0M1375.1 404.4v-1.9M1437.0 404.4v1.6M1395.3 404.4v-1.5M1423.5 404.4v2.1M1392.5 404.4v-1.2" stroke="#22c3d0" stroke-width="1" fill="none"/>
<path d="M12 754.8 L297.5 754.8 L298.5 759.5 L300.5 757 L309.5 755.5 L383.0 755 L384.0 749.8 L386.5 754.2 L1360.5 754.8 L1361.5 759.5 L1363.5 757 L1372.5 755.5 L1446.0 755 L1447.0 749.8 L1449.5 754.2 L1712 754.8" fill="none" stroke="#f23a58" stroke-width="2.1" stroke-linejoin="round"/>
<path d="M630.2 754.8v1.9M957.6 754.8v2.0M1589.9 754.8v1.4M1001.1 754.8v-2.0M1342.7 754.8v-1.8M762.9 754.8v1.7M1406.8 754.8v-1.8M853.1 754.8v-1.5M391.4 754.8v-1.7M1069.0 754.8v-2.2M1547.5 754.8v-1.5M418.7 754.8v-1.7M1695.7 754.8v1.5M487.7 754.8v1.9M1251.8 754.8v-2.0M715.0 754.8v1.8M826.6 754.8v1.5M649.4 754.8v-1.5M697.3 754.8v-1.6M859.3 754.8v-1.8M626.7 754.8v-1.9M1699.2 754.8v-1.3M1546.5 754.8v-2.1M1591.1 754.8v-2.1M628.8 754.8v-1.5M1673.8 754.8v-2.1M825.6 754.8v-1.7M667.0 754.8v-1.4M1141.8 754.8v1.5M820.6 754.8v-1.3M1711.8 754.8v-1.8M1220.1 754.8v-2.0M1456.2 754.8v1.9M561.4 754.8v1.4M344.4 754.8v1.8M389.3 754.8v-2.0M1237.6 754.8v-1.9M428.7 754.8v-1.7M682.9 754.8v1.9M890.0 754.8v-1.6M1099.9 754.8v1.7M325.7 754.8v1.9M851.7 754.8v1.5M308.3 754.8v-1.7M1458.4 754.8v1.8M815.0 754.8v-1.4M373.0 754.8v-1.9M1584.6 754.8v-1.8M1609.2 754.8v-1.4M700.0 754.8v-2.1M453.6 754.8v2.0M1418.5 754.8v-1.6M1482.3 754.8v-2.2M981.6 754.8v-1.8M1198.6 754.8v-2.1M1175.9 754.8v-1.9M1509.5 754.8v1.9M576.9 754.8v1.5M608.0 754.8v2.1M520.9 754.8v1.4M648.8 754.8v-1.3M1094.0 754.8v-1.9M757.8 754.8v1.8M1076.7 754.8v1.9M735.2 754.8v-1.7M1230.3 754.8v1.8M552.4 754.8v-1.9M991.2 754.8v-1.7M1173.4 754.8v2.1M1444.5 754.8v1.4M481.4 754.8v1.6M1432.8 754.8v-1.3M483.9 754.8v2.0M1022.2 754.8v-2.0M1563.6 754.8v-1.3M393.7 754.8v-1.5M1686.2 754.8v1.6M1445.1 754.8v-1.9M1318.2 754.8v-1.4M795.5 754.8v1.4M1565.9 754.8v2.1M944.4 754.8v1.8M1598.9 754.8v-1.8M1169.6 754.8v-1.6M352.0 754.8v-1.7M1198.8 754.8v1.9M1564.3 754.8v-2.0M673.2 754.8v-1.9M808.0 754.8v1.8M1119.0 754.8v-1.5M1056.4 754.8v2.0M824.5 754.8v2.2M1115.2 754.8v1.6M414.9 754.8v-1.5M1350.0 754.8v-1.6M1028.7 754.8v1.9M1689.5 754.8v2.0M1354.9 754.8v-1.4M1169.9 754.8v1.7M814.1 754.8v-1.4M620.9 754.8v-1.3M303.7 754.8v1.6M1038.6 754.8v-1.7M725.2 754.8v-1.5M1181.0 754.8v1.4M319.9 754.8v-1.9M936.6 754.8v-1.9M1530.3 754.8v1.7M673.1 754.8v-1.4M1459.1 754.8v1.8M1116.8 754.8v1.5M1575.7 754.8v-1.4M335.6 754.8v-1.5M382.4 754.8v-1.3M1077.9 754.8v-1.4M581.7 754.8v2.0M546.6 754.8v1.4M1183.9 754.8v1.9M309.0 754.8v2.0M957.0 754.8v1.5M1707.2 754.8v1.5M354.8 754.8v2.1M1606.4 754.8v1.9M675.6 754.8v1.9M1595.2 754.8v1.6M1611.1 754.8v-1.4M1016.5 754.8v-1.5M633.4 754.8v-2.2M1353.6 754.8v1.5M848.9 754.8v-1.6M1502.9 754.8v1.7M1049.2 754.8v-2.1M917.3 754.8v-1.8M734.5 754.8v-1.7M1126.5 754.8v-1.4M338.0 754.8v-1.9M528.5 754.8v-1.9M343.6 754.8v-1.9M1195.0 754.8v-2.0M392.9 754.8v1.5M1647.9 754.8v-2.1M1367.2 754.8v1.4M590.5 754.8v-1.3M1640.3 754.8v-2.0M1191.7 754.8v1.7M487.3 754.8v-1.6M775.2 754.8v1.3M662.5 754.8v1.3M1372.9 754.8v2.0M1150.0 754.8v2.1M1173.0 754.8v-2.0M344.1 754.8v-1.6M1295.0 754.8v-1.9M1468.9 754.8v1.5M301.8 754.8v-1.6M1359.7 754.8v-1.3M993.0 754.8v1.9M1465.4 754.8v1.8M1651.6 754.8v1.8M524.4 754.8v-2.1M626.9 754.8v-1.4M1198.8 754.8v-1.7M1699.5 754.8v-1.9M802.1 754.8v2.1M1559.3 754.8v-1.7M1212.0 754.8v1.5M671.6 754.8v-1.6M1548.2 754.8v-2.1M479.2 754.8v-1.6M761.2 754.8v-2.1M935.8 754.8v1.5M919.6 754.8v1.8M478.0 754.8v1.9M1283.5 754.8v-1.5M1365.7 754.8v-2.0M1676.4 754.8v1.8M792.3 754.8v-1.6M567.3 754.8v-1.4M1229.0 754.8v-1.6M1689.2 754.8v2.0M914.1 754.8v-1.4M1586.9 754.8v1.5M848.3 754.8v-1.3M1506.3 754.8v1.9M1006.7 754.8v1.7M500.2 754.8v1.3M642.1 754.8v1.9M1129.4 754.8v2.1M1243.1 754.8v-1.9M1205.9 754.8v1.7M666.8 754.8v-2.1M642.3 754.8v1.9M1189.0 754.8v2.1M981.6 754.8v-1.9M878.0 754.8v-2.1M763.2 754.8v-1.6M991.7 754.8v-1.3M1067.2 754.8v-1.9M1643.3 754.8v-1.8M442.7 754.8v1.8M1312.8 754.8v-1.9M1470.5 754.8v1.7M1638.5 754.8v-2.2M559.5 754.8v-2.0M1167.0 754.8v-1.5M839.2 754.8v-1.3M891.0 754.8v1.9M1252.9 754.8v1.4M728.5 754.8v2.1M1044.2 754.8v-2.2M1656.7 754.8v1.5M482.6 754.8v-2.0M1195.6 754.8v1.9M1317.6 754.8v-1.6M1202.0 754.8v1.7M715.6 754.8v-2.0M962.8 754.8v-1.5M831.1 754.8v2.2M1258.5 754.8v1.3M1319.2 754.8v1.6M1224.0 754.8v1.7M905.0 754.8v-1.9M811.8 754.8v2.1M380.6 754.8v2.0M498.2 754.8v1.9M321.2 754.8v-1.5M401.7 754.8v1.5M443.3 754.8v-2.1M562.2 754.8v1.6M515.6 754.8v2.0M537.1 754.8v-1.9M1562.2 754.8v1.5M1278.2 754.8v-2.0M919.3 754.8v-1.8M673.5 754.8v-2.0M968.2 754.8v-1.7M1578.5 754.8v1.5M532.4 754.8v-1.4M752.8 754.8v1.9M1486.9 754.8v1.7M1711.9 754.8v-1.5M808.8 754.8v-1.3M364.8 754.8v2.0M432.7 754.8v1.7M1567.4 754.8v-1.5M886.8 754.8v-1.6M1516.7 754.8v1.6M1399.3 754.8v-1.6M782.8 754.8v1.8M1467.3 754.8v1.6M997.1 754.8v1.8M683.6 754.8v2.2M1224.2 754.8v-1.6M747.7 754.8v1.4M1673.5 754.8v-2.0M356.6 754.8v1.8M370.2 754.8v1.4M365.5 754.8v1.8M1229.1 754.8v1.9M1185.1 754.8v-1.5M1241.8 754.8v1.9M545.6 754.8v-2.1M895.3 754.8v-2.1M1225.9 754.8v2.1M495.8 754.8v1.8M664.3 754.8v1.5M348.3 754.8v-1.7M1206.2 754.8v-1.7M1037.3 754.8v-2.0M894.6 754.8v1.7M320.0 754.8v1.8M1702.3 754.8v-1.7M882.3 754.8v-1.4M966.7 754.8v-1.9M902.9 754.8v-1.9M471.8 754.8v-1.5M471.3 754.8v1.3M1315.7 754.8v-1.7M1350.8 754.8v-1.6M1355.1 754.8v-2.0M419.0 754.8v1.7M1616.5 754.8v2.1M374.4 754.8v-1.3M320.8 754.8v-1.7M741.2 754.8v-2.2M1478.9 754.8v-1.6M1639.6 754.8v1.7M535.1 754.8v-1.6M1210.6 754.8v1.7M1398.7 754.8v2.2M1407.9 754.8v1.6M385.6 754.8v2.1M1324.7 754.8v-2.0M1148.8 754.8v1.8M1678.7 754.8v-1.6M1267.0 754.8v-2.0M700.0 754.8v-1.6M678.4 754.8v-1.8M1452.2 754.8v-1.6M498.6 754.8v-1.5M1501.9 754.8v1.6M420.1 754.8v2.0M583.0 754.8v-1.6M381.3 754.8v1.7M591.7 754.8v1.8M313.2 754.8v1.7M423.8 754.8v2.0M628.8 754.8v2.1M1036.9 754.8v1.8M585.0 754.8v-1.5M555.1 754.8v1.6M1097.0 754.8v2.0M1510.0 754.8v-1.3M1708.0 754.8v2.1M824.8 754.8v2.0M520.5 754.8v-1.6M1033.5 754.8v-1.4M589.0 754.8v1.8M601.6 754.8v1.7M1636.5 754.8v-1.5M353.5 754.8v-2.2M834.0 754.8v-1.3M1087.0 754.8v1.7M1494.0 754.8v-2.1M1203.5 754.8v-1.9M427.0 754.8v1.8M1204.6 754.8v1.5M1499.8 754.8v2.2M1700.3 754.8v-1.5M1629.7 754.8v1.4M1080.6 754.8v-2.1M366.4 754.8v1.4M504.5 754.8v-2.1M1255.8 754.8v1.8M923.1 754.8v-1.7M824.8 754.8v1.4M979.6 754.8v-1.7M1440.3 754.8v-1.7M1588.6 754.8v-1.4M1476.0 754.8v-2.1M1523.9 754.8v-2.0M1652.6 754.8v2.1M1187.3 754.8v2.2M755.5 754.8v-1.7M1187.0 754.8v-1.6M1339.3 754.8v-1.9M1081.4 754.8v-1.7M510.9 754.8v1.7M519.8 754.8v1.8M718.7 754.8v-1.5M454.2 754.8v2.1M461.2 754.8v-1.9M1412.1 754.8v-1.8M1479.4 754.8v-1.5M584.7 754.8v1.7M669.3 754.8v-2.1M437.8 754.8v1.7M529.0 754.8v1.4M1203.4 754.8v2.0M781.4 754.8v-1.7M1414.9 754.8v1.5M914.6 754.8v1.5M1106.7 754.8v-2.1M1036.6 754.8v-1.9M577.8 754.8v-2.0M1555.7 754.8v2.0M547.5 754.8v-1.9M1299.4 754.8v-1.8M585.6 754.8v-1.9M1033.6 754.8v-1.8M790.9 754.8v2.1M1520.7 754.8v1.4M878.2 754.8v1.4M1239.7 754.8v-1.5M1474.3 754.8v1.3M1291.6 754.8v-1.6M1616.2 754.8v-1.4M1309.0 754.8v2.0M1525.7 754.8v-1.6M452.1 754.8v1.7M336.2 754.8v-1.3M1666.0 754.8v-1.9M537.0 754.8v1.5M1453.8 754.8v-1.3M1608.0 754.8v-1.5M1482.3 754.8v1.8M1292.1 754.8v-1.6M432.6 754.8v-1.3M473.7 754.8v1.8M1375.3 754.8v-1.4M872.8 754.8v-1.8M621.1 754.8v-1.4M1108.9 754.8v1.4M1466.3 754.8v1.9M1143.0 754.8v-1.7M1629.1 754.8v1.6M639.4 754.8v1.9M1490.4 754.8v2.0M1496.9 754.8v-1.6M507.0 754.8v1.5M896.1 754.8v-1.6M1049.5 754.8v-1.6M583.5 754.8v-1.5M894.1 754.8v2.0M1623.0 754.8v-2.0M1548.7 754.8v-1.3M1205.9 754.8v2.1M1180.3 754.8v-1.9M653.8 754.8v-1.7M1642.6 754.8v1.4M790.7 754.8v-1.4M1139.1 754.8v1.4M1133.4 754.8v-1.7M1022.4 754.8v2.1M1115.2 754.8v1.5M424.0 754.8v2.1M1161.3 754.8v-1.9M584.1 754.8v1.7M1073.8 754.8v1.7M738.4 754.8v-1.6" stroke="#f23a58" stroke-width="1" fill="none"/>
<g stroke="#f5a030" stroke-width="1.5"><line x1="1445.5" y1="733" x2="1445.5" y2="741"/><line x1="1445.5" y1="745" x2="1445.5" y2="765"/><line x1="1430" y1="749.5" x2="1438" y2="749.5"/><line x1="1442" y1="749.5" x2="1453" y2="749.5"/><line x1="1456" y1="749.5" x2="1462" y2="749.5"/></g>
</svg>
<svg class="a" style="left:14px;top:324px" width="40" height="28" viewBox="14 324 40 28">
<path d="M19 326 H38.5 L50 337.8 L38.5 349.7 H19 Q16 349.7 16 346.7 V329 Q16 326 19 326Z" fill="#f8ee3a"/></svg>
<div class="a" style="left:24.5px;top:330px;font-size:12px;color:#111;letter-spacing:2.2px">C1</div>
<div class="a y" style="left:63px;top:326px;font-size:18.5px">12V</div>
<svg class="a" style="left:13px;top:661px" width="42" height="16" viewBox="13 661 42 16">
<path d="M15.5 677 V666 Q15.5 663.5 18 663.5 H38 L51 677" fill="#061618" stroke="#22c3d0" stroke-width="1.4"/></svg>
<div class="a c" style="left:24.5px;top:666px;height:10px;overflow:hidden;font-size:12.5px;letter-spacing:2.2px;line-height:18px">C2</div>
<div class="a c" style="left:63px;top:649px;font-size:18.5px">12A</div>
<svg class="a" style="left:13px;top:887px" width="42" height="30" viewBox="13 887 42 30">
<path d="M18 889.5 H38.5 L50.8 902 L38.5 914.3 H18 Q15.3 914.3 15.3 911.6 V892.2 Q15.3 889.5 18 889.5Z" fill="#1a0c0e" stroke="#e04a64" stroke-width="1.4"/></svg>
<div class="a" style="left:24.5px;top:894px;font-size:12px;color:#f4f4f4;letter-spacing:2.2px">C3</div>
<div class="a r" style="left:63px;top:890px;font-size:18.5px;transform:scaleX(0.86);transform-origin:0 50%">PG</div>
<div class="a" style="left:16px;top:185.5px;width:48px;height:39px;border-radius:5px;background:rgba(60,60,60,0.75)"></div>
<div class="a" style="left:17.5px;top:185.7px;width:18.5px;height:19px;border-radius:50%;background:#2a86d6;color:#eaf2fa;font-size:14.5px;text-align:center;line-height:20px">A</div>
<div class="a" style="left:17.5px;top:205.3px;width:18.5px;height:19px;border-radius:50%;background:#2a86d6;color:#eaf2fa;font-size:14.5px;text-align:center;line-height:20px">B</div>
<div class="a" style="left:40px;top:185.7px;width:25.5px;height:18.5px;border-radius:4px;background:#d9d33a;color:#222;font-size:14.5px;text-align:center;line-height:19px;letter-spacing:-0.6px">C1</div>
<div class="a" style="left:39.5px;top:205.3px;width:25.5px;height:19px;border-radius:4px;background:#d9d33a;color:#222;font-size:14.5px;text-align:center;line-height:19px;letter-spacing:-0.6px">C1</div>
<div class="a" style="left:1721px;top:499px;width:4.5px;height:4.5px;border-radius:50%;background:#cfcfcf"></div>
<div class="a" style="left:1721px;top:507.5px;width:4.5px;height:4.5px;border-radius:50%;background:#cfcfcf"></div>
<div class="a" style="left:1721px;top:516px;width:4.5px;height:4.5px;border-radius:50%;background:#cfcfcf"></div>

<!-- magnifier triangle -->
<svg class="a" style="left:1668px;top:72px;z-index:3" width="40" height="40" viewBox="1668 72 40 40">
<path d="M1671.3 75 L1702 75 Q1705 75 1705 78 L1705 108.7 Z" fill="#535353"/>
<circle cx="1698" cy="81.3" r="3.9" fill="none" stroke="#b8b8b8" stroke-width="1.5"/>
<line x1="1695" y1="84.4" x2="1689.3" y2="90.1" stroke="#b8b8b8" stroke-width="2.6" stroke-linecap="round"/>
</svg>

<!-- T marker pane -->
<svg class="a" style="left:1358px;top:66px" width="30" height="44" viewBox="1358 66 30 44">
<path d="M1362 68 L1382 68 L1372 77 Z" fill="#f39321"/>
<path d="M1363 78.8 h18 v19.1 h-6 l-3 6.6 l-3 -6.6 h-6 z" fill="#000" stroke="#f39321" stroke-width="2"/>
<path d="M1367.2 82.8 h9 v2 h-3.4 v9.1 h-2.2 v-9.1 h-3.4z" fill="#f39321"/>
</svg>

<!-- trigger level arrow -->
<svg class="a" style="left:1688px;top:195px" width="26" height="26" viewBox="1688 195 26 26">
<path d="M1690.8 208.7 L1703 198.3 L1703 218.7 Z" fill="#f7ee3c"/>
<rect x="1702" y="207.2" width="10" height="3.2" fill="#f7ee3c"/>
</svg>


<!-- right panel -->
<div class="a panel"></div>
<div class="a" style="left:1731px;top:36px;width:180px;text-align:center;font-size:15px;font-weight:bold;color:#f0f0f0">Add New...</div>
<div class="a btn" style="left:1740px;top:60px">Cursors</div>
<div class="a btn" style="left:1826px;top:60px">Callout</div>
<div class="a btn" style="left:1740px;top:115px">Measure</div>
<div class="a btn" style="left:1826px;top:115px">Search</div>
<div class="a btn" style="left:1740px;top:169px">Results<br>Table</div>
<div class="a btn" style="left:1826px;top:169px">Plot</div>
<div class="a sep" style="top:221px"></div>
<div class="a btn" style="left:1740px;top:228px">
<svg width="30" height="30" viewBox="0 0 30 30"><rect x="3" y="3" width="22" height="20" fill="none" stroke="#c0c0c0" stroke-width="2" stroke-dasharray="3 2.5"/><circle cx="14" cy="12" r="5" fill="none" stroke="#c0c0c0" stroke-width="2"/><line x1="10.5" y1="15.5" x2="5" y2="21" stroke="#c0c0c0" stroke-width="2.6" stroke-linecap="round"/><path d="M19 19 L26 23 L23 24 L25 27 L24 28 L22 25 L20 27 Z" fill="#c0c0c0"/></svg></div>
<div class="a btn" style="left:1826px;top:228px">More...</div>
<div class="a sep" style="top:282px"></div>

<!-- cursors readout -->
<div class="a box" style="top:293px;height:84px;background:#c9c9c9">
 <div style="height:20px;background:#000;color:#eee;font-size:14.5px;padding-left:5px;line-height:19px;border-bottom:1.5px solid #a8a8a8">Cursors</div>
 <div style="position:absolute;left:7px;top:24px;width:16px;height:16px;border-radius:50%;background:#3f8ad8;color:#fff;font-size:12px;font-weight:bold;text-align:center;line-height:16px">A</div>
 <div style="position:absolute;left:7px;top:43px;width:16px;height:16px;border-radius:50%;background:#3f8ad8;color:#fff;font-size:12px;font-weight:bold;text-align:center;line-height:16px">B</div>
 <div style="position:absolute;left:37px;top:23px;font-size:14.5px">v: 12.354 V</div>
 <div style="position:absolute;left:37px;top:42px;font-size:14.5px">v: 12.041 V</div>
 <div style="position:absolute;left:0;top:62px;width:173px;height:1.5px;background:#111"></div>
 <div style="position:absolute;left:27px;top:65px;font-size:14.5px">&Delta;v: 313.531 mV</div>
</div>

<div class="a box" style="top:381.5px;height:60px">
 <div class="mh">Meas 1<div class="badge" style="background:#f2e82a;color:#111">1</div></div>
 <div class="mb">Maximum<br>&micro;': 12.34 V</div></div>
<div class="a box" style="top:446.5px;height:60px">
 <div class="mh">Meas 2<div class="badge" style="background:#f2e82a;color:#111">1</div></div>
 <div class="mb">Minimum<br>&micro;': 12.02 V</div></div>
<div class="a box" style="top:511.5px;height:60px">
 <div class="mh">Meas 3<div class="badge" style="background:#22c8d4;color:#111">2</div></div>
 <div class="mb">Maximum<br>&micro;': 192.4 A</div></div>
<div class="a box" style="top:576.5px;height:60px">
 <div class="mh">Meas 4<div class="badge" style="background:#22c8d4;color:#111">2</div></div>
 <div class="mb">Minimum<br>&micro;': 71.97 A</div></div>
<div class="a box" style="top:641.5px;height:60px">
 <div class="mh">Meas 5<div class="badge" style="background:#e2405a;color:#fff">3</div></div>
 <div class="mb">Maximum<br>&micro;': 5.030 V</div></div>

<!-- mouse pointer -->
<svg class="a" style="left:1770px;top:780px" width="34" height="40" viewBox="1770 780 34 40">
<path d="M1779.4 786.8 L1779.4 808.2 L1785 806.6 L1788.4 812.2 L1791 811.2 L1790.2 804.6 L1794.8 802.2 Z" fill="#1c1c1c" stroke="#ececec" stroke-width="1.5" stroke-linejoin="round"/>
</svg>

<!-- bottom bar -->
<div class="a" style="left:9px;top:985px;width:1902px;height:85px;background:#2b2b2b"></div>
<div class="a chb" style="left:12px"><div class="chh" style="background:#fdf23a;color:#111">Ch 1</div>
<div class="chl">500 mV/div<br>1 M&Omega;<br>20 MHz<span class="bw" style="top:39px;font-size:10px;line-height:12px">B<span style="font-size:9px;position:relative;top:3px">w</span></span></div></div>
<div class="a chb" style="left:125px"><div class="chh" style="background:#1f3e40;color:#28c4cf">Ch 2</div>
<div class="chl">20 A/div<br>50 &Omega;<br>20 MHz<span class="bw" style="top:39px;font-size:10px;line-height:12px">B<span style="font-size:9px;position:relative;top:3px">w</span></span></div></div>
<div class="a chb" style="left:238px"><div class="chh" style="background:#43252a;color:#f0e6e6">Ch 3</div>
<div class="chl">1 V/div<br>1 M&Omega;<br>20 MHz<span class="bw" style="top:39px;font-size:10px;line-height:12px">B<span style="font-size:9px;position:relative;top:3px">w</span></span></div></div>
<div class="a bb" style="left:1058px"><div style="position:absolute;left:4px;top:7px;width:31px;height:3px;background:#7ad83a"></div><div style="position:absolute;left:0;top:36px;width:38px;font-size:19px">4</div></div>
<div class="a vsep" style="left:1108px"></div>
<div class="a bb" style="left:1119px"><div style="position:absolute;left:4px;top:7px;width:31px;height:3px;background:#f39321"></div><div style="position:absolute;left:-3px;top:20px;width:44px">Add<br>New<br>Math</div></div>
<div class="a bb" style="left:1164px"><div style="position:absolute;left:4px;top:7px;width:31px;height:3px;background:#a7a9b8"></div><div style="position:absolute;left:-3px;top:20px;width:44px">Add<br>New<br>Ref</div></div>
<div class="a bb" style="left:1209px"><div style="position:absolute;left:4px;top:7px;width:31px;height:3px;background:#b45ae6"></div><div style="position:absolute;left:-3px;top:20px;width:44px">Add<br>New<br>Bus</div></div>
<div class="a vsep" style="left:1259px"></div>
<div class="a ib" style="left:1270px;width:199px"><div class="ih">Horizontal</div>
<div class="il" style="left:7px;top:22px">2 ms/div<br>SR: 12.5 MS/s<br>RL: 250 kpts</div>
<div class="il" style="left:113px;top:22px">20 ms<br>80 ns/pt<br><span style="padding-left:14px">80%</span></div>
<svg style="position:absolute;left:113px;top:61px" width="11" height="14" viewBox="0 0 11 14"><path d="M1 1h9v8h-3l-2 4l-2-4h-2z" fill="#000" stroke="#f39321" stroke-width="1.4"/><path d="M3 3h5v1.5h-1.7v4h-1.6v-4h-1.7z" fill="#fff"/></svg>
</div>
<div class="a ib" style="left:1476px;width:158px"><div class="ih">Trigger</div>
<div style="position:absolute;left:6px;top:23.5px;width:30px;height:16.5px;border-radius:6px;background:#fbf43a;border:1.3px solid #111;font-size:14.5px;line-height:15px;text-align:center;color:#000;padding-left:1px">1</div>
<svg style="position:absolute;left:44px;top:24px" width="20" height="16" viewBox="0 0 20 16"><path d="M2.1 12.2 H6.3 L14.6 2.6 H17.9" fill="none" stroke="#4b4b96" stroke-width="1.3"/></svg>
<div class="il" style="left:73px;top:22px">12.12 V</div>
</div>
<div class="a ib" style="left:1641px;width:148px"><div class="ih">Acquisition</div>
<div class="il" style="left:7px;top:22px">Auto,<br>Sample: 12 bits<br>36 Acqs</div>
<div class="il" style="right:6px;top:22px">Analyze</div>
</div>
<div class="a vsep" style="left:1802px"></div>
<div class="a" style="left:1813px;top:988px;width:89px;height:35px;border-radius:6px;background:#f3202c;border:1px solid #7a2a2a;color:#fff;font-weight:bold;font-size:13.4px;text-align:center;line-height:32px">Stopped</div>
<div class="a" style="left:1813px;top:1031px;width:90px;height:37px;border-radius:6px;background:#c9c9c9;color:#111;font-size:14.5px;text-align:center;line-height:17px;padding-top:3px">08 May 2023<br>6:22:19 PM</div>
</body></html>
